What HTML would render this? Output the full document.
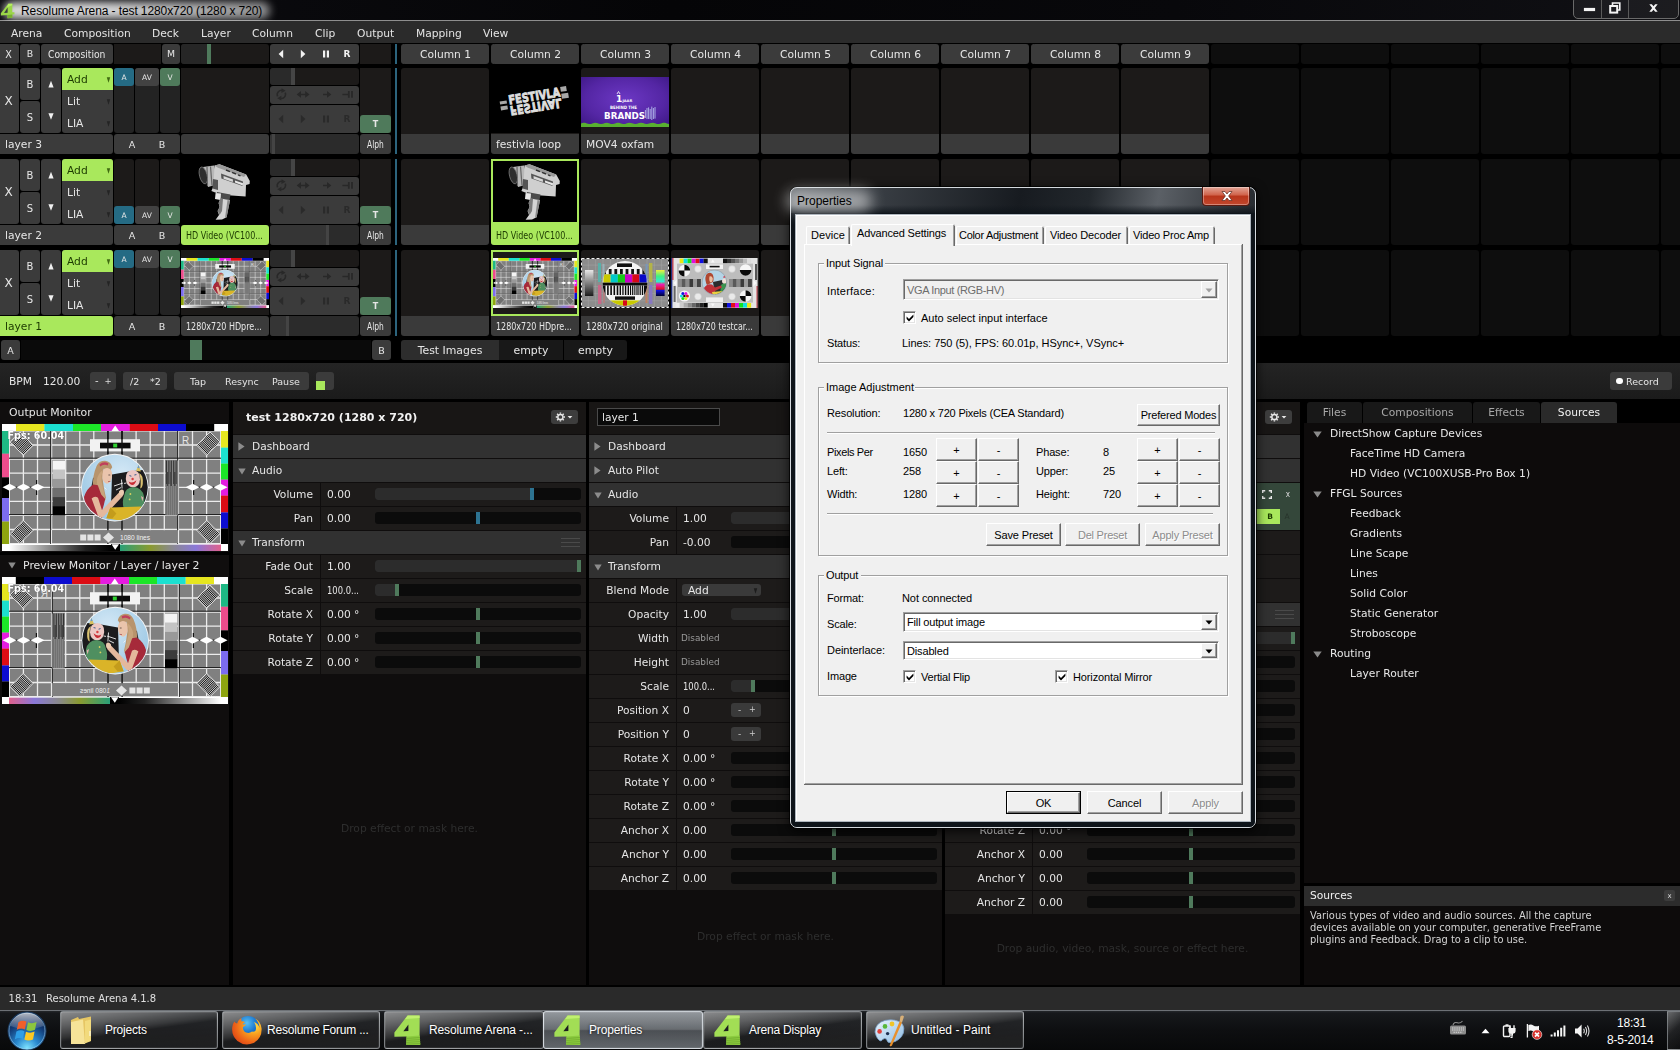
<!DOCTYPE html><html><head><meta charset="utf-8"><title>Resolume Arena - test 1280x720 (1280 x 720)</title><style>
html,body{margin:0;padding:0;}
body{width:1680px;height:1050px;overflow:hidden;background:#000;position:relative;font-family:"DejaVu Sans","Liberation Sans",sans-serif;font-size:10.7px;color:#e6e6e6;}
div,span,svg{position:absolute;box-sizing:border-box;}
.b{background:#3b3b3b;border-radius:3px;}
.t{white-space:nowrap;line-height:1;opacity:0.999;}
.t.win{opacity:1;}
.c{text-align:center;}
.cond{font-family:"DejaVu Sans Condensed","DejaVu Sans",sans-serif;}
.win{font-family:"Liberation Sans",sans-serif;color:#000;}
</style></head><body>
<div style="left:0px;top:0px;width:1680px;height:20px;background:linear-gradient(90deg,#0c0c10 0%,#050507 40%,#08080b 70%,#101014 100%);"></div>
<div style="left:0px;top:20px;width:1680px;height:1px;background:#8e8e8e;"></div>
<div style="left:4px;top:2px;width:266px;height:17px;background:linear-gradient(90deg,rgba(255,255,255,0.85) 0,rgba(255,255,255,0.85) 35%,rgba(255,255,255,0.55) 100%);border-radius:9px;filter:blur(4.5px);"></div>
<svg style="left:0px;top:3px;width:15px;height:16px" viewBox="0 0 28 30"><path d="M15.5 1.5L23 1.5L23 17.5L27 17.5L27 21L23 21.5L23 27.5L14 28.5L14 22.5L1.5 23.5L1.5 19Z" fill="#9ad548"/><path d="M15.5 1.5L23 1.5L23 4L12.6 8.6Z" fill="#b6ee62"/><path d="M14.2 8.5L14.2 18.2L7.6 18.6Z" fill="#3a3d40"/><path d="M14 22.5L23 21.6L23 27.5L14 28.5Z" fill="#78b030"/></svg>
<span class="t win" style="left:21px;top:-1.1999999999999993px;height:24px;line-height:24px;font-size:12px;color:#000;letter-spacing:-0.1px;">Resolume Arena - test 1280x720 (1280 x 720)</span>
<div style="left:1573px;top:-4px;width:106px;height:23px;background:rgba(255,255,255,0.05);border:1px solid #6a6a6a;border-radius:5px;"></div>
<div style="left:1601px;top:0px;width:1px;height:18px;background:#5a5a5a;"></div>
<div style="left:1628px;top:0px;width:1px;height:18px;background:#5a5a5a;"></div>
<div style="left:1584px;top:8px;width:11px;height:3px;background:#f4f4f4;box-shadow:0 0 1px #fff;"></div>
<svg style="left:1609px;top:2px;width:12px;height:12px" viewBox="0 0 12 12" fill="none" stroke="#f4f4f4" stroke-width="1.6"><path d="M3.5 3.2V1H10.8V8H8.6"/><rect x="1.2" y="4" width="7" height="6.6" stroke-width="2"/></svg>
<svg style="left:1647px;top:3px;width:13px;height:10px" viewBox="0 0 14 12"><path d="M2 1.5H5L7 4L9 1.5H12L8.6 6L12 10.5H9L7 8L5 10.5H2L5.4 6Z" fill="#f4f4f4"/></svg>
<div style="left:0px;top:21px;width:1680px;height:22px;background:#2b2b2b;"></div>
<span class="t " style="left:11px;top:22.900000000000002px;height:21.4px;line-height:21.4px;font-size:10.7px;color:#e4e4e4;">Arena</span>
<span class="t " style="left:64px;top:22.900000000000002px;height:21.4px;line-height:21.4px;font-size:10.7px;color:#e4e4e4;">Composition</span>
<span class="t " style="left:152px;top:22.900000000000002px;height:21.4px;line-height:21.4px;font-size:10.7px;color:#e4e4e4;">Deck</span>
<span class="t " style="left:201px;top:22.900000000000002px;height:21.4px;line-height:21.4px;font-size:10.7px;color:#e4e4e4;">Layer</span>
<span class="t " style="left:252px;top:22.900000000000002px;height:21.4px;line-height:21.4px;font-size:10.7px;color:#e4e4e4;">Column</span>
<span class="t " style="left:315px;top:22.900000000000002px;height:21.4px;line-height:21.4px;font-size:10.7px;color:#e4e4e4;">Clip</span>
<span class="t " style="left:357px;top:22.900000000000002px;height:21.4px;line-height:21.4px;font-size:10.7px;color:#e4e4e4;">Output</span>
<span class="t " style="left:416px;top:22.900000000000002px;height:21.4px;line-height:21.4px;font-size:10.7px;color:#e4e4e4;">Mapping</span>
<span class="t " style="left:483px;top:22.900000000000002px;height:21.4px;line-height:21.4px;font-size:10.7px;color:#e4e4e4;">View</span>
<div style="left:0px;top:44px;width:19px;height:20px;background:#3b3b3b;border-radius:3px;border-radius:0 3px 3px 0;"></div>
<span class="t c" style="left:0px;top:45.0px;height:19.2px;line-height:19.2px;font-size:9.6px;width:17px;color:#e6e6e6;">X</span>
<div style="left:20px;top:44px;width:20px;height:20px;background:#3b3b3b;border-radius:3px;"></div>
<span class="t  c" style="left:20px;top:45.2px;height:18.8px;line-height:18.8px;font-size:9.4px;width:20px;color:#e6e6e6;">B</span>
<div style="left:41px;top:44px;width:72px;height:20px;background:#3b3b3b;border-radius:3px;"></div>
<span class="t " style="left:48px;top:43.900000000000006px;height:21.4px;line-height:21.4px;font-size:10.7px;color:#e6e6e6;transform:scaleX(0.860);transform-origin:0 50%;">Composition</span>
<div style="left:114px;top:44px;width:47px;height:20px;background:#1c1a19;"></div>
<div style="left:162px;top:44px;width:18px;height:20px;background:#3b3b3b;border-radius:3px;"></div>
<span class="t  c" style="left:162px;top:45.3px;height:18.6px;line-height:18.6px;font-size:9.3px;width:18px;color:#e6e6e6;">M</span>
<div style="left:181px;top:44px;width:88px;height:20px;background:#1c1a19;border-radius:3px;"></div>
<div style="left:181px;top:44px;width:27px;height:20px;background:#262626;border-radius:3px 0 0 3px;"></div>
<div style="left:207px;top:44px;width:4px;height:20px;background:#4f7a5c;"></div>
<div style="left:270px;top:44px;width:89px;height:20px;background:#3b3b3b;border-radius:3px;"></div>
<svg style="left:277px;top:48.5px;width:8px;height:10px" viewBox="0 0 8 10"><path d="M6.2 0.8 L1.6 5 L6.2 9.2Z" fill="#f2f2f2"/></svg>
<svg style="left:299px;top:48.5px;width:8px;height:10px" viewBox="0 0 8 10"><path d="M1.8 0.8 L6.4 5 L1.8 9.2Z" fill="#f2f2f2"/></svg>
<svg style="left:322px;top:49.5px;width:8px;height:8px" viewBox="0 0 8 8"><rect x="1" y="0.5" width="2.2" height="7" fill="#f2f2f2"/><rect x="4.8" y="0.5" width="2.2" height="7" fill="#f2f2f2"/></svg>
<span class="t c" style="left:340px;top:45.3px;height:18px;line-height:18px;font-size:9px;width:14px;color:#f2f2f2;font-weight:bold;">R</span>
<div style="left:360px;top:44px;width:31px;height:20px;background:#1c1a19;"></div>
<div style="left:395px;top:44px;width:2px;height:316px;background:#2c647d;"></div>
<div style="left:394px;top:64px;width:4px;height:4px;background:#000;"></div>
<div style="left:394px;top:154px;width:4px;height:5px;background:#000;"></div>
<div style="left:394px;top:245px;width:4px;height:5px;background:#000;"></div>
<div style="left:394px;top:336px;width:4px;height:30px;background:#000;"></div>
<div style="left:402px;top:44px;width:87px;height:20px;background:#3b3b3b;border-radius:3px;"></div>
<span class="t  c" style="left:402px;top:43.900000000000006px;height:21.4px;line-height:21.4px;font-size:10.7px;width:87px;color:#e6e6e6;">Column 1</span>
<div style="left:401px;top:44px;width:3px;height:20px;background:#3b3b3b;border-radius:3px 0 0 3px;"></div>
<div style="left:492px;top:44px;width:87px;height:20px;background:#3b3b3b;border-radius:3px;"></div>
<span class="t  c" style="left:492px;top:43.900000000000006px;height:21.4px;line-height:21.4px;font-size:10.7px;width:87px;color:#e6e6e6;">Column 2</span>
<div style="left:491px;top:44px;width:3px;height:20px;background:#3b3b3b;border-radius:3px 0 0 3px;"></div>
<div style="left:582px;top:44px;width:87px;height:20px;background:#3b3b3b;border-radius:3px;"></div>
<span class="t  c" style="left:582px;top:43.900000000000006px;height:21.4px;line-height:21.4px;font-size:10.7px;width:87px;color:#e6e6e6;">Column 3</span>
<div style="left:581px;top:44px;width:3px;height:20px;background:#3b3b3b;border-radius:3px 0 0 3px;"></div>
<div style="left:672px;top:44px;width:87px;height:20px;background:#3b3b3b;border-radius:3px;"></div>
<span class="t  c" style="left:672px;top:43.900000000000006px;height:21.4px;line-height:21.4px;font-size:10.7px;width:87px;color:#e6e6e6;">Column 4</span>
<div style="left:671px;top:44px;width:3px;height:20px;background:#3b3b3b;border-radius:3px 0 0 3px;"></div>
<div style="left:762px;top:44px;width:87px;height:20px;background:#3b3b3b;border-radius:3px;"></div>
<span class="t  c" style="left:762px;top:43.900000000000006px;height:21.4px;line-height:21.4px;font-size:10.7px;width:87px;color:#e6e6e6;">Column 5</span>
<div style="left:761px;top:44px;width:3px;height:20px;background:#3b3b3b;border-radius:3px 0 0 3px;"></div>
<div style="left:852px;top:44px;width:87px;height:20px;background:#3b3b3b;border-radius:3px;"></div>
<span class="t  c" style="left:852px;top:43.900000000000006px;height:21.4px;line-height:21.4px;font-size:10.7px;width:87px;color:#e6e6e6;">Column 6</span>
<div style="left:851px;top:44px;width:3px;height:20px;background:#3b3b3b;border-radius:3px 0 0 3px;"></div>
<div style="left:942px;top:44px;width:87px;height:20px;background:#3b3b3b;border-radius:3px;"></div>
<span class="t  c" style="left:942px;top:43.900000000000006px;height:21.4px;line-height:21.4px;font-size:10.7px;width:87px;color:#e6e6e6;">Column 7</span>
<div style="left:941px;top:44px;width:3px;height:20px;background:#3b3b3b;border-radius:3px 0 0 3px;"></div>
<div style="left:1032px;top:44px;width:87px;height:20px;background:#3b3b3b;border-radius:3px;"></div>
<span class="t  c" style="left:1032px;top:43.900000000000006px;height:21.4px;line-height:21.4px;font-size:10.7px;width:87px;color:#e6e6e6;">Column 8</span>
<div style="left:1031px;top:44px;width:3px;height:20px;background:#3b3b3b;border-radius:3px 0 0 3px;"></div>
<div style="left:1122px;top:44px;width:87px;height:20px;background:#3b3b3b;border-radius:3px;"></div>
<span class="t  c" style="left:1122px;top:43.900000000000006px;height:21.4px;line-height:21.4px;font-size:10.7px;width:87px;color:#e6e6e6;">Column 9</span>
<div style="left:1121px;top:44px;width:3px;height:20px;background:#3b3b3b;border-radius:3px 0 0 3px;"></div>
<div style="left:1211px;top:44px;width:88px;height:20px;background:#0e0e0e;border-radius:3px;"></div>
<div style="left:1301px;top:44px;width:88px;height:20px;background:#0e0e0e;border-radius:3px;"></div>
<div style="left:1391px;top:44px;width:88px;height:20px;background:#0e0e0e;border-radius:3px;"></div>
<div style="left:1481px;top:44px;width:88px;height:20px;background:#0e0e0e;border-radius:3px;"></div>
<div style="left:1571px;top:44px;width:88px;height:20px;background:#0e0e0e;border-radius:3px;"></div>
<div style="left:1661px;top:44px;width:88px;height:20px;background:#0e0e0e;border-radius:3px;"></div>
<div style="left:0px;top:68px;width:19px;height:65px;background:#3b3b3b;border-radius:3px;border-radius:0 3px 3px 0;"></div>
<span class="t c" style="left:0px;top:89px;height:24px;line-height:24px;font-size:12px;width:17px;color:#e6e6e6;">X</span>
<div style="left:20px;top:68px;width:20px;height:32px;background:#3b3b3b;border-radius:3px;"></div>
<span class="t  c" style="left:20px;top:75.0px;height:20px;line-height:20px;font-size:10px;width:20px;color:#e6e6e6;">B</span>
<div style="left:20px;top:101px;width:20px;height:32px;background:#3b3b3b;border-radius:3px;"></div>
<span class="t  c" style="left:20px;top:108.0px;height:20px;line-height:20px;font-size:10px;width:20px;color:#e6e6e6;">S</span>
<div style="left:41px;top:68px;width:20px;height:65px;background:#3b3b3b;border-radius:3px;"></div>
<svg style="left:41px;top:68px;width:20px;height:65px" viewBox="0 0 20 65"><path d="M7.4 19.4 L12.6 19.4 L10 12.8Z M7.4 45.2 L12.6 45.2 L10 51.8Z" fill="#f0f0f0"/></svg>
<div style="left:62px;top:68px;width:51px;height:65px;background:#3b3b3b;border-radius:3px;"></div>
<div style="left:62px;top:68px;width:51px;height:22px;background:#a9e85c;border-radius:3px 3px 0 0;"></div>
<span class="t " style="left:67px;top:68.8px;height:21.4px;line-height:21.4px;font-size:10.7px;color:#1c3a00;">Add</span>
<span class="t " style="left:67px;top:90.89999999999999px;height:21.4px;line-height:21.4px;font-size:10.7px;color:#e6e6e6;">Lit</span>
<span class="t " style="left:67px;top:112.89999999999999px;height:21.4px;line-height:21.4px;font-size:10.7px;color:#e6e6e6;">LIA</span>
<svg style="left:106px;top:77px;width:5px;height:6px" viewBox="0 0 5 6"><path d="M0.8 0.3 L4.2 0.3 L2.5 5.8Z" fill="#3f6a10"/></svg>
<svg style="left:106px;top:99px;width:5px;height:6px" viewBox="0 0 5 6"><path d="M0.8 0.3 L4.2 0.3 L2.5 5.8Z" fill="#242424"/></svg>
<svg style="left:106px;top:121px;width:5px;height:6px" viewBox="0 0 5 6"><path d="M0.8 0.3 L4.2 0.3 L2.5 5.8Z" fill="#242424"/></svg>
<div style="left:114px;top:68px;width:20px;height:65px;background:#232323;border-radius:3px;"></div>
<div style="left:114px;top:68px;width:20px;height:18px;background:#256b84;border-radius:3px;"></div>
<span class="t c" style="left:114px;top:69.5px;height:15.0px;line-height:15.0px;font-size:7.5px;width:20px;color:#e8e8e8;">A</span>
<div style="left:135px;top:68px;width:24px;height:65px;background:#232323;border-radius:3px;"></div>
<div style="left:135px;top:68px;width:24px;height:18px;background:#424242;border-radius:3px;"></div>
<span class="t c" style="left:135px;top:69.5px;height:15.0px;line-height:15.0px;font-size:7.5px;width:24px;color:#e8e8e8;">AV</span>
<div style="left:160px;top:68px;width:20px;height:65px;background:#232323;border-radius:3px;"></div>
<div style="left:160px;top:68px;width:20px;height:18px;background:#4f7a5b;border-radius:3px;"></div>
<span class="t c" style="left:160px;top:69.5px;height:15.0px;line-height:15.0px;font-size:7.5px;width:20px;color:#e8e8e8;">V</span>
<div style="left:181px;top:68px;width:88px;height:65px;background:#1c1a19;"></div>
<div style="left:270px;top:68px;width:89px;height:17px;background:#1c1a19;border-radius:3px;"></div>
<div style="left:270px;top:68px;width:22px;height:17px;background:#2a2a2a;border-radius:3px 0 0 3px;"></div>
<div style="left:291px;top:68px;width:4px;height:17px;background:#454545;"></div>
<div style="left:270px;top:86px;width:89px;height:18px;background:#3b3b3b;border-radius:3px;"></div>
<svg style="left:270px;top:86px;width:89px;height:18px" viewBox="0 0 89 18"><g fill="none" stroke="#282828" stroke-width="1.5"><path d="M7.6 10.4A4.3 4.3 0 0 1 13 4.6M15.2 6.6A4.3 4.3 0 0 1 9.8 12.3"/><path d="M29.5 8.4H37M53 8.4H58M72.4 8.4H78"/><path d="M78.8 5V11.8M82 5V11.8" stroke-width="1.8"/></g><g fill="#282828"><path d="M11.6 2.2L15.6 4.8L11.4 7Z M11.2 14.6L7.2 12.2L11.4 9.8Z"/><path d="M26.6 8.4L31 5V11.8Z M39.6 8.4L35.2 5V11.8Z M61.4 8.4L57 5V11.8Z"/></g></svg>
<div style="left:270px;top:105px;width:89px;height:28px;background:#3b3b3b;border-radius:3px;"></div>
<svg style="left:277px;top:113.5px;width:8px;height:10px" viewBox="0 0 8 10"><path d="M6.2 0.8 L1.6 5 L6.2 9.2Z" fill="#2a2a2a"/></svg>
<svg style="left:299px;top:113.5px;width:8px;height:10px" viewBox="0 0 8 10"><path d="M1.8 0.8 L6.4 5 L1.8 9.2Z" fill="#2a2a2a"/></svg>
<svg style="left:322px;top:114.5px;width:8px;height:8px" viewBox="0 0 8 8"><rect x="1" y="0.5" width="2.2" height="7" fill="#2a2a2a"/><rect x="4.8" y="0.5" width="2.2" height="7" fill="#2a2a2a"/></svg>
<span class="t c" style="left:340px;top:110.3px;height:18px;line-height:18px;font-size:9px;width:14px;color:#2a2a2a;font-weight:bold;">R</span>
<div style="left:360px;top:68px;width:31px;height:65px;background:#1c1a19;"></div>
<div style="left:360px;top:115px;width:31px;height:18px;background:#4f7a5b;border-radius:3px;"></div>
<span class="t  c" style="left:360px;top:117.3px;height:16px;line-height:16px;font-size:8px;width:31px;color:#e6e6e6;font-weight:bold;">T</span>
<div style="left:0px;top:134px;width:113px;height:20px;background:#3b3b3b;border-radius:0 3px 3px 0;"></div>
<span class="t " style="left:5px;top:133.60000000000002px;height:21.4px;line-height:21.4px;font-size:10.7px;color:#e6e6e6;">layer 3</span>
<div style="left:114px;top:134px;width:66px;height:20px;background:#3b3b3b;border-radius:3px;"></div>
<span class="t c" style="left:114px;top:134.8px;height:19.0px;line-height:19.0px;font-size:9.5px;width:36px;color:#e6e6e6;">A</span>
<span class="t c" style="left:144px;top:134.8px;height:19.0px;line-height:19.0px;font-size:9.5px;width:36px;color:#e6e6e6;">B</span>
<div style="left:270px;top:134px;width:89px;height:20px;background:#2b2b2b;border-radius:3px;"></div>
<div style="left:270px;top:134px;width:2px;height:20px;background:#353535;border-radius:3px 0 0 3px;"></div>
<div style="left:272px;top:134px;width:3px;height:20px;background:#444;"></div>
<div style="left:360px;top:134px;width:31px;height:20px;background:#3b3b3b;border-radius:3px;"></div>
<span class="t " style="left:367px;top:133.60000000000002px;height:21.4px;line-height:21.4px;font-size:10.7px;color:#e6e6e6;transform:scaleX(0.704);transform-origin:0 50%;">Alph</span>
<div style="left:0px;top:159px;width:19px;height:65px;background:#3b3b3b;border-radius:3px;border-radius:0 3px 3px 0;"></div>
<span class="t c" style="left:0px;top:180px;height:24px;line-height:24px;font-size:12px;width:17px;color:#e6e6e6;">X</span>
<div style="left:20px;top:159px;width:20px;height:32px;background:#3b3b3b;border-radius:3px;"></div>
<span class="t  c" style="left:20px;top:166.0px;height:20px;line-height:20px;font-size:10px;width:20px;color:#e6e6e6;">B</span>
<div style="left:20px;top:192px;width:20px;height:32px;background:#3b3b3b;border-radius:3px;"></div>
<span class="t  c" style="left:20px;top:199.0px;height:20px;line-height:20px;font-size:10px;width:20px;color:#e6e6e6;">S</span>
<div style="left:41px;top:159px;width:20px;height:65px;background:#3b3b3b;border-radius:3px;"></div>
<svg style="left:41px;top:159px;width:20px;height:65px" viewBox="0 0 20 65"><path d="M7.4 19.4 L12.6 19.4 L10 12.8Z M7.4 45.2 L12.6 45.2 L10 51.8Z" fill="#f0f0f0"/></svg>
<div style="left:62px;top:159px;width:51px;height:65px;background:#3b3b3b;border-radius:3px;"></div>
<div style="left:62px;top:159px;width:51px;height:22px;background:#a9e85c;border-radius:3px 3px 0 0;"></div>
<span class="t " style="left:67px;top:159.8px;height:21.4px;line-height:21.4px;font-size:10.7px;color:#1c3a00;">Add</span>
<span class="t " style="left:67px;top:181.9px;height:21.4px;line-height:21.4px;font-size:10.7px;color:#e6e6e6;">Lit</span>
<span class="t " style="left:67px;top:203.9px;height:21.4px;line-height:21.4px;font-size:10.7px;color:#e6e6e6;">LIA</span>
<svg style="left:106px;top:168px;width:5px;height:6px" viewBox="0 0 5 6"><path d="M0.8 0.3 L4.2 0.3 L2.5 5.8Z" fill="#3f6a10"/></svg>
<svg style="left:106px;top:190px;width:5px;height:6px" viewBox="0 0 5 6"><path d="M0.8 0.3 L4.2 0.3 L2.5 5.8Z" fill="#242424"/></svg>
<svg style="left:106px;top:212px;width:5px;height:6px" viewBox="0 0 5 6"><path d="M0.8 0.3 L4.2 0.3 L2.5 5.8Z" fill="#242424"/></svg>
<div style="left:114px;top:159px;width:20px;height:65px;background:#1c1a19;border-radius:3px;"></div>
<div style="left:114px;top:206px;width:20px;height:18px;background:#256b84;border-radius:3px;"></div>
<span class="t c" style="left:114px;top:207.5px;height:15.0px;line-height:15.0px;font-size:7.5px;width:20px;color:#e8e8e8;">A</span>
<div style="left:135px;top:159px;width:24px;height:65px;background:#1c1a19;border-radius:3px;"></div>
<div style="left:135px;top:206px;width:24px;height:18px;background:#424242;border-radius:3px;"></div>
<span class="t c" style="left:135px;top:207.5px;height:15.0px;line-height:15.0px;font-size:7.5px;width:24px;color:#e8e8e8;">AV</span>
<div style="left:160px;top:159px;width:20px;height:65px;background:#1c1a19;border-radius:3px;"></div>
<div style="left:160px;top:206px;width:20px;height:18px;background:#4f7a5b;border-radius:3px;"></div>
<span class="t c" style="left:160px;top:207.5px;height:15.0px;line-height:15.0px;font-size:7.5px;width:20px;color:#e8e8e8;">V</span>
<div style="left:181px;top:159px;width:88px;height:65px;background:#1c1a19;"></div>
<div style="left:270px;top:159px;width:89px;height:17px;background:#1c1a19;border-radius:3px;"></div>
<div style="left:270px;top:159px;width:22px;height:17px;background:#2a2a2a;border-radius:3px 0 0 3px;"></div>
<div style="left:291px;top:159px;width:4px;height:17px;background:#454545;"></div>
<div style="left:270px;top:177px;width:89px;height:18px;background:#3b3b3b;border-radius:3px;"></div>
<svg style="left:270px;top:177px;width:89px;height:18px" viewBox="0 0 89 18"><g fill="none" stroke="#282828" stroke-width="1.5"><path d="M7.6 10.4A4.3 4.3 0 0 1 13 4.6M15.2 6.6A4.3 4.3 0 0 1 9.8 12.3"/><path d="M29.5 8.4H37M53 8.4H58M72.4 8.4H78"/><path d="M78.8 5V11.8M82 5V11.8" stroke-width="1.8"/></g><g fill="#282828"><path d="M11.6 2.2L15.6 4.8L11.4 7Z M11.2 14.6L7.2 12.2L11.4 9.8Z"/><path d="M26.6 8.4L31 5V11.8Z M39.6 8.4L35.2 5V11.8Z M61.4 8.4L57 5V11.8Z"/></g></svg>
<div style="left:270px;top:196px;width:89px;height:28px;background:#3b3b3b;border-radius:3px;"></div>
<svg style="left:277px;top:204.5px;width:8px;height:10px" viewBox="0 0 8 10"><path d="M6.2 0.8 L1.6 5 L6.2 9.2Z" fill="#2a2a2a"/></svg>
<svg style="left:299px;top:204.5px;width:8px;height:10px" viewBox="0 0 8 10"><path d="M1.8 0.8 L6.4 5 L1.8 9.2Z" fill="#2a2a2a"/></svg>
<svg style="left:322px;top:205.5px;width:8px;height:8px" viewBox="0 0 8 8"><rect x="1" y="0.5" width="2.2" height="7" fill="#2a2a2a"/><rect x="4.8" y="0.5" width="2.2" height="7" fill="#2a2a2a"/></svg>
<span class="t c" style="left:340px;top:201.3px;height:18px;line-height:18px;font-size:9px;width:14px;color:#2a2a2a;font-weight:bold;">R</span>
<div style="left:360px;top:159px;width:31px;height:65px;background:#1c1a19;"></div>
<div style="left:360px;top:206px;width:31px;height:18px;background:#4f7a5b;border-radius:3px;"></div>
<span class="t  c" style="left:360px;top:208.3px;height:16px;line-height:16px;font-size:8px;width:31px;color:#e6e6e6;font-weight:bold;">T</span>
<div style="left:0px;top:225px;width:113px;height:20px;background:#3b3b3b;border-radius:0 3px 3px 0;"></div>
<span class="t " style="left:5px;top:224.60000000000002px;height:21.4px;line-height:21.4px;font-size:10.7px;color:#e6e6e6;">layer 2</span>
<div style="left:114px;top:225px;width:66px;height:20px;background:#3b3b3b;border-radius:3px;"></div>
<span class="t c" style="left:114px;top:225.8px;height:19.0px;line-height:19.0px;font-size:9.5px;width:36px;color:#e6e6e6;">A</span>
<span class="t c" style="left:144px;top:225.8px;height:19.0px;line-height:19.0px;font-size:9.5px;width:36px;color:#e6e6e6;">B</span>
<div style="left:270px;top:225px;width:89px;height:20px;background:#2b2b2b;border-radius:3px;"></div>
<div style="left:270px;top:225px;width:56px;height:20px;background:#353535;border-radius:3px 0 0 3px;"></div>
<div style="left:326px;top:225px;width:3px;height:20px;background:#444;"></div>
<div style="left:360px;top:225px;width:31px;height:20px;background:#3b3b3b;border-radius:3px;"></div>
<span class="t " style="left:367px;top:224.60000000000002px;height:21.4px;line-height:21.4px;font-size:10.7px;color:#e6e6e6;transform:scaleX(0.704);transform-origin:0 50%;">Alph</span>
<div style="left:0px;top:250px;width:19px;height:65px;background:#3b3b3b;border-radius:3px;border-radius:0 3px 3px 0;"></div>
<span class="t c" style="left:0px;top:271px;height:24px;line-height:24px;font-size:12px;width:17px;color:#e6e6e6;">X</span>
<div style="left:20px;top:250px;width:20px;height:32px;background:#3b3b3b;border-radius:3px;"></div>
<span class="t  c" style="left:20px;top:257.0px;height:20px;line-height:20px;font-size:10px;width:20px;color:#e6e6e6;">B</span>
<div style="left:20px;top:283px;width:20px;height:32px;background:#3b3b3b;border-radius:3px;"></div>
<span class="t  c" style="left:20px;top:290.0px;height:20px;line-height:20px;font-size:10px;width:20px;color:#e6e6e6;">S</span>
<div style="left:41px;top:250px;width:20px;height:65px;background:#3b3b3b;border-radius:3px;"></div>
<svg style="left:41px;top:250px;width:20px;height:65px" viewBox="0 0 20 65"><path d="M7.4 19.4 L12.6 19.4 L10 12.8Z M7.4 45.2 L12.6 45.2 L10 51.8Z" fill="#f0f0f0"/></svg>
<div style="left:62px;top:250px;width:51px;height:65px;background:#3b3b3b;border-radius:3px;"></div>
<div style="left:62px;top:250px;width:51px;height:22px;background:#a9e85c;border-radius:3px 3px 0 0;"></div>
<span class="t " style="left:67px;top:250.8px;height:21.4px;line-height:21.4px;font-size:10.7px;color:#1c3a00;">Add</span>
<span class="t " style="left:67px;top:272.90000000000003px;height:21.4px;line-height:21.4px;font-size:10.7px;color:#e6e6e6;">Lit</span>
<span class="t " style="left:67px;top:294.90000000000003px;height:21.4px;line-height:21.4px;font-size:10.7px;color:#e6e6e6;">LIA</span>
<svg style="left:106px;top:259px;width:5px;height:6px" viewBox="0 0 5 6"><path d="M0.8 0.3 L4.2 0.3 L2.5 5.8Z" fill="#3f6a10"/></svg>
<svg style="left:106px;top:281px;width:5px;height:6px" viewBox="0 0 5 6"><path d="M0.8 0.3 L4.2 0.3 L2.5 5.8Z" fill="#242424"/></svg>
<svg style="left:106px;top:303px;width:5px;height:6px" viewBox="0 0 5 6"><path d="M0.8 0.3 L4.2 0.3 L2.5 5.8Z" fill="#242424"/></svg>
<div style="left:114px;top:250px;width:20px;height:65px;background:#232323;border-radius:3px;"></div>
<div style="left:114px;top:250px;width:20px;height:18px;background:#256b84;border-radius:3px;"></div>
<span class="t c" style="left:114px;top:251.5px;height:15.0px;line-height:15.0px;font-size:7.5px;width:20px;color:#e8e8e8;">A</span>
<div style="left:135px;top:250px;width:24px;height:65px;background:#232323;border-radius:3px;"></div>
<div style="left:135px;top:250px;width:24px;height:18px;background:#424242;border-radius:3px;"></div>
<span class="t c" style="left:135px;top:251.5px;height:15.0px;line-height:15.0px;font-size:7.5px;width:24px;color:#e8e8e8;">AV</span>
<div style="left:160px;top:250px;width:20px;height:65px;background:#232323;border-radius:3px;"></div>
<div style="left:160px;top:250px;width:20px;height:18px;background:#4f7a5b;border-radius:3px;"></div>
<span class="t c" style="left:160px;top:251.5px;height:15.0px;line-height:15.0px;font-size:7.5px;width:20px;color:#e8e8e8;">V</span>
<div style="left:181px;top:250px;width:88px;height:65px;background:#1c1a19;"></div>
<div style="left:270px;top:250px;width:89px;height:17px;background:#1c1a19;border-radius:3px;"></div>
<div style="left:270px;top:250px;width:22px;height:17px;background:#2a2a2a;border-radius:3px 0 0 3px;"></div>
<div style="left:291px;top:250px;width:4px;height:17px;background:#454545;"></div>
<div style="left:270px;top:268px;width:89px;height:18px;background:#3b3b3b;border-radius:3px;"></div>
<svg style="left:270px;top:268px;width:89px;height:18px" viewBox="0 0 89 18"><g fill="none" stroke="#282828" stroke-width="1.5"><path d="M7.6 10.4A4.3 4.3 0 0 1 13 4.6M15.2 6.6A4.3 4.3 0 0 1 9.8 12.3"/><path d="M29.5 8.4H37M53 8.4H58M72.4 8.4H78"/><path d="M78.8 5V11.8M82 5V11.8" stroke-width="1.8"/></g><g fill="#282828"><path d="M11.6 2.2L15.6 4.8L11.4 7Z M11.2 14.6L7.2 12.2L11.4 9.8Z"/><path d="M26.6 8.4L31 5V11.8Z M39.6 8.4L35.2 5V11.8Z M61.4 8.4L57 5V11.8Z"/></g></svg>
<div style="left:270px;top:287px;width:89px;height:28px;background:#3b3b3b;border-radius:3px;"></div>
<svg style="left:277px;top:295.5px;width:8px;height:10px" viewBox="0 0 8 10"><path d="M6.2 0.8 L1.6 5 L6.2 9.2Z" fill="#2a2a2a"/></svg>
<svg style="left:299px;top:295.5px;width:8px;height:10px" viewBox="0 0 8 10"><path d="M1.8 0.8 L6.4 5 L1.8 9.2Z" fill="#2a2a2a"/></svg>
<svg style="left:322px;top:296.5px;width:8px;height:8px" viewBox="0 0 8 8"><rect x="1" y="0.5" width="2.2" height="7" fill="#2a2a2a"/><rect x="4.8" y="0.5" width="2.2" height="7" fill="#2a2a2a"/></svg>
<span class="t c" style="left:340px;top:292.3px;height:18px;line-height:18px;font-size:9px;width:14px;color:#2a2a2a;font-weight:bold;">R</span>
<div style="left:360px;top:250px;width:31px;height:65px;background:#1c1a19;"></div>
<div style="left:360px;top:297px;width:31px;height:18px;background:#4f7a5b;border-radius:3px;"></div>
<span class="t  c" style="left:360px;top:299.3px;height:16px;line-height:16px;font-size:8px;width:31px;color:#e6e6e6;font-weight:bold;">T</span>
<div style="left:0px;top:316px;width:113px;height:20px;background:#a9e85c;border-radius:0 3px 3px 0;"></div>
<span class="t " style="left:5px;top:315.6px;height:21.4px;line-height:21.4px;font-size:10.7px;color:#1c3a00;">layer 1</span>
<div style="left:114px;top:316px;width:66px;height:20px;background:#3b3b3b;border-radius:3px;"></div>
<span class="t c" style="left:114px;top:316.8px;height:19.0px;line-height:19.0px;font-size:9.5px;width:36px;color:#e6e6e6;">A</span>
<span class="t c" style="left:144px;top:316.8px;height:19.0px;line-height:19.0px;font-size:9.5px;width:36px;color:#e6e6e6;">B</span>
<div style="left:270px;top:316px;width:89px;height:20px;background:#2b2b2b;border-radius:3px;"></div>
<div style="left:270px;top:316px;width:16px;height:20px;background:#353535;border-radius:3px 0 0 3px;"></div>
<div style="left:286px;top:316px;width:3px;height:20px;background:#444;"></div>
<div style="left:360px;top:316px;width:31px;height:20px;background:#3b3b3b;border-radius:3px;"></div>
<span class="t " style="left:367px;top:315.6px;height:21.4px;line-height:21.4px;font-size:10.7px;color:#e6e6e6;transform:scaleX(0.704);transform-origin:0 50%;">Alph</span>
<div style="left:401px;top:68px;width:88px;height:66px;background:#1c1a19;border-radius:3px 3px 0 0;"></div>
<div style="left:401px;top:134px;width:88px;height:20px;background:#3a3a3a;border-radius:0 0 3px 3px;"></div>
<div style="left:491px;top:68px;width:88px;height:66px;background:#1c1a19;border-radius:3px 3px 0 0;"></div>
<div style="left:491px;top:134px;width:88px;height:20px;background:#3a3a3a;border-radius:0 0 3px 3px;"></div>
<div style="left:581px;top:68px;width:88px;height:66px;background:#1c1a19;border-radius:3px 3px 0 0;"></div>
<div style="left:581px;top:134px;width:88px;height:20px;background:#3a3a3a;border-radius:0 0 3px 3px;"></div>
<div style="left:671px;top:68px;width:88px;height:66px;background:#1c1a19;border-radius:3px 3px 0 0;"></div>
<div style="left:671px;top:134px;width:88px;height:20px;background:#3a3a3a;border-radius:0 0 3px 3px;"></div>
<div style="left:761px;top:68px;width:88px;height:66px;background:#1c1a19;border-radius:3px 3px 0 0;"></div>
<div style="left:761px;top:134px;width:88px;height:20px;background:#3a3a3a;border-radius:0 0 3px 3px;"></div>
<div style="left:851px;top:68px;width:88px;height:66px;background:#1c1a19;border-radius:3px 3px 0 0;"></div>
<div style="left:851px;top:134px;width:88px;height:20px;background:#3a3a3a;border-radius:0 0 3px 3px;"></div>
<div style="left:941px;top:68px;width:88px;height:66px;background:#1c1a19;border-radius:3px 3px 0 0;"></div>
<div style="left:941px;top:134px;width:88px;height:20px;background:#3a3a3a;border-radius:0 0 3px 3px;"></div>
<div style="left:1031px;top:68px;width:88px;height:66px;background:#1c1a19;border-radius:3px 3px 0 0;"></div>
<div style="left:1031px;top:134px;width:88px;height:20px;background:#3a3a3a;border-radius:0 0 3px 3px;"></div>
<div style="left:1121px;top:68px;width:88px;height:66px;background:#1c1a19;border-radius:3px 3px 0 0;"></div>
<div style="left:1121px;top:134px;width:88px;height:20px;background:#3a3a3a;border-radius:0 0 3px 3px;"></div>
<div style="left:1211px;top:68px;width:88px;height:86px;background:#0e0e0e;border-radius:3px;"></div>
<div style="left:1301px;top:68px;width:88px;height:86px;background:#0e0e0e;border-radius:3px;"></div>
<div style="left:1391px;top:68px;width:88px;height:86px;background:#0e0e0e;border-radius:3px;"></div>
<div style="left:1481px;top:68px;width:88px;height:86px;background:#0e0e0e;border-radius:3px;"></div>
<div style="left:1571px;top:68px;width:88px;height:86px;background:#0e0e0e;border-radius:3px;"></div>
<div style="left:1661px;top:68px;width:88px;height:86px;background:#0e0e0e;border-radius:3px;"></div>
<div style="left:401px;top:159px;width:88px;height:66px;background:#1c1a19;border-radius:3px 3px 0 0;"></div>
<div style="left:401px;top:225px;width:88px;height:20px;background:#3a3a3a;border-radius:0 0 3px 3px;"></div>
<div style="left:491px;top:159px;width:88px;height:66px;background:#1c1a19;border-radius:3px 3px 0 0;"></div>
<div style="left:491px;top:225px;width:88px;height:20px;background:#3a3a3a;border-radius:0 0 3px 3px;"></div>
<div style="left:581px;top:159px;width:88px;height:66px;background:#1c1a19;border-radius:3px 3px 0 0;"></div>
<div style="left:581px;top:225px;width:88px;height:20px;background:#3a3a3a;border-radius:0 0 3px 3px;"></div>
<div style="left:671px;top:159px;width:88px;height:66px;background:#1c1a19;border-radius:3px 3px 0 0;"></div>
<div style="left:671px;top:225px;width:88px;height:20px;background:#3a3a3a;border-radius:0 0 3px 3px;"></div>
<div style="left:761px;top:159px;width:88px;height:66px;background:#1c1a19;border-radius:3px 3px 0 0;"></div>
<div style="left:761px;top:225px;width:88px;height:20px;background:#3a3a3a;border-radius:0 0 3px 3px;"></div>
<div style="left:851px;top:159px;width:88px;height:66px;background:#1c1a19;border-radius:3px 3px 0 0;"></div>
<div style="left:851px;top:225px;width:88px;height:20px;background:#3a3a3a;border-radius:0 0 3px 3px;"></div>
<div style="left:941px;top:159px;width:88px;height:66px;background:#1c1a19;border-radius:3px 3px 0 0;"></div>
<div style="left:941px;top:225px;width:88px;height:20px;background:#3a3a3a;border-radius:0 0 3px 3px;"></div>
<div style="left:1031px;top:159px;width:88px;height:66px;background:#1c1a19;border-radius:3px 3px 0 0;"></div>
<div style="left:1031px;top:225px;width:88px;height:20px;background:#3a3a3a;border-radius:0 0 3px 3px;"></div>
<div style="left:1121px;top:159px;width:88px;height:66px;background:#1c1a19;border-radius:3px 3px 0 0;"></div>
<div style="left:1121px;top:225px;width:88px;height:20px;background:#3a3a3a;border-radius:0 0 3px 3px;"></div>
<div style="left:1211px;top:159px;width:88px;height:86px;background:#0e0e0e;border-radius:3px;"></div>
<div style="left:1301px;top:159px;width:88px;height:86px;background:#0e0e0e;border-radius:3px;"></div>
<div style="left:1391px;top:159px;width:88px;height:86px;background:#0e0e0e;border-radius:3px;"></div>
<div style="left:1481px;top:159px;width:88px;height:86px;background:#0e0e0e;border-radius:3px;"></div>
<div style="left:1571px;top:159px;width:88px;height:86px;background:#0e0e0e;border-radius:3px;"></div>
<div style="left:1661px;top:159px;width:88px;height:86px;background:#0e0e0e;border-radius:3px;"></div>
<div style="left:401px;top:250px;width:88px;height:66px;background:#1c1a19;border-radius:3px 3px 0 0;"></div>
<div style="left:401px;top:316px;width:88px;height:20px;background:#3a3a3a;border-radius:0 0 3px 3px;"></div>
<div style="left:491px;top:250px;width:88px;height:66px;background:#1c1a19;border-radius:3px 3px 0 0;"></div>
<div style="left:491px;top:316px;width:88px;height:20px;background:#3a3a3a;border-radius:0 0 3px 3px;"></div>
<div style="left:581px;top:250px;width:88px;height:66px;background:#1c1a19;border-radius:3px 3px 0 0;"></div>
<div style="left:581px;top:316px;width:88px;height:20px;background:#3a3a3a;border-radius:0 0 3px 3px;"></div>
<div style="left:671px;top:250px;width:88px;height:66px;background:#1c1a19;border-radius:3px 3px 0 0;"></div>
<div style="left:671px;top:316px;width:88px;height:20px;background:#3a3a3a;border-radius:0 0 3px 3px;"></div>
<div style="left:761px;top:250px;width:88px;height:66px;background:#1c1a19;border-radius:3px 3px 0 0;"></div>
<div style="left:761px;top:316px;width:88px;height:20px;background:#3a3a3a;border-radius:0 0 3px 3px;"></div>
<div style="left:851px;top:250px;width:88px;height:66px;background:#1c1a19;border-radius:3px 3px 0 0;"></div>
<div style="left:851px;top:316px;width:88px;height:20px;background:#3a3a3a;border-radius:0 0 3px 3px;"></div>
<div style="left:941px;top:250px;width:88px;height:66px;background:#1c1a19;border-radius:3px 3px 0 0;"></div>
<div style="left:941px;top:316px;width:88px;height:20px;background:#3a3a3a;border-radius:0 0 3px 3px;"></div>
<div style="left:1031px;top:250px;width:88px;height:66px;background:#1c1a19;border-radius:3px 3px 0 0;"></div>
<div style="left:1031px;top:316px;width:88px;height:20px;background:#3a3a3a;border-radius:0 0 3px 3px;"></div>
<div style="left:1121px;top:250px;width:88px;height:66px;background:#1c1a19;border-radius:3px 3px 0 0;"></div>
<div style="left:1121px;top:316px;width:88px;height:20px;background:#3a3a3a;border-radius:0 0 3px 3px;"></div>
<div style="left:1211px;top:250px;width:88px;height:86px;background:#0e0e0e;border-radius:3px;"></div>
<div style="left:1301px;top:250px;width:88px;height:86px;background:#0e0e0e;border-radius:3px;"></div>
<div style="left:1391px;top:250px;width:88px;height:86px;background:#0e0e0e;border-radius:3px;"></div>
<div style="left:1481px;top:250px;width:88px;height:86px;background:#0e0e0e;border-radius:3px;"></div>
<div style="left:1571px;top:250px;width:88px;height:86px;background:#0e0e0e;border-radius:3px;"></div>
<div style="left:1661px;top:250px;width:88px;height:86px;background:#0e0e0e;border-radius:3px;"></div>
<div style="left:181px;top:134px;width:88px;height:20px;background:#3b3b3b;border-radius:3px;"></div>
<div style="left:181px;top:225px;width:88px;height:20px;background:#a9e85c;border-radius:3px;"></div>
<span class="t " style="left:186px;top:224.70000000000002px;height:21.4px;line-height:21.4px;font-size:10.7px;color:#1c3a00;transform:scaleX(0.750);transform-origin:0 50%;">HD Video (VC100...</span>
<div style="left:181px;top:316px;width:88px;height:20px;background:#3b3b3b;border-radius:3px;"></div>
<span class="t " style="left:186px;top:315.7px;height:21.4px;line-height:21.4px;font-size:10.7px;color:#e6e6e6;transform:scaleX(0.749);transform-origin:0 50%;">1280x720 HDpre...</span>
<svg style="left:491px;top:68px;width:88px;height:65px" viewBox="0 0 88 65"><rect width="88" height="65" fill="#000"/><g transform="translate(44 33) rotate(-9)" font-family="DejaVu Sans,sans-serif" font-weight="bold" fill="#dedede" stroke="#dedede" stroke-width="0.9" text-anchor="middle"><text x="0" y="-0.5" font-size="12.5" textLength="52" lengthAdjust="spacingAndGlyphs">FESTIVLA</text><text x="0" y="-1.5" font-size="12.5" textLength="52" lengthAdjust="spacingAndGlyphs" transform="scale(1,-1)">FESTIVAL</text><path d="M-35 -5h7v3h-7zM-35 0h7v4h-7zM27 -10h6v5h-6zM27 -3h7v5h-7z" fill="#a8a8a8" stroke="none"/></g></svg>
<svg style="left:581px;top:77px;width:88px;height:50px" viewBox="0 0 88 50"><defs><radialGradient id="brg" cx="0.5" cy="0.45" r="0.75"><stop offset="0" stop-color="#6c38c4"/><stop offset="0.6" stop-color="#5426a4"/><stop offset="1" stop-color="#3a1680"/></radialGradient></defs><rect width="88" height="50" fill="url(#brg)"/><path d="M0 50V46.4L0 46.4L2 45.8L4 45.8L6 46.5L8 47.1L10 46.9L12 46.2L14 45.7L16 46.0L18 46.7L20 47.1L22 46.7L24 46.0L26 45.7L28 46.2L30 46.9L32 47.1L34 46.5L36 45.8L38 45.8L40 46.4L42 47.0L44 47.0L46 46.3L48 45.7L50 45.9L52 46.6L54 47.1L56 46.8L58 46.1L60 45.7L62 46.1L64 46.8L66 47.1L68 46.6L70 45.9L72 45.7L74 46.3L76 47.0L78 47.0L80 46.4L82 45.8L84 45.8L86 46.5L88 47.1V50Z" fill="#58b030"/><g font-family="DejaVu Sans,sans-serif" font-weight="bold" fill="#fff"><text x="35" y="25" font-size="9">1</text><text x="41.5" y="24.5" font-size="3.6">JAAR</text><text x="29" y="32" font-size="4.6" textLength="27" lengthAdjust="spacingAndGlyphs">BEHIND THE</text><text x="23" y="41.5" font-size="9.4" textLength="41" lengthAdjust="spacingAndGlyphs">BRANDS</text></g><path d="M64.4 33V41M66 31V42M67.600 30.400V42M69.200 32V42M70.800 29.600V43M72.400 31V42M74 30V41.600" stroke="#cfe4ff" stroke-width="0.700"/><path d="M36 17l1.5-2.5l1.5 2.5" stroke="#fff" stroke-width="0.8" fill="none"/></svg>
<span class="t " style="left:496px;top:133.70000000000002px;height:21.4px;line-height:21.4px;font-size:10.7px;">festivla loop</span>
<span class="t " style="left:586px;top:133.70000000000002px;height:21.4px;line-height:21.4px;font-size:10.7px;">MOV4 oxfam</span>
<svg style="left:181px;top:159px;width:88px;height:65px" viewBox="0 0 88 65"><rect width="88" height="65" fill="#000"/><path d="M22 8L33 6.5L38 25L27 28Z" fill="#b8b8b8"/><path d="M26 8L26.5 27M29.5 7.5L31 26.5" stroke="#666" stroke-width="1.2"/><ellipse cx="22.3" cy="16.4" rx="3.8" ry="8.6" transform="rotate(-14 22.3 16.4)" fill="#2e2e2e" stroke="#777" stroke-width="0.8"/><path d="M33.5 6.6L38.5 5.2L65.2 15.6L68.8 22L68.6 25L65 26L64.6 37.6L40 35.8L30.4 32L32.5 27Z" fill="#cfcfcf"/><path d="M33.5 6.6L38.5 5.2L65.2 15.6L63 18L37 8.8Z" fill="#9a9a9a"/><path d="M40 14.5L62 22.5L61.6 27L40.4 19.6Z" fill="#555"/><path d="M42.5 17L52 20.5L51.8 23L42.6 19.8Z" fill="#d8d8d8"/><path d="M54 21.4L62 24.2L61.8 26.4L54 23.6Z" fill="#e8e8e8"/><path d="M32 20L37 21L37 31L31.5 29.5Z" fill="#555"/><path d="M45 11l4 1.6M51 13.4l4 1.6M57 15.8l2.5 1" stroke="#333" stroke-width="1.4"/><path d="M36 33L49.5 35.6L48.5 41L36 39Z" fill="#4a4a4a"/><path d="M34.6 34L40 34.6L39.5 41L34 40Z" fill="#e8e8e8"/><path d="M39.5 39.5L49 41L45.6 58.2L41 60.4L34.6 60.8L38 56L36.6 52L38.6 48L37.6 44Z" fill="#d4d4d4"/><path d="M39.5 39.5L42 40L41 52L38.6 56L36.6 52L38.6 48L37.6 44Z" fill="#7a7a7a"/><path d="M46.5 41L49 41.4L45.6 58.2L44 59Z" fill="#8a8a8a"/></svg>
<svg style="left:491px;top:159px;width:88px;height:65px" viewBox="0 0 88 65"><rect width="88" height="65" fill="#000"/><path d="M22 8L33 6.5L38 25L27 28Z" fill="#b8b8b8"/><path d="M26 8L26.5 27M29.5 7.5L31 26.5" stroke="#666" stroke-width="1.2"/><ellipse cx="22.3" cy="16.4" rx="3.8" ry="8.6" transform="rotate(-14 22.3 16.4)" fill="#2e2e2e" stroke="#777" stroke-width="0.8"/><path d="M33.5 6.6L38.5 5.2L65.2 15.6L68.8 22L68.6 25L65 26L64.6 37.6L40 35.8L30.4 32L32.5 27Z" fill="#cfcfcf"/><path d="M33.5 6.6L38.5 5.2L65.2 15.6L63 18L37 8.8Z" fill="#9a9a9a"/><path d="M40 14.5L62 22.5L61.6 27L40.4 19.6Z" fill="#555"/><path d="M42.5 17L52 20.5L51.8 23L42.6 19.8Z" fill="#d8d8d8"/><path d="M54 21.4L62 24.2L61.8 26.4L54 23.6Z" fill="#e8e8e8"/><path d="M32 20L37 21L37 31L31.5 29.5Z" fill="#555"/><path d="M45 11l4 1.6M51 13.4l4 1.6M57 15.8l2.5 1" stroke="#333" stroke-width="1.4"/><path d="M36 33L49.5 35.6L48.5 41L36 39Z" fill="#4a4a4a"/><path d="M34.6 34L40 34.6L39.5 41L34 40Z" fill="#e8e8e8"/><path d="M39.5 39.5L49 41L45.6 58.2L41 60.4L34.6 60.8L38 56L36.6 52L38.6 48L37.6 44Z" fill="#d4d4d4"/><path d="M39.5 39.5L42 40L41 52L38.6 56L36.6 52L38.6 48L37.6 44Z" fill="#7a7a7a"/><path d="M46.5 41L49 41.4L45.6 58.2L44 59Z" fill="#8a8a8a"/></svg>
<div style="left:491px;top:159px;width:88px;height:65px;border:2px solid #a9e85c;"></div>
<div style="left:491px;top:224px;width:88px;height:21px;background:#a9e85c;border-radius:0 0 3px 3px;"></div>
<span class="t " style="left:496px;top:224.70000000000002px;height:21.4px;line-height:21.4px;font-size:10.7px;color:#1c3a00;transform:scaleX(0.750);transform-origin:0 50%;">HD Video (VC100...</span>
<svg style="left:181px;top:258px;width:88px;height:50px" viewBox="0 0 226 127" preserveAspectRatio="none"><defs><linearGradient id="gw1"><stop offset="0" stop-color="#fff"/><stop offset="0.75" stop-color="#222"/><stop offset="1" stop-color="#000"/></linearGradient><linearGradient id="gc1"><stop offset="0" stop-color="#2aa078"/><stop offset="0.3" stop-color="#8a9a30"/><stop offset="0.5" stop-color="#8a8a8a"/><stop offset="0.75" stop-color="#8a78d8"/><stop offset="1" stop-color="#e0608c"/></linearGradient><pattern id="ht1" width="1.6" height="1.6" patternUnits="userSpaceOnUse"><rect width="1.6" height="1.6" fill="#e8e8e8"/><rect width="0.9" height="1.6" fill="#111"/></pattern><radialGradient id="sky1" cx="0.6" cy="0.3" r="0.7"><stop offset="0" stop-color="#d4e8f6"/><stop offset="1" stop-color="#9cc8e4"/></radialGradient><clipPath id="cp1"><circle cx="112.8" cy="63.6" r="32.9"/></clipPath></defs><g><rect width="226" height="127" fill="#808080"/><path d="M7.3 7V120M21.4 7V120M35.5 7V120M49.6 7V120M63.7 7V120M77.8 7V120M91.8 7V120M134.1 7V120M148.2 7V120M162.3 7V120M176.4 7V120M190.5 7V120M204.6 7V120M218.7 7V120M7 6.9H219M7 21.0H219M7 35.1H219M7 49.2H219M7 63.3H219M7 77.4H219M7 91.4H219M7 105.5H219M7 119.6H219" stroke="#ececec" stroke-width="1.3" fill="none"/><path d="M7 34.2H219M7 90.6H219M48.7 7V120M175.7 7V120" stroke="#161616" stroke-width="1" fill="none"/><path d="M105.9 7V46M120 7V46M105.9 82V120M120 82V120" stroke="#111" stroke-width="1.4"/><path d="M105.9 46V82M120 46V82" stroke="#e9e9e9" stroke-width="1.1"/><path d="M7 63.3H36M190 63.3H219" stroke="#111" stroke-width="1.6"/><path d="M34.6 56V71M191.6 56V71" stroke="#111" stroke-width="1.2"/><path d="M0.5 63.3L7.5 59.8L14.5 63.3L7.5 66.8Z" fill="#fff"/><path d="M14.5 63.3L21.5 59.8L28.5 63.3L21.5 66.8Z" fill="#fff"/><path d="M28.5 63.3L35.5 59.8L42.5 63.3L35.5 66.8Z" fill="#fff"/><path d="M183.5 63.3L190.5 59.8L197.5 63.3L190.5 66.8Z" fill="#fff"/><path d="M197.5 63.3L204.5 59.8L211.5 63.3L204.5 66.8Z" fill="#fff"/><path d="M211.5 63.3L218.5 59.8L225.5 63.3L218.5 66.8Z" fill="#fff"/><g transform="translate(19.6 19.6) rotate(45)"><rect x="-9.4" y="-7" width="18.8" height="14" fill="url(#ht1)" stroke="#e9e9e9" stroke-width="0.9"/></g><g transform="translate(206.4 19.6) rotate(-45)"><rect x="-9.4" y="-7" width="18.8" height="14" fill="url(#ht1)" stroke="#e9e9e9" stroke-width="0.9"/></g><g transform="translate(19.6 108) rotate(-45)"><rect x="-9.4" y="-7" width="18.8" height="14" fill="url(#ht1)" stroke="#e9e9e9" stroke-width="0.9"/></g><g transform="translate(206.4 108) rotate(45)"><rect x="-9.4" y="-7" width="18.8" height="14" fill="url(#ht1)" stroke="#e9e9e9" stroke-width="0.9"/></g><rect x="88" y="15.2" width="50" height="12.2" fill="#f2f2f2"/><rect x="98" y="18.7" width="30.5" height="5.7" fill="#0a0a0a"/><rect x="111.2" y="19.6" width="4" height="3.8" fill="#2fd030"/><path d="M105.9 7V32M120 7V32" stroke="#111" stroke-width="1.4"/><rect x="50.7" y="36.6" width="12.3" height="9.3" fill="#f4f4f4"/><rect x="50.7" y="45.7" width="12.3" height="9.3" fill="#c4c4c4"/><rect x="50.7" y="54.9" width="12.3" height="9.3" fill="#999"/><rect x="50.7" y="64.0" width="12.3" height="9.3" fill="#6e6e6e"/><rect x="50.7" y="73.1" width="12.3" height="9.3" fill="#3c3c3c"/><rect x="50.7" y="82.2" width="12.3" height="9.3" fill="#000"/><rect x="163.5" y="36.6" width="12.3" height="54.8" fill="#858585"/><path d="M164.5 36.6V60M166.9 36.6V60M169.3 36.6V60M171.7 36.6V60M174.1 36.6V60" stroke="#333" stroke-width="1.1"/><path d="M165.5 48V62M169.1 48V62M172.7 48V62" stroke="#444" stroke-width="1.8"/><path d="M164.4 62V91M166.4 62V91M168.4 62V91M170.4 62V91M172.4 62V91M174.4 62V91" stroke="#6a6a6a" stroke-width="0.8"/><rect x="50" y="106.2" width="126" height="13" fill="#808080"/><path d="M49.5 106V120M176.5 106V120" stroke="#e9e9e9" stroke-width="1.1"/><rect x="78.2" y="110.5" width="6" height="6" fill="#e4e4e4"/><rect x="85.4" y="110.5" width="6" height="6" fill="#e4e4e4"/><rect x="92.6" y="110.5" width="6" height="6" fill="#e4e4e4"/><path d="M101 113.5L106.5 108.5L112 113.5L106.5 118.5Z" fill="#e4e4e4"/><text x="118" y="116.2" font-family="Liberation Sans,sans-serif" font-size="6.6" fill="#f0f0f0">1080 lines</text><text x="180" y="20" font-family="Liberation Sans,sans-serif" font-size="10" fill="#e4e4e4">R</text><circle cx="112.8" cy="63.6" r="33.8" fill="#f6f6f6"/><g clip-path="url(#cp1)"><rect x="78" y="29" width="70" height="70" fill="url(#sky1)"/><path d="M110 50.6L127 47.6L145 45.6L147 78L132 84L109 84Z" fill="#1c1c1e"/><path d="M91 54L99 50L100 74L88 70Z" fill="#3a3432"/><path d="M112 62l9-3M119.5 55.5l0.6 9M114 66l5-2.4M122 59.4l2.4-0.4M102.5 63.4l2 2.2" stroke="#f0f0f0" stroke-width="0.9" fill="none"/><path d="M134 47l2.6-6.2l2.2 6.8z" fill="#d8c060"/><path d="M135.4 44l1.2-3l1 3.2z" fill="#6898c8"/><path d="M137 49q4.6 2 3.8 11q-0.6 4-2.6 4.600q1.400-8-1.200-15.600z" fill="#d8c070"/><path d="M123.8 55q-0.400-8.400 6.800-9q7.600 0.200 7.400 9.200q-0.400 7.800-7 8.200q-6.400-0.400-7.200-8.400z" fill="#ecc8c4"/><path d="M126.600 57.400q3.600 2.600 7.800-1.200q-1.400 5-4.400 4.800q-2.600-0.400-3.400-3.600z" fill="#c82c34"/><path d="M127.400 51.600l2 0.600M132.400 51l2-0.400" stroke="#3a5a8a" stroke-width="1"/><circle cx="130.6" cy="55" r="1.2" fill="#d84040"/><path d="M122 72q1-8.400 9.600-9q8.600 0.600 10.400 9.400q1.400 7.600-2.600 11.600l-17.400 0.600q-2.400-6-0-12.600z" fill="#4f8f60"/><circle cx="128.400" cy="70" r="0.900" fill="#d8d060"/><circle cx="127.600" cy="75.400" r="0.900" fill="#d8d060"/><path d="M139 72l2.400 1.600l-1 4z" fill="#e8b0b0"/><path d="M94.600 42q2.400-5.400 8.600-5.200q5.800 0.800 7 6.400l-2 3l-6.600-1.400l-1 10l1.400 9.600l2 9.600l-3.400 4l-4.400-6.600l-5.200-9.400q-0.400-11 3.600-20z" fill="#b8946c"/><path d="M97.400 40.400q4-3.400 9-1.200l-0.600 2.200q-4.200-1.600-7.600 1z" fill="#c0405c"/><path d="M100.800 47.600q1.200-4 5.400-3.400q4 1 3.800 7q0 3.400-1.600 6q-1.600 2.800-4.200 2.400q-3-1.200-3.800-5.800q-0.400-3.400 0.400-6.200z" fill="#eac4ac"/><path d="M106 57.600l2.400-0.200" stroke="#b05050" stroke-width="0.800"/><path d="M106.400 51l1.800 0" stroke="#50403a" stroke-width="0.800"/><path d="M101 46q-2.400 6-1.400 12l2.400 10l1.600 8l-4.400 2l-3.400-10l-1-12q1.400-7 6.200-10z" fill="#c8a47c"/><path d="M82 73q2.400-8.400 9.400-12.600l4.400 0.800l3.400 9.400l4 4.400l-1.400 6l-3 10l2 4l-10 0q-8-8-8.800-22z" fill="#a62a3a"/><path d="M89.600 74.600q3-3 6.400-0.800l4 12.400l18-18.600q2-1.600 3.400 0.400q0.800 2.400-1 4.400l-19 20.400q-3 1.600-5.400-1z" fill="#e4b89c"/><path d="M117 67.400q2-2.600 4.400-1.400q1.400 2 0 4.400q-2 2-4.400 0.400z" fill="#eccab0"/><path d="M108.400 83.400l31 -0.800l-2 8l-8 8l-25-4.400z" fill="#dab428"/><path d="M108.400 83.400l6 6l-4 5.200l-6-0.400z" fill="#c49c1c"/></g><rect x="0" y="0" width="226" height="7" fill="#fff"/><rect x="14" y="0" width="28.6" height="7" fill="#e6e620"/><rect x="42.4" y="0" width="28.8" height="7" fill="#1ce0d0"/><rect x="71" y="0" width="28.2" height="7" fill="#1ce628"/><rect x="99" y="0" width="28.9" height="7" fill="#e41ce0"/><rect x="127.7" y="0" width="28.5" height="7" fill="#dc0c14"/><rect x="156" y="0" width="28.2" height="7" fill="#0c0cd0"/><rect x="184" y="0" width="28.2" height="7" fill="#000"/><path d="M109.5 7L113.2 1.5L117 7Z" fill="#fff"/><rect x="0" y="0" width="7" height="127" fill="#fff"/><rect x="0" y="7" width="7" height="22.9" height="7" fill="#1eb884"/><rect x="0" y="29.7" width="7" height="23.8" height="7" fill="#ee4c8c"/><rect x="0" y="53.3" width="7" height="20.9" height="7" fill="#000"/><rect x="0" y="74" width="7" height="23.7" height="7" fill="#7c6cf0"/><rect x="0" y="97.5" width="7" height="23.1" height="7" fill="#8ea410"/><path d="M0.5 63.3L7 60L7 66.6Z" fill="#fff"/><rect x="219" y="0" width="7" height="127" fill="#fff"/><rect x="219" y="7" width="7" height="16.8" fill="#e6e620"/><rect x="219" y="23.6" width="7" height="16.2" fill="#1ce0d0"/><rect x="219" y="39.6" width="7" height="16.2" fill="#1ce628"/><rect x="219" y="55.6" width="7" height="16.2" fill="#e41ce0"/><rect x="219" y="71.6" width="7" height="17.0" fill="#dc0c14"/><rect x="219" y="88.4" width="7" height="16.2" fill="#0c0cd0"/><rect x="219" y="104.4" width="7" height="16.2" fill="#000"/><path d="M225.5 63.3L219 60L219 66.6Z" fill="#fff"/><rect x="0" y="120" width="226" height="7" fill="#fff"/><rect x="7" y="121" width="102" height="6" fill="url(#gw1)"/><rect x="109" y="120" width="9" height="7" fill="#000"/><rect x="118" y="120.6" width="101" height="6.4" fill="url(#gc1)"/><path d="M109.5 120.3L113.2 125.8L117 120.3Z" fill="#fff"/></g></svg>
<div style="left:491px;top:250px;width:88px;height:66px;background:#1c1a19;border:2px solid #a9e85c;"></div>
<svg style="left:493px;top:258px;width:84px;height:50px" viewBox="0 0 226 127" preserveAspectRatio="none"><defs><linearGradient id="gw2"><stop offset="0" stop-color="#fff"/><stop offset="0.75" stop-color="#222"/><stop offset="1" stop-color="#000"/></linearGradient><linearGradient id="gc2"><stop offset="0" stop-color="#2aa078"/><stop offset="0.3" stop-color="#8a9a30"/><stop offset="0.5" stop-color="#8a8a8a"/><stop offset="0.75" stop-color="#8a78d8"/><stop offset="1" stop-color="#e0608c"/></linearGradient><pattern id="ht2" width="1.6" height="1.6" patternUnits="userSpaceOnUse"><rect width="1.6" height="1.6" fill="#e8e8e8"/><rect width="0.9" height="1.6" fill="#111"/></pattern><radialGradient id="sky2" cx="0.6" cy="0.3" r="0.7"><stop offset="0" stop-color="#d4e8f6"/><stop offset="1" stop-color="#9cc8e4"/></radialGradient><clipPath id="cp2"><circle cx="112.8" cy="63.6" r="32.9"/></clipPath></defs><g><rect width="226" height="127" fill="#808080"/><path d="M7.3 7V120M21.4 7V120M35.5 7V120M49.6 7V120M63.7 7V120M77.8 7V120M91.8 7V120M134.1 7V120M148.2 7V120M162.3 7V120M176.4 7V120M190.5 7V120M204.6 7V120M218.7 7V120M7 6.9H219M7 21.0H219M7 35.1H219M7 49.2H219M7 63.3H219M7 77.4H219M7 91.4H219M7 105.5H219M7 119.6H219" stroke="#ececec" stroke-width="1.3" fill="none"/><path d="M7 34.2H219M7 90.6H219M48.7 7V120M175.7 7V120" stroke="#161616" stroke-width="1" fill="none"/><path d="M105.9 7V46M120 7V46M105.9 82V120M120 82V120" stroke="#111" stroke-width="1.4"/><path d="M105.9 46V82M120 46V82" stroke="#e9e9e9" stroke-width="1.1"/><path d="M7 63.3H36M190 63.3H219" stroke="#111" stroke-width="1.6"/><path d="M34.6 56V71M191.6 56V71" stroke="#111" stroke-width="1.2"/><path d="M0.5 63.3L7.5 59.8L14.5 63.3L7.5 66.8Z" fill="#fff"/><path d="M14.5 63.3L21.5 59.8L28.5 63.3L21.5 66.8Z" fill="#fff"/><path d="M28.5 63.3L35.5 59.8L42.5 63.3L35.5 66.8Z" fill="#fff"/><path d="M183.5 63.3L190.5 59.8L197.5 63.3L190.5 66.8Z" fill="#fff"/><path d="M197.5 63.3L204.5 59.8L211.5 63.3L204.5 66.8Z" fill="#fff"/><path d="M211.5 63.3L218.5 59.8L225.5 63.3L218.5 66.8Z" fill="#fff"/><g transform="translate(19.6 19.6) rotate(45)"><rect x="-9.4" y="-7" width="18.8" height="14" fill="url(#ht2)" stroke="#e9e9e9" stroke-width="0.9"/></g><g transform="translate(206.4 19.6) rotate(-45)"><rect x="-9.4" y="-7" width="18.8" height="14" fill="url(#ht2)" stroke="#e9e9e9" stroke-width="0.9"/></g><g transform="translate(19.6 108) rotate(-45)"><rect x="-9.4" y="-7" width="18.8" height="14" fill="url(#ht2)" stroke="#e9e9e9" stroke-width="0.9"/></g><g transform="translate(206.4 108) rotate(45)"><rect x="-9.4" y="-7" width="18.8" height="14" fill="url(#ht2)" stroke="#e9e9e9" stroke-width="0.9"/></g><rect x="88" y="15.2" width="50" height="12.2" fill="#f2f2f2"/><rect x="98" y="18.7" width="30.5" height="5.7" fill="#0a0a0a"/><rect x="111.2" y="19.6" width="4" height="3.8" fill="#2fd030"/><path d="M105.9 7V32M120 7V32" stroke="#111" stroke-width="1.4"/><rect x="50.7" y="36.6" width="12.3" height="9.3" fill="#f4f4f4"/><rect x="50.7" y="45.7" width="12.3" height="9.3" fill="#c4c4c4"/><rect x="50.7" y="54.9" width="12.3" height="9.3" fill="#999"/><rect x="50.7" y="64.0" width="12.3" height="9.3" fill="#6e6e6e"/><rect x="50.7" y="73.1" width="12.3" height="9.3" fill="#3c3c3c"/><rect x="50.7" y="82.2" width="12.3" height="9.3" fill="#000"/><rect x="163.5" y="36.6" width="12.3" height="54.8" fill="#858585"/><path d="M164.5 36.6V60M166.9 36.6V60M169.3 36.6V60M171.7 36.6V60M174.1 36.6V60" stroke="#333" stroke-width="1.1"/><path d="M165.5 48V62M169.1 48V62M172.7 48V62" stroke="#444" stroke-width="1.8"/><path d="M164.4 62V91M166.4 62V91M168.4 62V91M170.4 62V91M172.4 62V91M174.4 62V91" stroke="#6a6a6a" stroke-width="0.8"/><rect x="50" y="106.2" width="126" height="13" fill="#808080"/><path d="M49.5 106V120M176.5 106V120" stroke="#e9e9e9" stroke-width="1.1"/><rect x="78.2" y="110.5" width="6" height="6" fill="#e4e4e4"/><rect x="85.4" y="110.5" width="6" height="6" fill="#e4e4e4"/><rect x="92.6" y="110.5" width="6" height="6" fill="#e4e4e4"/><path d="M101 113.5L106.5 108.5L112 113.5L106.5 118.5Z" fill="#e4e4e4"/><text x="118" y="116.2" font-family="Liberation Sans,sans-serif" font-size="6.6" fill="#f0f0f0">1080 lines</text><text x="180" y="20" font-family="Liberation Sans,sans-serif" font-size="10" fill="#e4e4e4">R</text><circle cx="112.8" cy="63.6" r="33.8" fill="#f6f6f6"/><g clip-path="url(#cp2)"><rect x="78" y="29" width="70" height="70" fill="url(#sky2)"/><path d="M110 50.6L127 47.6L145 45.6L147 78L132 84L109 84Z" fill="#1c1c1e"/><path d="M91 54L99 50L100 74L88 70Z" fill="#3a3432"/><path d="M112 62l9-3M119.5 55.5l0.6 9M114 66l5-2.4M122 59.4l2.4-0.4M102.5 63.4l2 2.2" stroke="#f0f0f0" stroke-width="0.9" fill="none"/><path d="M134 47l2.6-6.2l2.2 6.8z" fill="#d8c060"/><path d="M135.4 44l1.2-3l1 3.2z" fill="#6898c8"/><path d="M137 49q4.6 2 3.8 11q-0.6 4-2.6 4.600q1.400-8-1.200-15.600z" fill="#d8c070"/><path d="M123.8 55q-0.400-8.400 6.800-9q7.600 0.200 7.400 9.200q-0.400 7.800-7 8.200q-6.400-0.400-7.200-8.400z" fill="#ecc8c4"/><path d="M126.600 57.400q3.600 2.600 7.800-1.200q-1.400 5-4.400 4.800q-2.600-0.400-3.400-3.600z" fill="#c82c34"/><path d="M127.400 51.600l2 0.600M132.400 51l2-0.400" stroke="#3a5a8a" stroke-width="1"/><circle cx="130.6" cy="55" r="1.2" fill="#d84040"/><path d="M122 72q1-8.400 9.600-9q8.600 0.600 10.400 9.400q1.400 7.600-2.600 11.600l-17.400 0.600q-2.400-6-0-12.600z" fill="#4f8f60"/><circle cx="128.400" cy="70" r="0.900" fill="#d8d060"/><circle cx="127.600" cy="75.400" r="0.900" fill="#d8d060"/><path d="M139 72l2.400 1.600l-1 4z" fill="#e8b0b0"/><path d="M94.600 42q2.400-5.400 8.600-5.200q5.800 0.800 7 6.400l-2 3l-6.600-1.400l-1 10l1.400 9.600l2 9.600l-3.400 4l-4.400-6.600l-5.200-9.400q-0.400-11 3.600-20z" fill="#b8946c"/><path d="M97.400 40.400q4-3.400 9-1.200l-0.600 2.200q-4.200-1.600-7.600 1z" fill="#c0405c"/><path d="M100.800 47.600q1.200-4 5.400-3.400q4 1 3.800 7q0 3.400-1.600 6q-1.600 2.800-4.200 2.400q-3-1.200-3.800-5.800q-0.400-3.400 0.400-6.200z" fill="#eac4ac"/><path d="M106 57.600l2.400-0.200" stroke="#b05050" stroke-width="0.800"/><path d="M106.400 51l1.800 0" stroke="#50403a" stroke-width="0.800"/><path d="M101 46q-2.400 6-1.400 12l2.400 10l1.600 8l-4.400 2l-3.400-10l-1-12q1.400-7 6.200-10z" fill="#c8a47c"/><path d="M82 73q2.400-8.400 9.400-12.600l4.400 0.800l3.400 9.400l4 4.400l-1.400 6l-3 10l2 4l-10 0q-8-8-8.800-22z" fill="#a62a3a"/><path d="M89.600 74.600q3-3 6.400-0.800l4 12.400l18-18.600q2-1.600 3.400 0.400q0.800 2.400-1 4.400l-19 20.400q-3 1.600-5.400-1z" fill="#e4b89c"/><path d="M117 67.400q2-2.600 4.400-1.400q1.400 2 0 4.400q-2 2-4.400 0.400z" fill="#eccab0"/><path d="M108.400 83.400l31 -0.800l-2 8l-8 8l-25-4.400z" fill="#dab428"/><path d="M108.400 83.400l6 6l-4 5.200l-6-0.400z" fill="#c49c1c"/></g><rect x="0" y="0" width="226" height="7" fill="#fff"/><rect x="14" y="0" width="28.6" height="7" fill="#e6e620"/><rect x="42.4" y="0" width="28.8" height="7" fill="#1ce0d0"/><rect x="71" y="0" width="28.2" height="7" fill="#1ce628"/><rect x="99" y="0" width="28.9" height="7" fill="#e41ce0"/><rect x="127.7" y="0" width="28.5" height="7" fill="#dc0c14"/><rect x="156" y="0" width="28.2" height="7" fill="#0c0cd0"/><rect x="184" y="0" width="28.2" height="7" fill="#000"/><path d="M109.5 7L113.2 1.5L117 7Z" fill="#fff"/><rect x="0" y="0" width="7" height="127" fill="#fff"/><rect x="0" y="7" width="7" height="22.9" height="7" fill="#1eb884"/><rect x="0" y="29.7" width="7" height="23.8" height="7" fill="#ee4c8c"/><rect x="0" y="53.3" width="7" height="20.9" height="7" fill="#000"/><rect x="0" y="74" width="7" height="23.7" height="7" fill="#7c6cf0"/><rect x="0" y="97.5" width="7" height="23.1" height="7" fill="#8ea410"/><path d="M0.5 63.3L7 60L7 66.6Z" fill="#fff"/><rect x="219" y="0" width="7" height="127" fill="#fff"/><rect x="219" y="7" width="7" height="16.8" fill="#e6e620"/><rect x="219" y="23.6" width="7" height="16.2" fill="#1ce0d0"/><rect x="219" y="39.6" width="7" height="16.2" fill="#1ce628"/><rect x="219" y="55.6" width="7" height="16.2" fill="#e41ce0"/><rect x="219" y="71.6" width="7" height="17.0" fill="#dc0c14"/><rect x="219" y="88.4" width="7" height="16.2" fill="#0c0cd0"/><rect x="219" y="104.4" width="7" height="16.2" fill="#000"/><path d="M225.5 63.3L219 60L219 66.6Z" fill="#fff"/><rect x="0" y="120" width="226" height="7" fill="#fff"/><rect x="7" y="121" width="102" height="6" fill="url(#gw2)"/><rect x="109" y="120" width="9" height="7" fill="#000"/><rect x="118" y="120.6" width="101" height="6.4" fill="url(#gc2)"/><path d="M109.5 120.3L113.2 125.8L117 120.3Z" fill="#fff"/></g></svg>
<svg style="left:581px;top:258px;width:88px;height:50px" viewBox="0 0 88 50"><defs><linearGradient id="og1" x1="0" y1="0" x2="0" y2="1"><stop offset="0" stop-color="#e8e8e8"/><stop offset="1" stop-color="#1a1a1a"/></linearGradient><linearGradient id="og2" x1="0" y1="0" x2="0" y2="1"><stop offset="0" stop-color="#f0f040"/><stop offset="0.5" stop-color="#40f080"/><stop offset="1" stop-color="#30e8e0"/></linearGradient><linearGradient id="og3" x1="0" y1="0" x2="0" y2="1"><stop offset="0" stop-color="#f020d0"/><stop offset="0.45" stop-color="#e01020"/><stop offset="0.55" stop-color="#1010e0"/><stop offset="1" stop-color="#000030"/></linearGradient><clipPath id="ocp"><circle cx="44" cy="25.4" r="22.4"/></clipPath></defs><rect width="88" height="50" fill="#8c8c8c"/><path d="M7.3 0V50M14.7 0V50M22.0 0V50M29.3 0V50M36.6 0V50M44.0 0V50M51.3 0V50M58.6 0V50M66.0 0V50M73.3 0V50M80.6 0V50M0 7.1H88M0 14.3H88M0 21.4H88M0 28.6H88M0 35.7H88M0 42.8H88" stroke="#a6a6a6" stroke-width="0.5"/><rect x="0.5" y="0.5" width="87" height="49" fill="none" stroke="#111" stroke-width="1"/><rect x="0.5" y="0.5" width="87" height="49" fill="none" stroke="#f4f4f4" stroke-width="1" stroke-dasharray="3 2"/><rect x="4" y="12" width="8.4" height="26" fill="url(#og1)"/><rect x="17" y="5" width="3" height="19" fill="#58b0a8"/><rect x="21.5" y="6" width="2" height="18" fill="#9ab0b8"/><rect x="17" y="27" width="3.4" height="19" fill="#c86888"/><rect x="22" y="27" width="2" height="18" fill="#b08080"/><rect x="68" y="5" width="3.4" height="19" fill="#b4b448"/><rect x="64.5" y="6" width="2" height="18" fill="#7898b8"/><rect x="68" y="27" width="3.4" height="19" fill="#8878c0"/><rect x="64.5" y="27" width="2" height="18" fill="#c08060"/><rect x="75" y="12" width="8.6" height="12.4" fill="url(#og2)"/><rect x="75" y="25.6" width="8.6" height="12.4" fill="url(#og3)"/><g clip-path="url(#ocp)"><rect x="20" y="2" width="48" height="48" fill="#f4f4f4"/><rect x="36" y="5.4" width="15" height="3.6" fill="#111"/><rect x="20" y="11" width="48" height="5.4" fill="#111"/><rect x="25.0" y="11" width="2.8" height="5.4" fill="#f0f0f0"/><rect x="30.6" y="11" width="2.8" height="5.4" fill="#f0f0f0"/><rect x="36.2" y="11" width="2.8" height="5.4" fill="#f0f0f0"/><rect x="41.8" y="11" width="2.8" height="5.4" fill="#f0f0f0"/><rect x="47.4" y="11" width="2.8" height="5.4" fill="#f0f0f0"/><rect x="53.0" y="11" width="2.8" height="5.4" fill="#f0f0f0"/><rect x="58.6" y="11" width="2.8" height="5.4" fill="#f0f0f0"/><rect x="22.4" y="16.4" width="7.3" height="8.2" fill="#c8c800"/><rect x="29.6" y="16.4" width="7.3" height="8.2" fill="#00c8c8"/><rect x="36.8" y="16.4" width="7.3" height="8.2" fill="#18c818"/><rect x="44.0" y="16.4" width="7.3" height="8.2" fill="#c800c8"/><rect x="51.2" y="16.4" width="7.3" height="8.2" fill="#d80818"/><rect x="58.4" y="16.4" width="7.3" height="8.2" fill="#0808c8"/><rect x="20" y="24.6" width="48" height="3" fill="#0a0a0a"/><rect x="20" y="27.6" width="48" height="9.4" fill="#0a0a0a"/><rect x="24.5" y="27.6" width="1.6" height="9.4" fill="#f0f0f0"/><rect x="27.7" y="27.6" width="1.6" height="9.4" fill="#f0f0f0"/><rect x="30.9" y="27.6" width="1.6" height="9.4" fill="#f0f0f0"/><rect x="34.1" y="27.6" width="1.6" height="9.4" fill="#f0f0f0"/><rect x="37.3" y="27.6" width="1.3" height="9.4" fill="#f0f0f0"/><rect x="40.0" y="27.6" width="1.3" height="9.4" fill="#f0f0f0"/><rect x="42.6" y="27.6" width="1.3" height="9.4" fill="#f0f0f0"/><rect x="45.3" y="27.6" width="1.3" height="9.4" fill="#f0f0f0"/><rect x="48.0" y="27.6" width="1" height="9.4" fill="#f0f0f0"/><rect x="50.1" y="27.6" width="1" height="9.4" fill="#f0f0f0"/><rect x="52.3" y="27.6" width="1" height="9.4" fill="#f0f0f0"/><rect x="54.4" y="27.6" width="1" height="9.4" fill="#f0f0f0"/><rect x="56.6" y="27.6" width="0.8" height="9.4" fill="#f0f0f0"/><rect x="58.4" y="27.6" width="0.8" height="9.4" fill="#f0f0f0"/><rect x="60.2" y="27.6" width="0.8" height="9.4" fill="#f0f0f0"/><rect x="62.0" y="27.6" width="0.8" height="9.4" fill="#f0f0f0"/><rect x="20" y="37" width="48" height="5.4" fill="#f4f4f4"/><rect x="34" y="38.4" width="20" height="3.4" fill="#111"/><rect x="20" y="42.4" width="48" height="8" fill="#c8c800"/><rect x="42" y="42.4" width="4" height="8" fill="#d80818"/></g></svg>
<svg style="left:671px;top:258px;width:88px;height:50px" viewBox="0 0 88 50"><defs><clipPath id="t2cp"><circle cx="43.4" cy="24.4" r="11.8"/></clipPath></defs><rect width="88" height="50" fill="#e4e4e4"/><rect x="6" y="5.6" width="76" height="39" fill="#bdbdbd"/><rect x="0" y="0" width="1.4" height="50" fill="#203080"/><rect x="1.4" y="0" width="1" height="22" fill="#c01020"/><rect x="85.6" y="28" width="1" height="22" fill="#c01020"/><rect x="86.6" y="0" width="1.4" height="50" fill="#222"/><rect x="8.6" y="0.6" width="4.1" height="4.6" fill="#e8e810"/><rect x="12.6" y="0.6" width="4.1" height="4.6" fill="#10e0e0"/><rect x="16.6" y="0.6" width="4.1" height="4.6" fill="#10e020"/><rect x="20.6" y="0.6" width="4.1" height="4.6" fill="#e010e0"/><rect x="24.6" y="0.6" width="4.1" height="4.6" fill="#e01018"/><rect x="28.6" y="0.6" width="4.1" height="4.6" fill="#1010e0"/><rect x="32.6" y="0.6" width="4.1" height="4.6" fill="#111"/><rect x="52.0" y="0.6" width="4.1" height="4.6" fill="#111"/><rect x="56.0" y="0.6" width="4.1" height="4.6" fill="#333"/><rect x="60.0" y="0.6" width="4.1" height="4.6" fill="#555"/><rect x="64.0" y="0.6" width="4.1" height="4.6" fill="#777"/><rect x="68.0" y="0.6" width="4.1" height="4.6" fill="#999"/><rect x="72.0" y="0.6" width="4.1" height="4.6" fill="#bbb"/><rect x="76.0" y="0.6" width="4.1" height="4.6" fill="#ddd"/><rect x="4.6" y="45" width="4.1" height="4.6" fill="#eee"/><rect x="8.6" y="45" width="4.1" height="4.6" fill="#ccc"/><rect x="12.6" y="45" width="4.1" height="4.6" fill="#aaa"/><rect x="16.6" y="45" width="4.1" height="4.6" fill="#888"/><rect x="20.6" y="45" width="4.1" height="4.6" fill="#666"/><rect x="24.6" y="45" width="4.1" height="4.6" fill="#444"/><rect x="28.6" y="45" width="4.1" height="4.6" fill="#222"/><rect x="32.6" y="45" width="4.1" height="4.6" fill="#000"/><rect x="52.0" y="45" width="4.1" height="4.6" fill="#111"/><rect x="56.0" y="45" width="4.1" height="4.6" fill="#1010e0"/><rect x="60.0" y="45" width="4.1" height="4.6" fill="#e01018"/><rect x="64.0" y="45" width="4.1" height="4.6" fill="#e010e0"/><rect x="68.0" y="45" width="4.1" height="4.6" fill="#10e020"/><rect x="72.0" y="45" width="4.1" height="4.6" fill="#10e0e0"/><rect x="76.0" y="45" width="4.1" height="4.6" fill="#e8e810"/><rect x="84" y="6" width="2" height="16" fill="#555"/><rect x="2.6" y="28" width="2" height="16" fill="#666"/><rect x="7.0" y="21" width="3.9" height="8" fill="#8a8a8a"/><rect x="58.0" y="21" width="3.9" height="8" fill="#8a8a8a"/><rect x="10.8" y="21" width="3.9" height="8" fill="#5a5a5a"/><rect x="61.8" y="21" width="3.9" height="8" fill="#5a5a5a"/><rect x="14.6" y="21" width="3.9" height="8" fill="#8a8a8a"/><rect x="65.6" y="21" width="3.9" height="8" fill="#8a8a8a"/><rect x="18.4" y="21" width="3.9" height="8" fill="#3a3a3a"/><rect x="69.4" y="21" width="3.9" height="8" fill="#3a3a3a"/><rect x="22.2" y="21" width="3.9" height="8" fill="#9a9a9a"/><rect x="73.2" y="21" width="3.9" height="8" fill="#9a9a9a"/><rect x="26.0" y="21" width="3.9" height="8" fill="#444"/><rect x="77.0" y="21" width="3.9" height="8" fill="#444"/><path d="M2.4 25L5.6 21.6V28.4ZM85.6 25L82.4 21.6V28.4Z" fill="#f8f8f8"/><circle cx="13.4" cy="12.6" r="5.8" fill="#f6f6f6"/><path d="M13.4 12.6V6.8A5.8 5.8 0 0 1 19.2 12.6ZM13.4 12.6V18.4A5.8 5.8 0 0 1 7.6000000000000005 12.6Z" fill="#0a0a0a"/><circle cx="74.6" cy="38" r="5.8" fill="#f6f6f6"/><path d="M74.6 38V32.2A5.8 5.8 0 0 1 80.39999999999999 38ZM74.6 38V43.8A5.8 5.8 0 0 1 68.8 38Z" fill="#0a0a0a"/><circle cx="74.6" cy="12" r="5.8" fill="#f6f6f6"/><path d="M68.8 12A5.8 5.8 0 0 0 80.4 12Z" fill="#0a0a0a"/><circle cx="13.4" cy="38" r="5.6" fill="#f6f6f6"/><circle cx="16.4" cy="38.0" r="1.5" fill="#e01018"/><circle cx="14.9" cy="40.6" r="1.5" fill="#e8e810"/><circle cx="11.9" cy="40.6" r="1.5" fill="#10e020"/><circle cx="10.4" cy="38.0" r="1.5" fill="#10e0e0"/><circle cx="11.9" cy="35.4" r="1.5" fill="#1010e0"/><circle cx="14.9" cy="35.4" r="1.5" fill="#e010e0"/><circle cx="13.4" cy="38" r="1.3" fill="#111"/><circle cx="27" cy="11" r="3.4" fill="#eaeaea" stroke="#c8c8c8" stroke-width="0.5"/><circle cx="61" cy="11" r="3.4" fill="#eaeaea" stroke="#c8c8c8" stroke-width="0.5"/><circle cx="27" cy="38.6" r="3.4" fill="#eaeaea" stroke="#c8c8c8" stroke-width="0.5"/><circle cx="61" cy="38.6" r="3.4" fill="#eaeaea" stroke="#c8c8c8" stroke-width="0.5"/><rect x="35" y="6.4" width="17" height="4.6" fill="#f4f4f4"/><rect x="38.6" y="7.8" width="10" height="1.6" fill="#111"/><rect x="35" y="39.4" width="17" height="4.6" fill="#f0f0f0"/><path d="M41.8 1.2L43.6 4.4H40Z M41.8 48.8L43.6 45.6H40Z" fill="#f8f8f8"/><circle cx="43.4" cy="24.4" r="12.6" fill="#9aa8b0"/><g clip-path="url(#t2cp)"><rect x="30" y="12" width="28" height="26" fill="#b4d4e6"/><path d="M42 24L56 21L57 35L44 37Z" fill="#2a2c2e"/><path d="M50 27q4-4 7 0l1 8l-9 2z" fill="#3c9450"/><circle cx="53.6" cy="23" r="2.6" fill="#f0e0d8"/><path d="M52 19.6l2-3l1.4 3.2z" fill="#d02030"/><path d="M35 17q3-4 6.4-1q2 3 0.6 8l-6 3q-2.6-5-1-10z" fill="#b04830"/><path d="M38.4 18.6q2.6-1 3.4 2q0 3.4-2 4q-2-1-1.4-6z" fill="#ecc0a4"/><path d="M33 30q3-5 8-3.4l3 3l6-2l1 2l-7 3.4l-2 5l-9-1z" fill="#c03038"/><path d="M41 34l11-1l4 3l-14 2z" fill="#e8d040"/></g></svg>
<span class="t " style="left:496px;top:315.7px;height:21.4px;line-height:21.4px;font-size:10.7px;color:#e6e6e6;transform:scaleX(0.749);transform-origin:0 50%;">1280x720 HDpre...</span>
<span class="t " style="left:586px;top:315.7px;height:21.4px;line-height:21.4px;font-size:10.7px;color:#e6e6e6;transform:scaleX(0.791);transform-origin:0 50%;">1280x720 original</span>
<span class="t " style="left:676px;top:315.7px;height:21.4px;line-height:21.4px;font-size:10.7px;color:#e6e6e6;transform:scaleX(0.740);transform-origin:0 50%;">1280x720 testcar...</span>
<div style="left:1px;top:340px;width:19px;height:20px;background:#3b3b3b;border-radius:3px;"></div>
<span class="t  c" style="left:1px;top:341.1px;height:19.0px;line-height:19.0px;font-size:9.5px;width:19px;color:#e6e6e6;">A</span>
<div style="left:21px;top:340px;width:350px;height:20px;background:#0a0a0a;"></div>
<div style="left:190px;top:340px;width:12px;height:20px;background:#4f7a5c;"></div>
<div style="left:372px;top:340px;width:19px;height:20px;background:#3b3b3b;border-radius:3px;"></div>
<span class="t  c" style="left:372px;top:341.1px;height:19.0px;line-height:19.0px;font-size:9.5px;width:19px;color:#e6e6e6;">B</span>
<div style="left:401px;top:340px;width:98px;height:20px;background:#2d2d2d;border-radius:3px;border-radius:3px 0 0 3px;"></div>
<span class="t  c" style="left:401px;top:339.70000000000005px;height:21.8px;line-height:21.8px;font-size:10.9px;width:98px;color:#e6e6e6;">Test Images</span>
<div style="left:499px;top:340px;width:64px;height:20px;background:#181818;border-radius:3px;border-radius:0;"></div>
<span class="t  c" style="left:499px;top:339.70000000000005px;height:21.8px;line-height:21.8px;font-size:10.9px;width:64px;color:#e6e6e6;">empty</span>
<div style="left:564px;top:340px;width:63px;height:20px;background:#181818;border-radius:3px;border-radius:0 3px 3px 0;"></div>
<span class="t  c" style="left:564px;top:339.70000000000005px;height:21.8px;line-height:21.8px;font-size:10.9px;width:63px;color:#e6e6e6;">empty</span>
<div style="left:0px;top:363px;width:1680px;height:36px;background:linear-gradient(#242424,#1b1b1b);"></div>
<span class="t " style="left:9px;top:370.6px;height:21.4px;line-height:21.4px;font-size:10.7px;">BPM</span>
<span class="t " style="left:43px;top:370.6px;height:21.4px;line-height:21.4px;font-size:10.7px;">120.00</span>
<div style="left:90px;top:372px;width:26px;height:18px;background:#3b3b3b;border-radius:3px;"></div>
<span class="t " style="left:95px;top:371px;height:20px;line-height:20px;font-size:10px;color:#ddd;">-</span>
<span class="t " style="left:104.5px;top:373.0px;height:17.0px;line-height:17.0px;font-size:8.5px;color:#ddd;">+</span>
<div style="left:123px;top:372px;width:44px;height:18px;background:#3b3b3b;border-radius:3px;"></div>
<span class="t " style="left:130px;top:371.8px;height:19.0px;line-height:19.0px;font-size:9.5px;color:#e6e6e6;">/2</span>
<span class="t " style="left:150px;top:371.8px;height:19.0px;line-height:19.0px;font-size:9.5px;color:#e6e6e6;">*2</span>
<div style="left:174px;top:372px;width:135px;height:18px;background:#3b3b3b;border-radius:3px;"></div>
<span class="t " style="left:190px;top:371.8px;height:19.0px;line-height:19.0px;font-size:9.5px;">Tap</span>
<span class="t " style="left:225px;top:371.8px;height:19.0px;line-height:19.0px;font-size:9.5px;">Resync</span>
<span class="t " style="left:272px;top:371.8px;height:19.0px;line-height:19.0px;font-size:9.5px;">Pause</span>
<div style="left:316px;top:372px;width:18px;height:18px;background:#3b3b3b;border-radius:3px;"></div>
<div style="left:316px;top:381px;width:9px;height:9px;background:#a9e85c;"></div>
<div style="left:1610px;top:372px;width:62px;height:18px;background:#3b3b3b;border-radius:3px;"></div>
<div style="left:1616px;top:377.5px;width:6.6px;height:6.6px;background:#fff;border-radius:50%;"></div>
<span class="t " style="left:1626px;top:371.8px;height:19.0px;line-height:19.0px;font-size:9.5px;">Record</span>
<div style="left:0px;top:402px;width:229px;height:150px;background:#100e0e;"></div>
<span class="t " style="left:9px;top:402.1px;height:21.8px;line-height:21.8px;font-size:10.9px;">Output Monitor</span>
<svg style="left:2px;top:424px;width:226px;height:127px" viewBox="0 0 226 127" preserveAspectRatio="none"><defs><linearGradient id="gw3"><stop offset="0" stop-color="#fff"/><stop offset="0.75" stop-color="#222"/><stop offset="1" stop-color="#000"/></linearGradient><linearGradient id="gc3"><stop offset="0" stop-color="#2aa078"/><stop offset="0.3" stop-color="#8a9a30"/><stop offset="0.5" stop-color="#8a8a8a"/><stop offset="0.75" stop-color="#8a78d8"/><stop offset="1" stop-color="#e0608c"/></linearGradient><pattern id="ht3" width="1.6" height="1.6" patternUnits="userSpaceOnUse"><rect width="1.6" height="1.6" fill="#e8e8e8"/><rect width="0.9" height="1.6" fill="#111"/></pattern><radialGradient id="sky3" cx="0.6" cy="0.3" r="0.7"><stop offset="0" stop-color="#d4e8f6"/><stop offset="1" stop-color="#9cc8e4"/></radialGradient><clipPath id="cp3"><circle cx="112.8" cy="63.6" r="32.9"/></clipPath></defs><g><rect width="226" height="127" fill="#808080"/><path d="M7.3 7V120M21.4 7V120M35.5 7V120M49.6 7V120M63.7 7V120M77.8 7V120M91.8 7V120M134.1 7V120M148.2 7V120M162.3 7V120M176.4 7V120M190.5 7V120M204.6 7V120M218.7 7V120M7 6.9H219M7 21.0H219M7 35.1H219M7 49.2H219M7 63.3H219M7 77.4H219M7 91.4H219M7 105.5H219M7 119.6H219" stroke="#ececec" stroke-width="1.3" fill="none"/><path d="M7 34.2H219M7 90.6H219M48.7 7V120M175.7 7V120" stroke="#161616" stroke-width="1" fill="none"/><path d="M105.9 7V46M120 7V46M105.9 82V120M120 82V120" stroke="#111" stroke-width="1.4"/><path d="M105.9 46V82M120 46V82" stroke="#e9e9e9" stroke-width="1.1"/><path d="M7 63.3H36M190 63.3H219" stroke="#111" stroke-width="1.6"/><path d="M34.6 56V71M191.6 56V71" stroke="#111" stroke-width="1.2"/><path d="M0.5 63.3L7.5 59.8L14.5 63.3L7.5 66.8Z" fill="#fff"/><path d="M14.5 63.3L21.5 59.8L28.5 63.3L21.5 66.8Z" fill="#fff"/><path d="M28.5 63.3L35.5 59.8L42.5 63.3L35.5 66.8Z" fill="#fff"/><path d="M183.5 63.3L190.5 59.8L197.5 63.3L190.5 66.8Z" fill="#fff"/><path d="M197.5 63.3L204.5 59.8L211.5 63.3L204.5 66.8Z" fill="#fff"/><path d="M211.5 63.3L218.5 59.8L225.5 63.3L218.5 66.8Z" fill="#fff"/><g transform="translate(19.6 19.6) rotate(45)"><rect x="-9.4" y="-7" width="18.8" height="14" fill="url(#ht3)" stroke="#e9e9e9" stroke-width="0.9"/></g><g transform="translate(206.4 19.6) rotate(-45)"><rect x="-9.4" y="-7" width="18.8" height="14" fill="url(#ht3)" stroke="#e9e9e9" stroke-width="0.9"/></g><g transform="translate(19.6 108) rotate(-45)"><rect x="-9.4" y="-7" width="18.8" height="14" fill="url(#ht3)" stroke="#e9e9e9" stroke-width="0.9"/></g><g transform="translate(206.4 108) rotate(45)"><rect x="-9.4" y="-7" width="18.8" height="14" fill="url(#ht3)" stroke="#e9e9e9" stroke-width="0.9"/></g><rect x="88" y="15.2" width="50" height="12.2" fill="#f2f2f2"/><rect x="98" y="18.7" width="30.5" height="5.7" fill="#0a0a0a"/><rect x="111.2" y="19.6" width="4" height="3.8" fill="#2fd030"/><path d="M105.9 7V32M120 7V32" stroke="#111" stroke-width="1.4"/><rect x="50.7" y="36.6" width="12.3" height="9.3" fill="#f4f4f4"/><rect x="50.7" y="45.7" width="12.3" height="9.3" fill="#c4c4c4"/><rect x="50.7" y="54.9" width="12.3" height="9.3" fill="#999"/><rect x="50.7" y="64.0" width="12.3" height="9.3" fill="#6e6e6e"/><rect x="50.7" y="73.1" width="12.3" height="9.3" fill="#3c3c3c"/><rect x="50.7" y="82.2" width="12.3" height="9.3" fill="#000"/><rect x="163.5" y="36.6" width="12.3" height="54.8" fill="#858585"/><path d="M164.5 36.6V60M166.9 36.6V60M169.3 36.6V60M171.7 36.6V60M174.1 36.6V60" stroke="#333" stroke-width="1.1"/><path d="M165.5 48V62M169.1 48V62M172.7 48V62" stroke="#444" stroke-width="1.8"/><path d="M164.4 62V91M166.4 62V91M168.4 62V91M170.4 62V91M172.4 62V91M174.4 62V91" stroke="#6a6a6a" stroke-width="0.8"/><rect x="50" y="106.2" width="126" height="13" fill="#808080"/><path d="M49.5 106V120M176.5 106V120" stroke="#e9e9e9" stroke-width="1.1"/><rect x="78.2" y="110.5" width="6" height="6" fill="#e4e4e4"/><rect x="85.4" y="110.5" width="6" height="6" fill="#e4e4e4"/><rect x="92.6" y="110.5" width="6" height="6" fill="#e4e4e4"/><path d="M101 113.5L106.5 108.5L112 113.5L106.5 118.5Z" fill="#e4e4e4"/><text x="118" y="116.2" font-family="Liberation Sans,sans-serif" font-size="6.6" fill="#f0f0f0">1080 lines</text><text x="180" y="20" font-family="Liberation Sans,sans-serif" font-size="10" fill="#e4e4e4">R</text><circle cx="112.8" cy="63.6" r="33.8" fill="#f6f6f6"/><g clip-path="url(#cp3)"><rect x="78" y="29" width="70" height="70" fill="url(#sky3)"/><path d="M110 50.6L127 47.6L145 45.6L147 78L132 84L109 84Z" fill="#1c1c1e"/><path d="M91 54L99 50L100 74L88 70Z" fill="#3a3432"/><path d="M112 62l9-3M119.5 55.5l0.6 9M114 66l5-2.4M122 59.4l2.4-0.4M102.5 63.4l2 2.2" stroke="#f0f0f0" stroke-width="0.9" fill="none"/><path d="M134 47l2.6-6.2l2.2 6.8z" fill="#d8c060"/><path d="M135.4 44l1.2-3l1 3.2z" fill="#6898c8"/><path d="M137 49q4.6 2 3.8 11q-0.6 4-2.6 4.600q1.400-8-1.200-15.600z" fill="#d8c070"/><path d="M123.8 55q-0.400-8.400 6.800-9q7.600 0.200 7.400 9.200q-0.400 7.800-7 8.200q-6.400-0.400-7.200-8.400z" fill="#ecc8c4"/><path d="M126.600 57.400q3.600 2.600 7.800-1.200q-1.400 5-4.400 4.800q-2.600-0.400-3.400-3.600z" fill="#c82c34"/><path d="M127.400 51.600l2 0.600M132.400 51l2-0.400" stroke="#3a5a8a" stroke-width="1"/><circle cx="130.6" cy="55" r="1.2" fill="#d84040"/><path d="M122 72q1-8.400 9.600-9q8.600 0.600 10.400 9.400q1.400 7.600-2.600 11.600l-17.400 0.600q-2.400-6-0-12.600z" fill="#4f8f60"/><circle cx="128.400" cy="70" r="0.900" fill="#d8d060"/><circle cx="127.600" cy="75.400" r="0.900" fill="#d8d060"/><path d="M139 72l2.400 1.600l-1 4z" fill="#e8b0b0"/><path d="M94.600 42q2.400-5.400 8.600-5.200q5.800 0.800 7 6.400l-2 3l-6.600-1.400l-1 10l1.400 9.600l2 9.600l-3.400 4l-4.400-6.600l-5.200-9.400q-0.400-11 3.600-20z" fill="#b8946c"/><path d="M97.400 40.400q4-3.400 9-1.200l-0.600 2.200q-4.200-1.600-7.600 1z" fill="#c0405c"/><path d="M100.800 47.600q1.200-4 5.400-3.400q4 1 3.800 7q0 3.400-1.600 6q-1.600 2.800-4.200 2.400q-3-1.200-3.800-5.800q-0.400-3.400 0.400-6.200z" fill="#eac4ac"/><path d="M106 57.600l2.400-0.200" stroke="#b05050" stroke-width="0.800"/><path d="M106.400 51l1.800 0" stroke="#50403a" stroke-width="0.800"/><path d="M101 46q-2.400 6-1.400 12l2.400 10l1.600 8l-4.400 2l-3.400-10l-1-12q1.400-7 6.200-10z" fill="#c8a47c"/><path d="M82 73q2.400-8.400 9.400-12.600l4.400 0.800l3.400 9.400l4 4.400l-1.400 6l-3 10l2 4l-10 0q-8-8-8.800-22z" fill="#a62a3a"/><path d="M89.600 74.600q3-3 6.400-0.800l4 12.400l18-18.600q2-1.600 3.400 0.400q0.800 2.400-1 4.400l-19 20.400q-3 1.600-5.400-1z" fill="#e4b89c"/><path d="M117 67.400q2-2.600 4.400-1.400q1.400 2 0 4.400q-2 2-4.400 0.400z" fill="#eccab0"/><path d="M108.400 83.400l31 -0.800l-2 8l-8 8l-25-4.400z" fill="#dab428"/><path d="M108.400 83.400l6 6l-4 5.200l-6-0.400z" fill="#c49c1c"/></g><rect x="0" y="0" width="226" height="7" fill="#fff"/><rect x="14" y="0" width="28.6" height="7" fill="#e6e620"/><rect x="42.4" y="0" width="28.8" height="7" fill="#1ce0d0"/><rect x="71" y="0" width="28.2" height="7" fill="#1ce628"/><rect x="99" y="0" width="28.9" height="7" fill="#e41ce0"/><rect x="127.7" y="0" width="28.5" height="7" fill="#dc0c14"/><rect x="156" y="0" width="28.2" height="7" fill="#0c0cd0"/><rect x="184" y="0" width="28.2" height="7" fill="#000"/><path d="M109.5 7L113.2 1.5L117 7Z" fill="#fff"/><rect x="0" y="0" width="7" height="127" fill="#fff"/><rect x="0" y="7" width="7" height="22.9" height="7" fill="#1eb884"/><rect x="0" y="29.7" width="7" height="23.8" height="7" fill="#ee4c8c"/><rect x="0" y="53.3" width="7" height="20.9" height="7" fill="#000"/><rect x="0" y="74" width="7" height="23.7" height="7" fill="#7c6cf0"/><rect x="0" y="97.5" width="7" height="23.1" height="7" fill="#8ea410"/><path d="M0.5 63.3L7 60L7 66.6Z" fill="#fff"/><rect x="219" y="0" width="7" height="127" fill="#fff"/><rect x="219" y="7" width="7" height="16.8" fill="#e6e620"/><rect x="219" y="23.6" width="7" height="16.2" fill="#1ce0d0"/><rect x="219" y="39.6" width="7" height="16.2" fill="#1ce628"/><rect x="219" y="55.6" width="7" height="16.2" fill="#e41ce0"/><rect x="219" y="71.6" width="7" height="17.0" fill="#dc0c14"/><rect x="219" y="88.4" width="7" height="16.2" fill="#0c0cd0"/><rect x="219" y="104.4" width="7" height="16.2" fill="#000"/><path d="M225.5 63.3L219 60L219 66.6Z" fill="#fff"/><rect x="0" y="120" width="226" height="7" fill="#fff"/><rect x="7" y="121" width="102" height="6" fill="url(#gw3)"/><rect x="109" y="120" width="9" height="7" fill="#000"/><rect x="118" y="120.6" width="101" height="6.4" fill="url(#gc3)"/><path d="M109.5 120.3L113.2 125.8L117 120.3Z" fill="#fff"/></g></svg>
<span class="t " style="left:7.5px;top:425.7px;height:19.2px;line-height:19.2px;font-size:9.6px;color:#fff;font-weight:bold;text-shadow:0 0 1px #555;">Fps: 60.04</span>
<div style="left:0px;top:555px;width:229px;height:430px;background:#100e0e;"></div>
<svg style="left:8px;top:562px;width:8px;height:7px" viewBox="0 0 8 7"><path d="M0.3 0.6L7.7 0.6L4 6.6Z" fill="#8a8a8a"/></svg>
<span class="t " style="left:23px;top:555.1px;height:21.8px;line-height:21.8px;font-size:10.9px;">Preview Monitor / Layer / layer 2</span>
<svg style="left:2px;top:577px;width:226px;height:127px" viewBox="0 0 226 127" preserveAspectRatio="none"><defs><linearGradient id="gw4"><stop offset="0" stop-color="#fff"/><stop offset="0.75" stop-color="#222"/><stop offset="1" stop-color="#000"/></linearGradient><linearGradient id="gc4"><stop offset="0" stop-color="#2aa078"/><stop offset="0.3" stop-color="#8a9a30"/><stop offset="0.5" stop-color="#8a8a8a"/><stop offset="0.75" stop-color="#8a78d8"/><stop offset="1" stop-color="#e0608c"/></linearGradient><pattern id="ht4" width="1.6" height="1.6" patternUnits="userSpaceOnUse"><rect width="1.6" height="1.6" fill="#e8e8e8"/><rect width="0.9" height="1.6" fill="#111"/></pattern><radialGradient id="sky4" cx="0.6" cy="0.3" r="0.7"><stop offset="0" stop-color="#d4e8f6"/><stop offset="1" stop-color="#9cc8e4"/></radialGradient><clipPath id="cp4"><circle cx="112.8" cy="63.6" r="32.9"/></clipPath></defs><g transform="translate(226,0) scale(-1,1)"><rect width="226" height="127" fill="#808080"/><path d="M7.3 7V120M21.4 7V120M35.5 7V120M49.6 7V120M63.7 7V120M77.8 7V120M91.8 7V120M134.1 7V120M148.2 7V120M162.3 7V120M176.4 7V120M190.5 7V120M204.6 7V120M218.7 7V120M7 6.9H219M7 21.0H219M7 35.1H219M7 49.2H219M7 63.3H219M7 77.4H219M7 91.4H219M7 105.5H219M7 119.6H219" stroke="#ececec" stroke-width="1.3" fill="none"/><path d="M7 34.2H219M7 90.6H219M48.7 7V120M175.7 7V120" stroke="#161616" stroke-width="1" fill="none"/><path d="M105.9 7V46M120 7V46M105.9 82V120M120 82V120" stroke="#111" stroke-width="1.4"/><path d="M105.9 46V82M120 46V82" stroke="#e9e9e9" stroke-width="1.1"/><path d="M7 63.3H36M190 63.3H219" stroke="#111" stroke-width="1.6"/><path d="M34.6 56V71M191.6 56V71" stroke="#111" stroke-width="1.2"/><path d="M0.5 63.3L7.5 59.8L14.5 63.3L7.5 66.8Z" fill="#fff"/><path d="M14.5 63.3L21.5 59.8L28.5 63.3L21.5 66.8Z" fill="#fff"/><path d="M28.5 63.3L35.5 59.8L42.5 63.3L35.5 66.8Z" fill="#fff"/><path d="M183.5 63.3L190.5 59.8L197.5 63.3L190.5 66.8Z" fill="#fff"/><path d="M197.5 63.3L204.5 59.8L211.5 63.3L204.5 66.8Z" fill="#fff"/><path d="M211.5 63.3L218.5 59.8L225.5 63.3L218.5 66.8Z" fill="#fff"/><g transform="translate(19.6 19.6) rotate(45)"><rect x="-9.4" y="-7" width="18.8" height="14" fill="url(#ht4)" stroke="#e9e9e9" stroke-width="0.9"/></g><g transform="translate(206.4 19.6) rotate(-45)"><rect x="-9.4" y="-7" width="18.8" height="14" fill="url(#ht4)" stroke="#e9e9e9" stroke-width="0.9"/></g><g transform="translate(19.6 108) rotate(-45)"><rect x="-9.4" y="-7" width="18.8" height="14" fill="url(#ht4)" stroke="#e9e9e9" stroke-width="0.9"/></g><g transform="translate(206.4 108) rotate(45)"><rect x="-9.4" y="-7" width="18.8" height="14" fill="url(#ht4)" stroke="#e9e9e9" stroke-width="0.9"/></g><rect x="88" y="15.2" width="50" height="12.2" fill="#f2f2f2"/><rect x="98" y="18.7" width="30.5" height="5.7" fill="#0a0a0a"/><rect x="111.2" y="19.6" width="4" height="3.8" fill="#2fd030"/><path d="M105.9 7V32M120 7V32" stroke="#111" stroke-width="1.4"/><rect x="50.7" y="36.6" width="12.3" height="9.3" fill="#f4f4f4"/><rect x="50.7" y="45.7" width="12.3" height="9.3" fill="#c4c4c4"/><rect x="50.7" y="54.9" width="12.3" height="9.3" fill="#999"/><rect x="50.7" y="64.0" width="12.3" height="9.3" fill="#6e6e6e"/><rect x="50.7" y="73.1" width="12.3" height="9.3" fill="#3c3c3c"/><rect x="50.7" y="82.2" width="12.3" height="9.3" fill="#000"/><rect x="163.5" y="36.6" width="12.3" height="54.8" fill="#858585"/><path d="M164.5 36.6V60M166.9 36.6V60M169.3 36.6V60M171.7 36.6V60M174.1 36.6V60" stroke="#333" stroke-width="1.1"/><path d="M165.5 48V62M169.1 48V62M172.7 48V62" stroke="#444" stroke-width="1.8"/><path d="M164.4 62V91M166.4 62V91M168.4 62V91M170.4 62V91M172.4 62V91M174.4 62V91" stroke="#6a6a6a" stroke-width="0.8"/><rect x="50" y="106.2" width="126" height="13" fill="#808080"/><path d="M49.5 106V120M176.5 106V120" stroke="#e9e9e9" stroke-width="1.1"/><rect x="78.2" y="110.5" width="6" height="6" fill="#e4e4e4"/><rect x="85.4" y="110.5" width="6" height="6" fill="#e4e4e4"/><rect x="92.6" y="110.5" width="6" height="6" fill="#e4e4e4"/><path d="M101 113.5L106.5 108.5L112 113.5L106.5 118.5Z" fill="#e4e4e4"/><text x="118" y="116.2" font-family="Liberation Sans,sans-serif" font-size="6.6" fill="#f0f0f0">1080 lines</text><text x="180" y="20" font-family="Liberation Sans,sans-serif" font-size="10" fill="#e4e4e4">R</text><circle cx="112.8" cy="63.6" r="33.8" fill="#f6f6f6"/><g clip-path="url(#cp4)"><rect x="78" y="29" width="70" height="70" fill="url(#sky4)"/><path d="M110 50.6L127 47.6L145 45.6L147 78L132 84L109 84Z" fill="#1c1c1e"/><path d="M91 54L99 50L100 74L88 70Z" fill="#3a3432"/><path d="M112 62l9-3M119.5 55.5l0.6 9M114 66l5-2.4M122 59.4l2.4-0.4M102.5 63.4l2 2.2" stroke="#f0f0f0" stroke-width="0.9" fill="none"/><path d="M134 47l2.6-6.2l2.2 6.8z" fill="#d8c060"/><path d="M135.4 44l1.2-3l1 3.2z" fill="#6898c8"/><path d="M137 49q4.6 2 3.8 11q-0.6 4-2.6 4.600q1.400-8-1.200-15.600z" fill="#d8c070"/><path d="M123.8 55q-0.400-8.400 6.800-9q7.600 0.200 7.400 9.200q-0.400 7.800-7 8.200q-6.400-0.400-7.200-8.400z" fill="#ecc8c4"/><path d="M126.600 57.400q3.600 2.600 7.800-1.200q-1.400 5-4.400 4.800q-2.600-0.400-3.400-3.600z" fill="#c82c34"/><path d="M127.400 51.600l2 0.600M132.400 51l2-0.400" stroke="#3a5a8a" stroke-width="1"/><circle cx="130.6" cy="55" r="1.2" fill="#d84040"/><path d="M122 72q1-8.400 9.600-9q8.600 0.600 10.400 9.400q1.400 7.600-2.600 11.600l-17.400 0.600q-2.400-6-0-12.600z" fill="#4f8f60"/><circle cx="128.400" cy="70" r="0.900" fill="#d8d060"/><circle cx="127.600" cy="75.400" r="0.900" fill="#d8d060"/><path d="M139 72l2.400 1.600l-1 4z" fill="#e8b0b0"/><path d="M94.600 42q2.400-5.400 8.600-5.200q5.800 0.800 7 6.400l-2 3l-6.600-1.400l-1 10l1.400 9.600l2 9.600l-3.400 4l-4.400-6.600l-5.200-9.400q-0.400-11 3.600-20z" fill="#b8946c"/><path d="M97.400 40.400q4-3.400 9-1.200l-0.600 2.200q-4.200-1.600-7.600 1z" fill="#c0405c"/><path d="M100.800 47.600q1.200-4 5.400-3.400q4 1 3.800 7q0 3.400-1.600 6q-1.600 2.800-4.200 2.400q-3-1.200-3.800-5.800q-0.400-3.400 0.400-6.200z" fill="#eac4ac"/><path d="M106 57.600l2.400-0.200" stroke="#b05050" stroke-width="0.800"/><path d="M106.400 51l1.800 0" stroke="#50403a" stroke-width="0.800"/><path d="M101 46q-2.400 6-1.400 12l2.400 10l1.600 8l-4.400 2l-3.400-10l-1-12q1.400-7 6.200-10z" fill="#c8a47c"/><path d="M82 73q2.400-8.400 9.400-12.600l4.400 0.800l3.400 9.400l4 4.400l-1.400 6l-3 10l2 4l-10 0q-8-8-8.800-22z" fill="#a62a3a"/><path d="M89.600 74.600q3-3 6.400-0.800l4 12.400l18-18.600q2-1.600 3.400 0.400q0.800 2.400-1 4.400l-19 20.400q-3 1.600-5.400-1z" fill="#e4b89c"/><path d="M117 67.400q2-2.600 4.400-1.400q1.400 2 0 4.400q-2 2-4.400 0.400z" fill="#eccab0"/><path d="M108.400 83.400l31 -0.800l-2 8l-8 8l-25-4.400z" fill="#dab428"/><path d="M108.400 83.400l6 6l-4 5.200l-6-0.400z" fill="#c49c1c"/></g><rect x="0" y="0" width="226" height="7" fill="#fff"/><rect x="14" y="0" width="28.6" height="7" fill="#e6e620"/><rect x="42.4" y="0" width="28.8" height="7" fill="#1ce0d0"/><rect x="71" y="0" width="28.2" height="7" fill="#1ce628"/><rect x="99" y="0" width="28.9" height="7" fill="#e41ce0"/><rect x="127.7" y="0" width="28.5" height="7" fill="#dc0c14"/><rect x="156" y="0" width="28.2" height="7" fill="#0c0cd0"/><rect x="184" y="0" width="28.2" height="7" fill="#000"/><path d="M109.5 7L113.2 1.5L117 7Z" fill="#fff"/><rect x="0" y="0" width="7" height="127" fill="#fff"/><rect x="0" y="7" width="7" height="22.9" height="7" fill="#1eb884"/><rect x="0" y="29.7" width="7" height="23.8" height="7" fill="#ee4c8c"/><rect x="0" y="53.3" width="7" height="20.9" height="7" fill="#000"/><rect x="0" y="74" width="7" height="23.7" height="7" fill="#7c6cf0"/><rect x="0" y="97.5" width="7" height="23.1" height="7" fill="#8ea410"/><path d="M0.5 63.3L7 60L7 66.6Z" fill="#fff"/><rect x="219" y="0" width="7" height="127" fill="#fff"/><rect x="219" y="7" width="7" height="16.8" fill="#e6e620"/><rect x="219" y="23.6" width="7" height="16.2" fill="#1ce0d0"/><rect x="219" y="39.6" width="7" height="16.2" fill="#1ce628"/><rect x="219" y="55.6" width="7" height="16.2" fill="#e41ce0"/><rect x="219" y="71.6" width="7" height="17.0" fill="#dc0c14"/><rect x="219" y="88.4" width="7" height="16.2" fill="#0c0cd0"/><rect x="219" y="104.4" width="7" height="16.2" fill="#000"/><path d="M225.5 63.3L219 60L219 66.6Z" fill="#fff"/><rect x="0" y="120" width="226" height="7" fill="#fff"/><rect x="7" y="121" width="102" height="6" fill="url(#gw4)"/><rect x="109" y="120" width="9" height="7" fill="#000"/><rect x="118" y="120.6" width="101" height="6.4" fill="url(#gc4)"/><path d="M109.5 120.3L113.2 125.8L117 120.3Z" fill="#fff"/></g></svg>
<span class="t " style="left:7.5px;top:578.6999999999999px;height:19.2px;line-height:19.2px;font-size:9.6px;color:#fff;font-weight:bold;text-shadow:0 0 1px #555;">Fps: 60.04</span>
<div style="left:233px;top:402px;width:353px;height:583px;background:#0f0d0d;"></div>
<div style="left:233px;top:402px;width:353px;height:32px;background:#181615;"></div>
<span class="t " style="left:246px;top:407.2px;height:22px;line-height:22px;font-size:11px;color:#f2f2f2;font-weight:bold;">test 1280x720 (1280 x 720)</span>
<div style="left:551px;top:410px;width:27px;height:14px;background:#3d3d3d;border-radius:3px;"></div>
<svg style="left:555px;top:412px;width:20px;height:10px" viewBox="0 0 20 10"><g fill="none" stroke="#e8e8e8"><circle cx="5.4" cy="5" r="2.6" stroke-width="1.5"/><path d="M5.4 0.4V1.8M5.4 8.2V9.6M0.8 5H2.2M8.6 5H10M2.1 1.7L3.1 2.7M7.7 7.3L8.7 8.3M2.1 8.3L3.1 7.3M7.7 2.7L8.7 1.7" stroke-width="1.5"/></g><path d="M12.6 4L17.4 4L15 6.6Z" fill="#e8e8e8"/></svg>
<div style="left:233px;top:435px;width:353px;height:23px;background:#313131;"></div>
<svg style="left:238px;top:441.5px;width:7px;height:9px" viewBox="0 0 7 9"><path d="M0.4 0.2L6.6 4.5L0.4 8.8Z" fill="#8c8c8c"/></svg>
<span class="t " style="left:252px;top:435.85px;height:21.3px;line-height:21.3px;font-size:10.65px;">Dashboard</span>
<div style="left:233px;top:459px;width:353px;height:23px;background:#313131;"></div>
<svg style="left:237.5px;top:467.5px;width:8px;height:7px" viewBox="0 0 8 7"><path d="M0.3 0.4L7.7 0.4L4 6.4Z" fill="#8c8c8c"/></svg>
<span class="t " style="left:252px;top:459.85px;height:21.3px;line-height:21.3px;font-size:10.65px;">Audio</span>
<div style="left:233px;top:483px;width:87px;height:23px;background:#1d1b1a;"></div>
<div style="left:321px;top:483px;width:265px;height:23px;background:#1d1b1a;"></div>
<span class="t " style="left:233px;top:483.85px;height:21.3px;line-height:21.3px;font-size:10.65px;width:80px;text-align:right;">Volume</span>
<span class="t " style="left:327px;top:483.85px;height:21.3px;line-height:21.3px;font-size:10.65px;">0.00</span>
<div style="left:375px;top:488px;width:206px;height:12px;background:#0b0b0b;border-radius:3px;"></div>
<div style="left:375px;top:488px;width:155.52999999999997px;height:12px;background:#2c2c2c;border-radius:3px 0 0 3px;"></div>
<div style="left:530px;top:488px;width:4px;height:12px;background:#2d7391;"></div>
<div style="left:233px;top:507px;width:87px;height:23px;background:#1d1b1a;"></div>
<div style="left:321px;top:507px;width:265px;height:23px;background:#1d1b1a;"></div>
<span class="t " style="left:233px;top:507.85px;height:21.3px;line-height:21.3px;font-size:10.65px;width:80px;text-align:right;">Pan</span>
<span class="t " style="left:327px;top:507.85px;height:21.3px;line-height:21.3px;font-size:10.65px;">0.00</span>
<div style="left:375px;top:512px;width:206px;height:12px;background:#0b0b0b;border-radius:3px;"></div>
<div style="left:476px;top:512px;width:4px;height:12px;background:#2d7391;"></div>
<div style="left:233px;top:531px;width:353px;height:23px;background:#313131;"></div>
<svg style="left:237.5px;top:539.5px;width:8px;height:7px" viewBox="0 0 8 7"><path d="M0.3 0.4L7.7 0.4L4 6.4Z" fill="#8c8c8c"/></svg>
<span class="t " style="left:252px;top:531.85px;height:21.3px;line-height:21.3px;font-size:10.65px;">Transform</span>
<svg style="left:561px;top:538px;width:19px;height:9px" viewBox="0 0 19 9"><path d="M0 0.5H19M0 4.5H19M0 8.5H19" stroke="#4a4a4a" stroke-width="1"/></svg>
<div style="left:233px;top:555px;width:87px;height:23px;background:#1d1b1a;"></div>
<div style="left:321px;top:555px;width:265px;height:23px;background:#1d1b1a;"></div>
<span class="t " style="left:233px;top:555.85px;height:21.3px;line-height:21.3px;font-size:10.65px;width:80px;text-align:right;">Fade Out</span>
<span class="t " style="left:327px;top:555.85px;height:21.3px;line-height:21.3px;font-size:10.65px;">1.00</span>
<div style="left:375px;top:560px;width:206px;height:12px;background:#0b0b0b;border-radius:3px;"></div>
<div style="left:375px;top:560px;width:203.0px;height:12px;background:#2c2c2c;border-radius:3px 0 0 3px;"></div>
<div style="left:577px;top:560px;width:4px;height:12px;background:#4f7a5c;"></div>
<div style="left:233px;top:579px;width:87px;height:23px;background:#1d1b1a;"></div>
<div style="left:321px;top:579px;width:265px;height:23px;background:#1d1b1a;"></div>
<span class="t " style="left:233px;top:579.85px;height:21.3px;line-height:21.3px;font-size:10.65px;width:80px;text-align:right;">Scale</span>
<span class="t " style="left:327px;top:579.8px;height:21.4px;line-height:21.4px;font-size:10.7px;color:#e6e6e6;transform:scaleX(0.784);transform-origin:0 50%;">100.0...</span>
<div style="left:375px;top:584px;width:206px;height:12px;background:#0b0b0b;border-radius:3px;"></div>
<div style="left:375px;top:584px;width:20.795999999999992px;height:12px;background:#2c2c2c;border-radius:3px 0 0 3px;"></div>
<div style="left:395px;top:584px;width:4px;height:12px;background:#4f7a5c;"></div>
<div style="left:233px;top:603px;width:87px;height:23px;background:#1d1b1a;"></div>
<div style="left:321px;top:603px;width:265px;height:23px;background:#1d1b1a;"></div>
<span class="t " style="left:233px;top:603.85px;height:21.3px;line-height:21.3px;font-size:10.65px;width:80px;text-align:right;">Rotate X</span>
<span class="t " style="left:327px;top:603.85px;height:21.3px;line-height:21.3px;font-size:10.65px;">0.00 °</span>
<div style="left:375px;top:608px;width:206px;height:12px;background:#0b0b0b;border-radius:3px;"></div>
<div style="left:476px;top:608px;width:4px;height:12px;background:#4f7a5c;"></div>
<div style="left:233px;top:627px;width:87px;height:23px;background:#1d1b1a;"></div>
<div style="left:321px;top:627px;width:265px;height:23px;background:#1d1b1a;"></div>
<span class="t " style="left:233px;top:627.85px;height:21.3px;line-height:21.3px;font-size:10.65px;width:80px;text-align:right;">Rotate Y</span>
<span class="t " style="left:327px;top:627.85px;height:21.3px;line-height:21.3px;font-size:10.65px;">0.00 °</span>
<div style="left:375px;top:632px;width:206px;height:12px;background:#0b0b0b;border-radius:3px;"></div>
<div style="left:476px;top:632px;width:4px;height:12px;background:#4f7a5c;"></div>
<div style="left:233px;top:651px;width:87px;height:23px;background:#1d1b1a;"></div>
<div style="left:321px;top:651px;width:265px;height:23px;background:#1d1b1a;"></div>
<span class="t " style="left:233px;top:651.85px;height:21.3px;line-height:21.3px;font-size:10.65px;width:80px;text-align:right;">Rotate Z</span>
<span class="t " style="left:327px;top:651.85px;height:21.3px;line-height:21.3px;font-size:10.65px;">0.00 °</span>
<div style="left:375px;top:656px;width:206px;height:12px;background:#0b0b0b;border-radius:3px;"></div>
<div style="left:476px;top:656px;width:4px;height:12px;background:#4f7a5c;"></div>
<span class="t c" style="left:233px;top:818.3px;height:21.4px;line-height:21.4px;font-size:10.7px;width:353px;color:#2e2e2e;">Drop effect or mask here.</span>
<div style="left:589px;top:402px;width:353px;height:583px;background:#0f0d0d;"></div>
<div style="left:589px;top:402px;width:353px;height:32px;background:#181615;"></div>
<div style="left:597px;top:408px;width:123px;height:18px;background:#0a0a0a;border:1px solid #4a4a4a;"></div>
<span class="t " style="left:602px;top:407.35px;height:21.3px;line-height:21.3px;font-size:10.65px;">layer 1</span>
<div style="left:907px;top:410px;width:27px;height:14px;background:#3d3d3d;border-radius:3px;"></div>
<svg style="left:911px;top:412px;width:20px;height:10px" viewBox="0 0 20 10"><g fill="none" stroke="#e8e8e8"><circle cx="5.4" cy="5" r="2.6" stroke-width="1.5"/><path d="M5.4 0.4V1.8M5.4 8.2V9.6M0.8 5H2.2M8.6 5H10M2.1 1.7L3.1 2.7M7.7 7.3L8.7 8.3M2.1 8.3L3.1 7.3M7.7 2.7L8.7 1.7" stroke-width="1.5"/></g><path d="M12.6 4L17.4 4L15 6.6Z" fill="#e8e8e8"/></svg>
<div style="left:589px;top:435px;width:353px;height:23px;background:#313131;"></div>
<svg style="left:594px;top:441.5px;width:7px;height:9px" viewBox="0 0 7 9"><path d="M0.4 0.2L6.6 4.5L0.4 8.8Z" fill="#8c8c8c"/></svg>
<span class="t " style="left:608px;top:435.85px;height:21.3px;line-height:21.3px;font-size:10.65px;">Dashboard</span>
<div style="left:589px;top:459px;width:353px;height:23px;background:#313131;"></div>
<svg style="left:594px;top:465.5px;width:7px;height:9px" viewBox="0 0 7 9"><path d="M0.4 0.2L6.6 4.5L0.4 8.8Z" fill="#8c8c8c"/></svg>
<span class="t " style="left:608px;top:459.85px;height:21.3px;line-height:21.3px;font-size:10.65px;">Auto Pilot</span>
<div style="left:589px;top:483px;width:353px;height:23px;background:#313131;"></div>
<svg style="left:593.5px;top:491.5px;width:8px;height:7px" viewBox="0 0 8 7"><path d="M0.3 0.4L7.7 0.4L4 6.4Z" fill="#8c8c8c"/></svg>
<span class="t " style="left:608px;top:483.85px;height:21.3px;line-height:21.3px;font-size:10.65px;">Audio</span>
<div style="left:589px;top:507px;width:87px;height:23px;background:#1d1b1a;"></div>
<div style="left:677px;top:507px;width:265px;height:23px;background:#1d1b1a;"></div>
<span class="t " style="left:589px;top:507.85px;height:21.3px;line-height:21.3px;font-size:10.65px;width:80px;text-align:right;">Volume</span>
<span class="t " style="left:683px;top:507.85px;height:21.3px;line-height:21.3px;font-size:10.65px;">1.00</span>
<div style="left:731px;top:512px;width:206px;height:12px;background:#0b0b0b;border-radius:3px;"></div>
<div style="left:731px;top:512px;width:203.0px;height:12px;background:#2c2c2c;border-radius:3px 0 0 3px;"></div>
<div style="left:933px;top:512px;width:4px;height:12px;background:#2d7391;"></div>
<div style="left:589px;top:531px;width:87px;height:23px;background:#1d1b1a;"></div>
<div style="left:677px;top:531px;width:265px;height:23px;background:#1d1b1a;"></div>
<span class="t " style="left:589px;top:531.85px;height:21.3px;line-height:21.3px;font-size:10.65px;width:80px;text-align:right;">Pan</span>
<span class="t " style="left:683px;top:531.85px;height:21.3px;line-height:21.3px;font-size:10.65px;">-0.00</span>
<div style="left:731px;top:536px;width:206px;height:12px;background:#0b0b0b;border-radius:3px;"></div>
<div style="left:832px;top:536px;width:4px;height:12px;background:#2d7391;"></div>
<div style="left:589px;top:555px;width:353px;height:23px;background:#313131;"></div>
<svg style="left:593.5px;top:563.5px;width:8px;height:7px" viewBox="0 0 8 7"><path d="M0.3 0.4L7.7 0.4L4 6.4Z" fill="#8c8c8c"/></svg>
<span class="t " style="left:608px;top:555.85px;height:21.3px;line-height:21.3px;font-size:10.65px;">Transform</span>
<svg style="left:917px;top:562px;width:19px;height:9px" viewBox="0 0 19 9"><path d="M0 0.5H19M0 4.5H19M0 8.5H19" stroke="#4a4a4a" stroke-width="1"/></svg>
<div style="left:589px;top:579px;width:87px;height:23px;background:#1d1b1a;"></div>
<div style="left:677px;top:579px;width:265px;height:23px;background:#1d1b1a;"></div>
<span class="t " style="left:589px;top:579.85px;height:21.3px;line-height:21.3px;font-size:10.65px;width:80px;text-align:right;">Blend Mode</span>
<span class="t " style="left:683px;top:579.85px;height:21.3px;line-height:21.3px;font-size:10.65px;">Add</span>
<div style="left:682px;top:584px;width:79px;height:12px;background:#3a3a3a;border-radius:3px;"></div>
<span class="t " style="left:688px;top:580.0999999999999px;height:21.4px;line-height:21.4px;font-size:10.7px;">Add</span>
<svg style="left:753px;top:588px;width:5px;height:6px" viewBox="0 0 5 6"><path d="M0.8 0.3 L4.2 0.3 L2.5 5.8Z" fill="#1c1c1c"/></svg>
<div style="left:589px;top:603px;width:87px;height:23px;background:#1d1b1a;"></div>
<div style="left:677px;top:603px;width:265px;height:23px;background:#1d1b1a;"></div>
<span class="t " style="left:589px;top:603.85px;height:21.3px;line-height:21.3px;font-size:10.65px;width:80px;text-align:right;">Opacity</span>
<span class="t " style="left:683px;top:603.85px;height:21.3px;line-height:21.3px;font-size:10.65px;">1.00</span>
<div style="left:731px;top:608px;width:206px;height:12px;background:#0b0b0b;border-radius:3px;"></div>
<div style="left:731px;top:608px;width:203.0px;height:12px;background:#2c2c2c;border-radius:3px 0 0 3px;"></div>
<div style="left:933px;top:608px;width:4px;height:12px;background:#4f7a5c;"></div>
<div style="left:589px;top:627px;width:87px;height:23px;background:#1d1b1a;"></div>
<div style="left:677px;top:627px;width:265px;height:23px;background:#1d1b1a;"></div>
<span class="t " style="left:589px;top:627.85px;height:21.3px;line-height:21.3px;font-size:10.65px;width:80px;text-align:right;">Width</span>
<span class="t " style="left:681px;top:629.9px;height:17.8px;line-height:17.8px;font-size:8.9px;color:#9a9a9a;">Disabled</span>
<div style="left:589px;top:651px;width:87px;height:23px;background:#1d1b1a;"></div>
<div style="left:677px;top:651px;width:265px;height:23px;background:#1d1b1a;"></div>
<span class="t " style="left:589px;top:651.85px;height:21.3px;line-height:21.3px;font-size:10.65px;width:80px;text-align:right;">Height</span>
<span class="t " style="left:681px;top:653.9px;height:17.8px;line-height:17.8px;font-size:8.9px;color:#9a9a9a;">Disabled</span>
<div style="left:589px;top:675px;width:87px;height:23px;background:#1d1b1a;"></div>
<div style="left:677px;top:675px;width:265px;height:23px;background:#1d1b1a;"></div>
<span class="t " style="left:589px;top:675.85px;height:21.3px;line-height:21.3px;font-size:10.65px;width:80px;text-align:right;">Scale</span>
<span class="t " style="left:683px;top:675.8px;height:21.4px;line-height:21.4px;font-size:10.7px;color:#e6e6e6;transform:scaleX(0.784);transform-origin:0 50%;">100.0...</span>
<div style="left:731px;top:680px;width:206px;height:12px;background:#0b0b0b;border-radius:3px;"></div>
<div style="left:731px;top:680px;width:20.79600000000005px;height:12px;background:#2c2c2c;border-radius:3px 0 0 3px;"></div>
<div style="left:751px;top:680px;width:4px;height:12px;background:#4f7a5c;"></div>
<div style="left:589px;top:699px;width:87px;height:23px;background:#1d1b1a;"></div>
<div style="left:677px;top:699px;width:265px;height:23px;background:#1d1b1a;"></div>
<span class="t " style="left:589px;top:699.85px;height:21.3px;line-height:21.3px;font-size:10.65px;width:80px;text-align:right;">Position X</span>
<span class="t " style="left:683px;top:699.85px;height:21.3px;line-height:21.3px;font-size:10.65px;">0</span>
<div style="left:731px;top:703px;width:30px;height:14px;background:#3a3a3a;border-radius:3px;"></div>
<span class="t " style="left:738px;top:700.8px;height:18px;line-height:18px;font-size:9px;color:#ccc;">-</span>
<span class="t " style="left:749px;top:702.3px;height:16px;line-height:16px;font-size:8px;color:#ccc;">+</span>
<div style="left:589px;top:723px;width:87px;height:23px;background:#1d1b1a;"></div>
<div style="left:677px;top:723px;width:265px;height:23px;background:#1d1b1a;"></div>
<span class="t " style="left:589px;top:723.85px;height:21.3px;line-height:21.3px;font-size:10.65px;width:80px;text-align:right;">Position Y</span>
<span class="t " style="left:683px;top:723.85px;height:21.3px;line-height:21.3px;font-size:10.65px;">0</span>
<div style="left:731px;top:727px;width:30px;height:14px;background:#3a3a3a;border-radius:3px;"></div>
<span class="t " style="left:738px;top:724.8px;height:18px;line-height:18px;font-size:9px;color:#ccc;">-</span>
<span class="t " style="left:749px;top:726.3px;height:16px;line-height:16px;font-size:8px;color:#ccc;">+</span>
<div style="left:589px;top:747px;width:87px;height:23px;background:#1d1b1a;"></div>
<div style="left:677px;top:747px;width:265px;height:23px;background:#1d1b1a;"></div>
<span class="t " style="left:589px;top:747.85px;height:21.3px;line-height:21.3px;font-size:10.65px;width:80px;text-align:right;">Rotate X</span>
<span class="t " style="left:683px;top:747.85px;height:21.3px;line-height:21.3px;font-size:10.65px;">0.00 °</span>
<div style="left:731px;top:752px;width:206px;height:12px;background:#0b0b0b;border-radius:3px;"></div>
<div style="left:832px;top:752px;width:4px;height:12px;background:#4f7a5c;"></div>
<div style="left:589px;top:771px;width:87px;height:23px;background:#1d1b1a;"></div>
<div style="left:677px;top:771px;width:265px;height:23px;background:#1d1b1a;"></div>
<span class="t " style="left:589px;top:771.85px;height:21.3px;line-height:21.3px;font-size:10.65px;width:80px;text-align:right;">Rotate Y</span>
<span class="t " style="left:683px;top:771.85px;height:21.3px;line-height:21.3px;font-size:10.65px;">0.00 °</span>
<div style="left:731px;top:776px;width:206px;height:12px;background:#0b0b0b;border-radius:3px;"></div>
<div style="left:832px;top:776px;width:4px;height:12px;background:#4f7a5c;"></div>
<div style="left:589px;top:795px;width:87px;height:23px;background:#1d1b1a;"></div>
<div style="left:677px;top:795px;width:265px;height:23px;background:#1d1b1a;"></div>
<span class="t " style="left:589px;top:795.85px;height:21.3px;line-height:21.3px;font-size:10.65px;width:80px;text-align:right;">Rotate Z</span>
<span class="t " style="left:683px;top:795.85px;height:21.3px;line-height:21.3px;font-size:10.65px;">0.00 °</span>
<div style="left:731px;top:800px;width:206px;height:12px;background:#0b0b0b;border-radius:3px;"></div>
<div style="left:832px;top:800px;width:4px;height:12px;background:#4f7a5c;"></div>
<div style="left:589px;top:819px;width:87px;height:23px;background:#1d1b1a;"></div>
<div style="left:677px;top:819px;width:265px;height:23px;background:#1d1b1a;"></div>
<span class="t " style="left:589px;top:819.85px;height:21.3px;line-height:21.3px;font-size:10.65px;width:80px;text-align:right;">Anchor X</span>
<span class="t " style="left:683px;top:819.85px;height:21.3px;line-height:21.3px;font-size:10.65px;">0.00</span>
<div style="left:731px;top:824px;width:206px;height:12px;background:#0b0b0b;border-radius:3px;"></div>
<div style="left:832px;top:824px;width:4px;height:12px;background:#4f7a5c;"></div>
<div style="left:589px;top:843px;width:87px;height:23px;background:#1d1b1a;"></div>
<div style="left:677px;top:843px;width:265px;height:23px;background:#1d1b1a;"></div>
<span class="t " style="left:589px;top:843.85px;height:21.3px;line-height:21.3px;font-size:10.65px;width:80px;text-align:right;">Anchor Y</span>
<span class="t " style="left:683px;top:843.85px;height:21.3px;line-height:21.3px;font-size:10.65px;">0.00</span>
<div style="left:731px;top:848px;width:206px;height:12px;background:#0b0b0b;border-radius:3px;"></div>
<div style="left:832px;top:848px;width:4px;height:12px;background:#4f7a5c;"></div>
<div style="left:589px;top:867px;width:87px;height:23px;background:#1d1b1a;"></div>
<div style="left:677px;top:867px;width:265px;height:23px;background:#1d1b1a;"></div>
<span class="t " style="left:589px;top:867.85px;height:21.3px;line-height:21.3px;font-size:10.65px;width:80px;text-align:right;">Anchor Z</span>
<span class="t " style="left:683px;top:867.85px;height:21.3px;line-height:21.3px;font-size:10.65px;">0.00</span>
<div style="left:731px;top:872px;width:206px;height:12px;background:#0b0b0b;border-radius:3px;"></div>
<div style="left:832px;top:872px;width:4px;height:12px;background:#4f7a5c;"></div>
<span class="t c" style="left:589px;top:926.3px;height:21.4px;line-height:21.4px;font-size:10.7px;width:353px;color:#2e2e2e;">Drop effect or mask here.</span>
<div style="left:945px;top:402px;width:355px;height:583px;background:#0f0d0d;"></div>
<div style="left:945px;top:402px;width:355px;height:32px;background:#181615;"></div>
<div style="left:1265px;top:410px;width:27px;height:14px;background:#3d3d3d;border-radius:3px;"></div>
<svg style="left:1269px;top:412px;width:20px;height:10px" viewBox="0 0 20 10"><g fill="none" stroke="#e8e8e8"><circle cx="5.4" cy="5" r="2.6" stroke-width="1.5"/><path d="M5.4 0.4V1.8M5.4 8.2V9.6M0.8 5H2.2M8.6 5H10M2.1 1.7L3.1 2.7M7.7 7.3L8.7 8.3M2.1 8.3L3.1 7.3M7.7 2.7L8.7 1.7" stroke-width="1.5"/></g><path d="M12.6 4L17.4 4L15 6.6Z" fill="#e8e8e8"/></svg>
<div style="left:945px;top:435px;width:355px;height:23px;background:#313131;"></div>
<svg style="left:950px;top:441.5px;width:7px;height:9px" viewBox="0 0 7 9"><path d="M0.4 0.2L6.6 4.5L0.4 8.8Z" fill="#8c8c8c"/></svg>
<span class="t " style="left:964px;top:435.85px;height:21.3px;line-height:21.3px;font-size:10.65px;">Dashboard</span>
<div style="left:945px;top:459px;width:355px;height:23px;background:#313131;"></div>
<svg style="left:950px;top:465.5px;width:7px;height:9px" viewBox="0 0 7 9"><path d="M0.4 0.2L6.6 4.5L0.4 8.8Z" fill="#8c8c8c"/></svg>
<span class="t " style="left:964px;top:459.85px;height:21.3px;line-height:21.3px;font-size:10.65px;">Auto Pilot</span>
<div style="left:945px;top:483px;width:355px;height:23px;background:#313131;"></div>
<svg style="left:949.5px;top:491.5px;width:8px;height:7px" viewBox="0 0 8 7"><path d="M0.3 0.4L7.7 0.4L4 6.4Z" fill="#8c8c8c"/></svg>
<span class="t " style="left:964px;top:483.85px;height:21.3px;line-height:21.3px;font-size:10.65px;"></span>
<div style="left:945px;top:507px;width:355px;height:23px;background:#313131;"></div>
<svg style="left:949.5px;top:515.5px;width:8px;height:7px" viewBox="0 0 8 7"><path d="M0.3 0.4L7.7 0.4L4 6.4Z" fill="#8c8c8c"/></svg>
<span class="t " style="left:964px;top:507.85px;height:21.3px;line-height:21.3px;font-size:10.65px;"></span>
<div style="left:945px;top:531px;width:87px;height:23px;background:#1d1b1a;"></div>
<div style="left:1033px;top:531px;width:267px;height:23px;background:#1d1b1a;"></div>
<span class="t " style="left:945px;top:531.85px;height:21.3px;line-height:21.3px;font-size:10.65px;width:80px;text-align:right;"></span>
<span class="t " style="left:1039px;top:531.85px;height:21.3px;line-height:21.3px;font-size:10.65px;"></span>
<div style="left:945px;top:555px;width:87px;height:23px;background:#1d1b1a;"></div>
<div style="left:1033px;top:555px;width:267px;height:23px;background:#1d1b1a;"></div>
<span class="t " style="left:945px;top:555.85px;height:21.3px;line-height:21.3px;font-size:10.65px;width:80px;text-align:right;"></span>
<span class="t " style="left:1039px;top:555.85px;height:21.3px;line-height:21.3px;font-size:10.65px;"></span>
<div style="left:945px;top:579px;width:87px;height:23px;background:#1d1b1a;"></div>
<div style="left:1033px;top:579px;width:267px;height:23px;background:#1d1b1a;"></div>
<span class="t " style="left:945px;top:579.85px;height:21.3px;line-height:21.3px;font-size:10.65px;width:80px;text-align:right;"></span>
<span class="t " style="left:1039px;top:579.85px;height:21.3px;line-height:21.3px;font-size:10.65px;"></span>
<div style="left:945px;top:603px;width:355px;height:23px;background:#313131;"></div>
<svg style="left:949.5px;top:611.5px;width:8px;height:7px" viewBox="0 0 8 7"><path d="M0.3 0.4L7.7 0.4L4 6.4Z" fill="#8c8c8c"/></svg>
<span class="t " style="left:964px;top:603.85px;height:21.3px;line-height:21.3px;font-size:10.65px;">Transform</span>
<svg style="left:1275px;top:610px;width:19px;height:9px" viewBox="0 0 19 9"><path d="M0 0.5H19M0 4.5H19M0 8.5H19" stroke="#4a4a4a" stroke-width="1"/></svg>
<div style="left:945px;top:627px;width:87px;height:23px;background:#1d1b1a;"></div>
<div style="left:1033px;top:627px;width:267px;height:23px;background:#1d1b1a;"></div>
<span class="t " style="left:945px;top:627.85px;height:21.3px;line-height:21.3px;font-size:10.65px;width:80px;text-align:right;">Opacity</span>
<span class="t " style="left:1039px;top:627.85px;height:21.3px;line-height:21.3px;font-size:10.65px;">1.00</span>
<div style="left:1087px;top:632px;width:208px;height:12px;background:#0b0b0b;border-radius:3px;"></div>
<div style="left:1087px;top:632px;width:205.0px;height:12px;background:#2c2c2c;border-radius:3px 0 0 3px;"></div>
<div style="left:1291px;top:632px;width:4px;height:12px;background:#4f7a5c;"></div>
<div style="left:945px;top:651px;width:87px;height:23px;background:#1d1b1a;"></div>
<div style="left:1033px;top:651px;width:267px;height:23px;background:#1d1b1a;"></div>
<span class="t " style="left:945px;top:651.85px;height:21.3px;line-height:21.3px;font-size:10.65px;width:80px;text-align:right;">Width</span>
<span class="t " style="left:1039px;top:651.85px;height:21.3px;line-height:21.3px;font-size:10.65px;"></span>
<div style="left:1087px;top:656px;width:208px;height:12px;background:#0b0b0b;border-radius:3px;"></div>
<div style="left:1189px;top:656px;width:4px;height:12px;background:#4f7a5c;"></div>
<div style="left:945px;top:675px;width:87px;height:23px;background:#1d1b1a;"></div>
<div style="left:1033px;top:675px;width:267px;height:23px;background:#1d1b1a;"></div>
<span class="t " style="left:945px;top:675.85px;height:21.3px;line-height:21.3px;font-size:10.65px;width:80px;text-align:right;">Height</span>
<span class="t " style="left:1039px;top:675.85px;height:21.3px;line-height:21.3px;font-size:10.65px;"></span>
<div style="left:1087px;top:680px;width:208px;height:12px;background:#0b0b0b;border-radius:3px;"></div>
<div style="left:1189px;top:680px;width:4px;height:12px;background:#4f7a5c;"></div>
<div style="left:945px;top:699px;width:87px;height:23px;background:#1d1b1a;"></div>
<div style="left:1033px;top:699px;width:267px;height:23px;background:#1d1b1a;"></div>
<span class="t " style="left:945px;top:699.85px;height:21.3px;line-height:21.3px;font-size:10.65px;width:80px;text-align:right;">Scale</span>
<span class="t " style="left:1039px;top:699.85px;height:21.3px;line-height:21.3px;font-size:10.65px;">100.0...</span>
<div style="left:1087px;top:704px;width:208px;height:12px;background:#0b0b0b;border-radius:3px;"></div>
<div style="left:1087px;top:704px;width:20.991999999999962px;height:12px;background:#2c2c2c;border-radius:3px 0 0 3px;"></div>
<div style="left:1107px;top:704px;width:4px;height:12px;background:#4f7a5c;"></div>
<div style="left:945px;top:723px;width:87px;height:23px;background:#1d1b1a;"></div>
<div style="left:1033px;top:723px;width:267px;height:23px;background:#1d1b1a;"></div>
<span class="t " style="left:945px;top:723.85px;height:21.3px;line-height:21.3px;font-size:10.65px;width:80px;text-align:right;">Position X</span>
<span class="t " style="left:1039px;top:723.85px;height:21.3px;line-height:21.3px;font-size:10.65px;">0</span>
<div style="left:1087px;top:728px;width:208px;height:12px;background:#0b0b0b;border-radius:3px;"></div>
<div style="left:1189px;top:728px;width:4px;height:12px;background:#4f7a5c;"></div>
<div style="left:945px;top:747px;width:87px;height:23px;background:#1d1b1a;"></div>
<div style="left:1033px;top:747px;width:267px;height:23px;background:#1d1b1a;"></div>
<span class="t " style="left:945px;top:747.85px;height:21.3px;line-height:21.3px;font-size:10.65px;width:80px;text-align:right;">Position Y</span>
<span class="t " style="left:1039px;top:747.85px;height:21.3px;line-height:21.3px;font-size:10.65px;">0</span>
<div style="left:1087px;top:752px;width:208px;height:12px;background:#0b0b0b;border-radius:3px;"></div>
<div style="left:1189px;top:752px;width:4px;height:12px;background:#4f7a5c;"></div>
<div style="left:945px;top:771px;width:87px;height:23px;background:#1d1b1a;"></div>
<div style="left:1033px;top:771px;width:267px;height:23px;background:#1d1b1a;"></div>
<span class="t " style="left:945px;top:771.85px;height:21.3px;line-height:21.3px;font-size:10.65px;width:80px;text-align:right;">Rotate X</span>
<span class="t " style="left:1039px;top:771.85px;height:21.3px;line-height:21.3px;font-size:10.65px;">0.00 °</span>
<div style="left:1087px;top:776px;width:208px;height:12px;background:#0b0b0b;border-radius:3px;"></div>
<div style="left:1189px;top:776px;width:4px;height:12px;background:#4f7a5c;"></div>
<div style="left:945px;top:795px;width:87px;height:23px;background:#1d1b1a;"></div>
<div style="left:1033px;top:795px;width:267px;height:23px;background:#1d1b1a;"></div>
<span class="t " style="left:945px;top:795.85px;height:21.3px;line-height:21.3px;font-size:10.65px;width:80px;text-align:right;">Rotate Y</span>
<span class="t " style="left:1039px;top:795.85px;height:21.3px;line-height:21.3px;font-size:10.65px;">0.00 °</span>
<div style="left:1087px;top:800px;width:208px;height:12px;background:#0b0b0b;border-radius:3px;"></div>
<div style="left:1189px;top:800px;width:4px;height:12px;background:#4f7a5c;"></div>
<div style="left:945px;top:819px;width:87px;height:23px;background:#1d1b1a;"></div>
<div style="left:1033px;top:819px;width:267px;height:23px;background:#1d1b1a;"></div>
<span class="t " style="left:945px;top:819.85px;height:21.3px;line-height:21.3px;font-size:10.65px;width:80px;text-align:right;">Rotate Z</span>
<span class="t " style="left:1039px;top:819.85px;height:21.3px;line-height:21.3px;font-size:10.65px;">0.00 °</span>
<div style="left:1087px;top:824px;width:208px;height:12px;background:#0b0b0b;border-radius:3px;"></div>
<div style="left:1189px;top:824px;width:4px;height:12px;background:#4f7a5c;"></div>
<div style="left:945px;top:843px;width:87px;height:23px;background:#1d1b1a;"></div>
<div style="left:1033px;top:843px;width:267px;height:23px;background:#1d1b1a;"></div>
<span class="t " style="left:945px;top:843.85px;height:21.3px;line-height:21.3px;font-size:10.65px;width:80px;text-align:right;">Anchor X</span>
<span class="t " style="left:1039px;top:843.85px;height:21.3px;line-height:21.3px;font-size:10.65px;">0.00</span>
<div style="left:1087px;top:848px;width:208px;height:12px;background:#0b0b0b;border-radius:3px;"></div>
<div style="left:1189px;top:848px;width:4px;height:12px;background:#4f7a5c;"></div>
<div style="left:945px;top:867px;width:87px;height:23px;background:#1d1b1a;"></div>
<div style="left:1033px;top:867px;width:267px;height:23px;background:#1d1b1a;"></div>
<span class="t " style="left:945px;top:867.85px;height:21.3px;line-height:21.3px;font-size:10.65px;width:80px;text-align:right;">Anchor Y</span>
<span class="t " style="left:1039px;top:867.85px;height:21.3px;line-height:21.3px;font-size:10.65px;">0.00</span>
<div style="left:1087px;top:872px;width:208px;height:12px;background:#0b0b0b;border-radius:3px;"></div>
<div style="left:1189px;top:872px;width:4px;height:12px;background:#4f7a5c;"></div>
<div style="left:945px;top:891px;width:87px;height:23px;background:#1d1b1a;"></div>
<div style="left:1033px;top:891px;width:267px;height:23px;background:#1d1b1a;"></div>
<span class="t " style="left:945px;top:891.85px;height:21.3px;line-height:21.3px;font-size:10.65px;width:80px;text-align:right;">Anchor Z</span>
<span class="t " style="left:1039px;top:891.85px;height:21.3px;line-height:21.3px;font-size:10.65px;">0.00</span>
<div style="left:1087px;top:896px;width:208px;height:12px;background:#0b0b0b;border-radius:3px;"></div>
<div style="left:1189px;top:896px;width:4px;height:12px;background:#4f7a5c;"></div>
<span class="t c" style="left:945px;top:938.3px;height:21.4px;line-height:21.4px;font-size:10.7px;width:355px;color:#2e2e2e;">Drop audio, video, mask, source or effect here.</span>
<div style="left:945px;top:483px;width:355px;height:47px;background:#34473a;"></div>
<svg style="left:1262px;top:490px;width:10px;height:9px" viewBox="0 0 10 9" fill="none" stroke="#e8e8e8" stroke-width="1.4"><path d="M0.7 3V0.7H3.2M6.8 0.7H9.3V3M9.3 6V8.3H6.8M3.2 8.3H0.7V6"/></svg>
<span class="t cond c" style="left:1283px;top:486.5px;height:16px;line-height:16px;font-size:8px;width:10px;color:#ddd;">x</span>
<div style="left:1250px;top:509px;width:30px;height:15px;background:#a9e85c;"></div>
<span class="t c" style="left:1260px;top:509.29999999999995px;height:15.0px;line-height:15.0px;font-size:7.5px;width:20px;color:#1c3a00;font-weight:bold;">B</span>
<span class="t c" style="left:1281px;top:509.29999999999995px;height:15.0px;line-height:15.0px;font-size:7.5px;width:12px;color:#26332a;">A</span>
<div style="left:1304px;top:423px;width:376px;height:460px;background:#0d0b0b;"></div>
<div style="left:1307px;top:402px;width:55px;height:21px;background:#181818;border-radius:3px 3px 0 0;"></div>
<span class="t c" style="left:1307px;top:402.3px;height:21.4px;line-height:21.4px;font-size:10.7px;width:55px;color:#a8a8a8;">Files</span>
<div style="left:1363px;top:402px;width:109px;height:21px;background:#181818;border-radius:3px 3px 0 0;"></div>
<span class="t c" style="left:1363px;top:402.3px;height:21.4px;line-height:21.4px;font-size:10.7px;width:109px;color:#a8a8a8;">Compositions</span>
<div style="left:1473px;top:402px;width:67px;height:21px;background:#181818;border-radius:3px 3px 0 0;"></div>
<span class="t c" style="left:1473px;top:402.3px;height:21.4px;line-height:21.4px;font-size:10.7px;width:67px;color:#a8a8a8;">Effects</span>
<div style="left:1541px;top:402px;width:76px;height:21px;background:#2a2a2a;border-radius:3px 3px 0 0;"></div>
<span class="t c" style="left:1541px;top:402.3px;height:21.4px;line-height:21.4px;font-size:10.7px;width:76px;color:#f0f0f0;">Sources</span>
<svg style="left:1313px;top:431.0px;width:9px;height:7px" viewBox="0 0 9 7"><path d="M0.3 0.4L8.7 0.4L4.5 6.6Z" fill="#8a8a8a"/></svg>
<span class="t " style="left:1330px;top:422.8px;height:21.4px;line-height:21.4px;font-size:10.7px;color:#e8e8e8;">DirectShow Capture Devices</span>
<span class="t " style="left:1350px;top:442.8px;height:21.4px;line-height:21.4px;font-size:10.7px;color:#e8e8e8;">FaceTime HD Camera</span>
<span class="t " style="left:1350px;top:462.8px;height:21.4px;line-height:21.4px;font-size:10.7px;color:#e8e8e8;">HD Video (VC100XUSB-Pro Box 1)</span>
<svg style="left:1313px;top:491.0px;width:9px;height:7px" viewBox="0 0 9 7"><path d="M0.3 0.4L8.7 0.4L4.5 6.6Z" fill="#8a8a8a"/></svg>
<span class="t " style="left:1330px;top:482.8px;height:21.4px;line-height:21.4px;font-size:10.7px;color:#e8e8e8;">FFGL Sources</span>
<span class="t " style="left:1350px;top:502.8px;height:21.4px;line-height:21.4px;font-size:10.7px;color:#e8e8e8;">Feedback</span>
<span class="t " style="left:1350px;top:522.8px;height:21.4px;line-height:21.4px;font-size:10.7px;color:#e8e8e8;">Gradients</span>
<span class="t " style="left:1350px;top:542.8px;height:21.4px;line-height:21.4px;font-size:10.7px;color:#e8e8e8;">Line Scape</span>
<span class="t " style="left:1350px;top:562.8px;height:21.4px;line-height:21.4px;font-size:10.7px;color:#e8e8e8;">Lines</span>
<span class="t " style="left:1350px;top:582.8px;height:21.4px;line-height:21.4px;font-size:10.7px;color:#e8e8e8;">Solid Color</span>
<span class="t " style="left:1350px;top:602.8px;height:21.4px;line-height:21.4px;font-size:10.7px;color:#e8e8e8;">Static Generator</span>
<span class="t " style="left:1350px;top:622.8px;height:21.4px;line-height:21.4px;font-size:10.7px;color:#e8e8e8;">Stroboscope</span>
<svg style="left:1313px;top:651.0px;width:9px;height:7px" viewBox="0 0 9 7"><path d="M0.3 0.4L8.7 0.4L4.5 6.6Z" fill="#8a8a8a"/></svg>
<span class="t " style="left:1330px;top:642.8px;height:21.4px;line-height:21.4px;font-size:10.7px;color:#e8e8e8;">Routing</span>
<span class="t " style="left:1350px;top:662.8px;height:21.4px;line-height:21.4px;font-size:10.7px;color:#e8e8e8;">Layer Router</span>
<div style="left:1304px;top:886px;width:376px;height:99px;background:#0d0b0b;"></div>
<div style="left:1304px;top:886px;width:376px;height:20px;background:#2c2c2c;"></div>
<span class="t " style="left:1310px;top:885.3px;height:21.4px;line-height:21.4px;font-size:10.7px;color:#f0f0f0;">Sources</span>
<div style="left:1664px;top:890px;width:11px;height:11px;background:#3c3c3c;border-radius:2px;"></div>
<span class="t c" style="left:1664px;top:888.5px;height:14px;line-height:14px;font-size:7px;width:11px;color:#ddd;">x</span>
<span class="t " style="left:1310px;top:905.6px;height:19.8px;line-height:19.8px;font-size:9.9px;color:#d4d4d4;">Various types of video and audio sources. All the capture</span>
<span class="t " style="left:1310px;top:917.6px;height:19.8px;line-height:19.8px;font-size:9.9px;color:#d4d4d4;">devices available on your computer, generative FreeFrame</span>
<span class="t " style="left:1310px;top:929.6px;height:19.8px;line-height:19.8px;font-size:9.9px;color:#d4d4d4;">plugins and Feedback. Drag to a clip to use.</span>
<div style="left:0px;top:987px;width:1680px;height:23px;background:#2a2a2a;"></div>
<span class="t " style="left:8.6px;top:988.6px;height:20px;line-height:20px;font-size:10px;color:#e0e0e0;">18:31</span>
<span class="t " style="left:46px;top:988.6px;height:20px;line-height:20px;font-size:10px;color:#e0e0e0;">Resolume Arena 4.1.8</span>
<div style="left:790px;top:187px;width:466px;height:641px;background:linear-gradient(100deg,#666b70 0%,#3a3f45 14%,#171b20 40%,#22272c 52%,#5b6066 64%,#2a2e33 80%,#16191d 100%);border-radius:7px;box-shadow:0 0 0 1px rgba(0,0,0,0.75),0 3px 12px rgba(0,0,0,0.85);border:1px solid #d4d9de;"></div>
<div style="left:791px;top:213px;width:464px;height:614px;background:#0e141a;border-radius:0 0 6px 6px;"></div>
<div style="left:791px;top:205px;width:464px;height:10px;background:linear-gradient(180deg,rgba(14,20,26,0),#0e141a);"></div>
<div style="left:786px;top:190px;width:86px;height:22px;background:rgba(255,255,255,0.5);border-radius:11px;filter:blur(7px);"></div>
<span class="t win" style="left:797px;top:188.8px;height:24px;line-height:24px;font-size:12px;color:#000;">Properties</span>
<div style="left:1202px;top:187px;width:48px;height:19px;background:linear-gradient(180deg,#e2a597 0%,#d0624a 45%,#b8351b 50%,#c2472d 100%);border-radius:0 0 4px 4px;border:1px solid #5a1a10;border-top:none;box-shadow:inset 0 0 0 1px rgba(255,255,255,0.35);"></div>
<svg style="left:1220px;top:190px;width:14px;height:12px" viewBox="0 0 14 12"><path d="M2 1.5H5L7 4L9 1.5H12L8.6 6L12 10.5H9L7 8L5 10.5H2L5.4 6Z" fill="#fff" stroke="#5a2a20" stroke-width="0.7"/></svg>
<div style="left:795px;top:214px;width:456px;height:608px;background:#f0f0f0;border:1px solid #aeb6be;"></div>
<div style="left:796px;top:215px;width:454px;height:606px;border:1px solid #fff;border-right:none;border-bottom:none;"></div>
<div style="left:804px;top:244px;width:439px;height:541px;background:#f0f0f0;border-left:1px solid #fff;border-top:1px solid #fff;border-right:2px solid #a0a0a0;border-bottom:2px solid #a0a0a0;"></div>
<div style="left:1242px;top:244px;width:1px;height:541px;background:#696969;"></div>
<div style="left:804px;top:784px;width:439px;height:1px;background:#696969;"></div>
<div style="left:806px;top:226px;width:44px;height:18px;background:#f0f0f0;border-left:1px solid #fff;border-top:1px solid #fff;border-right:2px solid #a0a0a0;border-radius:2px 2px 0 0;"></div>
<div style="left:849px;top:228px;width:1px;height:16px;background:#696969;"></div>
<span class="t win" style="left:811px;top:224.3px;height:22px;line-height:22px;font-size:11px;color:#000;letter-spacing:0.06px;">Device</span>
<div style="left:956px;top:226px;width:88px;height:18px;background:#f0f0f0;border-left:1px solid #fff;border-top:1px solid #fff;border-right:2px solid #a0a0a0;border-radius:2px 2px 0 0;"></div>
<div style="left:1043px;top:228px;width:1px;height:16px;background:#696969;"></div>
<span class="t win" style="left:959px;top:224.3px;height:22px;line-height:22px;font-size:11px;color:#000;letter-spacing:-0.30px;">Color Adjustment</span>
<div style="left:1045px;top:226px;width:83px;height:18px;background:#f0f0f0;border-left:1px solid #fff;border-top:1px solid #fff;border-right:2px solid #a0a0a0;border-radius:2px 2px 0 0;"></div>
<div style="left:1127px;top:228px;width:1px;height:16px;background:#696969;"></div>
<span class="t win" style="left:1050px;top:224.3px;height:22px;line-height:22px;font-size:11px;color:#000;letter-spacing:-0.12px;">Video Decoder</span>
<div style="left:1129px;top:226px;width:86px;height:18px;background:#f0f0f0;border-left:1px solid #fff;border-top:1px solid #fff;border-right:2px solid #a0a0a0;border-radius:2px 2px 0 0;"></div>
<div style="left:1214px;top:228px;width:1px;height:16px;background:#696969;"></div>
<span class="t win" style="left:1133px;top:224.3px;height:22px;line-height:22px;font-size:11px;color:#000;letter-spacing:-0.19px;">Video Proc Amp</span>
<div style="left:851px;top:224px;width:104px;height:22px;background:#f0f0f0;border-left:1px solid #fff;border-top:1px solid #fff;border-right:2px solid #a0a0a0;border-radius:2px 2px 0 0;"></div>
<div style="left:954px;top:226px;width:1px;height:20px;background:#696969;"></div>
<span class="t win" style="left:857px;top:222px;height:22px;line-height:22px;font-size:11px;color:#000;letter-spacing:-0.16px;">Advanced Settings</span>
<div style="left:818px;top:263px;width:410px;height:100px;border:1px solid #a0a0a0;box-shadow:1px 1px 0 #fff, inset 1px 1px 0 #fff;"></div>
<div style="left:824px;top:257px;width:61.29942187500001px;height:12px;background:#f0f0f0;"></div>
<span class="t win" style="left:826px;top:251.60000000000002px;height:22px;line-height:22px;font-size:11px;color:#000;letter-spacing:-0.09px;">Input Signal</span>
<span class="t win" style="left:827px;top:279.5px;height:22px;line-height:22px;font-size:11px;color:#000;letter-spacing:0.21px;">Interface:</span>
<div style="left:903px;top:279px;width:316px;height:21px;background:#f0f0f0;border-left:1px solid #a0a0a0;border-top:1px solid #a0a0a0;border-right:1px solid #fff;border-bottom:1px solid #fff;box-shadow:inset 1px 1px 0 #696969, inset -1px -1px 0 #e3e3e3;"></div>
<span class="t win" style="left:907px;top:278.8px;height:22px;line-height:22px;font-size:11px;color:#6d6d6d;letter-spacing:-0.35px;">VGA Input (RGB-HV)</span>
<div style="left:1201px;top:281px;width:16px;height:17px;background:#f0f0f0;border-left:1px solid #fff;border-top:1px solid #fff;border-right:1px solid #696969;border-bottom:1px solid #696969;box-shadow:inset -1px -1px 0 #a0a0a0;"></div>
<svg style="left:1205px;top:287.5px;width:8px;height:5px" viewBox="0 0 8 5"><path d="M0.5 0.5H7.5L4 4.5Z" fill="#a0a0a0"/></svg>
<div style="left:903px;top:311px;width:13px;height:13px;background:#fff;border-left:1px solid #a0a0a0;border-top:1px solid #a0a0a0;border-right:1px solid #fff;border-bottom:1px solid #fff;box-shadow:inset 1px 1px 0 #696969, inset -1px -1px 0 #e3e3e3;"></div>
<svg style="left:906px;top:314px;width:8px;height:8px" viewBox="0 0 8 8"><path d="M0.6 2.6L3 5L7.4 0.6V3L3 7.4L0.6 5Z" fill="#000"/></svg>
<span class="t win" style="left:921px;top:307px;height:22px;line-height:22px;font-size:11px;color:#000;letter-spacing:-0.00px;">Auto select input interface</span>
<span class="t win" style="left:827px;top:332.3px;height:22px;line-height:22px;font-size:11px;color:#000;letter-spacing:-0.15px;">Status:</span>
<span class="t win" style="left:902px;top:332.3px;height:22px;line-height:22px;font-size:11px;color:#000;letter-spacing:-0.04px;">Lines: 750 (5), FPS: 60.01p, HSync+, VSync+</span>
<div style="left:818px;top:387px;width:410px;height:169px;border:1px solid #a0a0a0;box-shadow:1px 1px 0 #fff, inset 1px 1px 0 #fff;"></div>
<div style="left:824px;top:381px;width:90.64881249999999px;height:12px;background:#f0f0f0;"></div>
<span class="t win" style="left:826px;top:375.6px;height:22px;line-height:22px;font-size:11px;color:#000;letter-spacing:-0.00px;">Image Adjustment</span>
<span class="t win" style="left:827px;top:402.3px;height:22px;line-height:22px;font-size:11px;color:#000;letter-spacing:-0.14px;">Resolution:</span>
<span class="t win" style="left:903px;top:402.3px;height:22px;line-height:22px;font-size:11px;color:#000;letter-spacing:-0.19px;">1280 x 720 Pixels (CEA Standard)</span>
<div style="left:1137px;top:404px;width:83px;height:22px;background:#f0f0f0;border-left:1px solid #fff;border-top:1px solid #fff;border-right:1px solid #696969;border-bottom:1px solid #696969;box-shadow:inset -1px -1px 0 #a0a0a0;"></div>
<span class="t win" style="left:1137px;top:404.3px;height:22px;line-height:22px;font-size:11px;width:83px;text-align:center;color:#000;letter-spacing:-0.19px;">Prefered Modes</span>
<div style="left:827px;top:432px;width:388px;height:1px;background:#a0a0a0;"></div>
<div style="left:827px;top:433px;width:388px;height:1px;background:#fff;"></div>
<span class="t win" style="left:827px;top:441.3px;height:22px;line-height:22px;font-size:11px;color:#000;letter-spacing:-0.37px;">Pixels Per</span>
<span class="t win" style="left:903px;top:441.3px;height:22px;line-height:22px;font-size:11px;color:#000;letter-spacing:-0.15px;">1650</span>
<span class="t win" style="left:1036px;top:441.3px;height:22px;line-height:22px;font-size:11px;color:#000;letter-spacing:-0.15px;">Phase:</span>
<span class="t win" style="left:1103px;top:441.3px;height:22px;line-height:22px;font-size:11px;color:#000;letter-spacing:-0.15px;">8</span>
<div style="left:936px;top:438px;width:41px;height:23px;background:#f0f0f0;border-left:1px solid #fff;border-top:1px solid #fff;border-right:1px solid #696969;border-bottom:1px solid #696969;box-shadow:inset -1px -1px 0 #a0a0a0;"></div>
<span class="t win" style="left:936px;top:438.8px;height:22px;line-height:22px;font-size:11px;width:41px;text-align:center;color:#000;letter-spacing:-0.15px;">+</span>
<div style="left:978px;top:438px;width:41px;height:23px;background:#f0f0f0;border-left:1px solid #fff;border-top:1px solid #fff;border-right:1px solid #696969;border-bottom:1px solid #696969;box-shadow:inset -1px -1px 0 #a0a0a0;"></div>
<span class="t win" style="left:978px;top:438.8px;height:22px;line-height:22px;font-size:11px;width:41px;text-align:center;color:#000;letter-spacing:-0.15px;">-</span>
<div style="left:1137px;top:438px;width:41px;height:23px;background:#f0f0f0;border-left:1px solid #fff;border-top:1px solid #fff;border-right:1px solid #696969;border-bottom:1px solid #696969;box-shadow:inset -1px -1px 0 #a0a0a0;"></div>
<span class="t win" style="left:1137px;top:438.8px;height:22px;line-height:22px;font-size:11px;width:41px;text-align:center;color:#000;letter-spacing:-0.15px;">+</span>
<div style="left:1179px;top:438px;width:41px;height:23px;background:#f0f0f0;border-left:1px solid #fff;border-top:1px solid #fff;border-right:1px solid #696969;border-bottom:1px solid #696969;box-shadow:inset -1px -1px 0 #a0a0a0;"></div>
<span class="t win" style="left:1179px;top:438.8px;height:22px;line-height:22px;font-size:11px;width:41px;text-align:center;color:#000;letter-spacing:-0.15px;">-</span>
<span class="t win" style="left:827px;top:460.3px;height:22px;line-height:22px;font-size:11px;color:#000;letter-spacing:-0.15px;">Left:</span>
<span class="t win" style="left:903px;top:460.3px;height:22px;line-height:22px;font-size:11px;color:#000;letter-spacing:-0.15px;">258</span>
<span class="t win" style="left:1036px;top:460.3px;height:22px;line-height:22px;font-size:11px;color:#000;letter-spacing:-0.15px;">Upper:</span>
<span class="t win" style="left:1103px;top:460.3px;height:22px;line-height:22px;font-size:11px;color:#000;letter-spacing:-0.15px;">25</span>
<div style="left:936px;top:461px;width:41px;height:23px;background:#f0f0f0;border-left:1px solid #fff;border-top:1px solid #fff;border-right:1px solid #696969;border-bottom:1px solid #696969;box-shadow:inset -1px -1px 0 #a0a0a0;"></div>
<span class="t win" style="left:936px;top:461.8px;height:22px;line-height:22px;font-size:11px;width:41px;text-align:center;color:#000;letter-spacing:-0.15px;">+</span>
<div style="left:978px;top:461px;width:41px;height:23px;background:#f0f0f0;border-left:1px solid #fff;border-top:1px solid #fff;border-right:1px solid #696969;border-bottom:1px solid #696969;box-shadow:inset -1px -1px 0 #a0a0a0;"></div>
<span class="t win" style="left:978px;top:461.8px;height:22px;line-height:22px;font-size:11px;width:41px;text-align:center;color:#000;letter-spacing:-0.15px;">-</span>
<div style="left:1137px;top:461px;width:41px;height:23px;background:#f0f0f0;border-left:1px solid #fff;border-top:1px solid #fff;border-right:1px solid #696969;border-bottom:1px solid #696969;box-shadow:inset -1px -1px 0 #a0a0a0;"></div>
<span class="t win" style="left:1137px;top:461.8px;height:22px;line-height:22px;font-size:11px;width:41px;text-align:center;color:#000;letter-spacing:-0.15px;">+</span>
<div style="left:1179px;top:461px;width:41px;height:23px;background:#f0f0f0;border-left:1px solid #fff;border-top:1px solid #fff;border-right:1px solid #696969;border-bottom:1px solid #696969;box-shadow:inset -1px -1px 0 #a0a0a0;"></div>
<span class="t win" style="left:1179px;top:461.8px;height:22px;line-height:22px;font-size:11px;width:41px;text-align:center;color:#000;letter-spacing:-0.15px;">-</span>
<span class="t win" style="left:827px;top:483.3px;height:22px;line-height:22px;font-size:11px;color:#000;letter-spacing:-0.15px;">Width:</span>
<span class="t win" style="left:903px;top:483.3px;height:22px;line-height:22px;font-size:11px;color:#000;letter-spacing:-0.15px;">1280</span>
<span class="t win" style="left:1036px;top:483.3px;height:22px;line-height:22px;font-size:11px;color:#000;letter-spacing:-0.15px;">Height:</span>
<span class="t win" style="left:1103px;top:483.3px;height:22px;line-height:22px;font-size:11px;color:#000;letter-spacing:-0.15px;">720</span>
<div style="left:936px;top:484px;width:41px;height:23px;background:#f0f0f0;border-left:1px solid #fff;border-top:1px solid #fff;border-right:1px solid #696969;border-bottom:1px solid #696969;box-shadow:inset -1px -1px 0 #a0a0a0;"></div>
<span class="t win" style="left:936px;top:484.8px;height:22px;line-height:22px;font-size:11px;width:41px;text-align:center;color:#000;letter-spacing:-0.15px;">+</span>
<div style="left:978px;top:484px;width:41px;height:23px;background:#f0f0f0;border-left:1px solid #fff;border-top:1px solid #fff;border-right:1px solid #696969;border-bottom:1px solid #696969;box-shadow:inset -1px -1px 0 #a0a0a0;"></div>
<span class="t win" style="left:978px;top:484.8px;height:22px;line-height:22px;font-size:11px;width:41px;text-align:center;color:#000;letter-spacing:-0.15px;">-</span>
<div style="left:1137px;top:484px;width:41px;height:23px;background:#f0f0f0;border-left:1px solid #fff;border-top:1px solid #fff;border-right:1px solid #696969;border-bottom:1px solid #696969;box-shadow:inset -1px -1px 0 #a0a0a0;"></div>
<span class="t win" style="left:1137px;top:484.8px;height:22px;line-height:22px;font-size:11px;width:41px;text-align:center;color:#000;letter-spacing:-0.15px;">+</span>
<div style="left:1179px;top:484px;width:41px;height:23px;background:#f0f0f0;border-left:1px solid #fff;border-top:1px solid #fff;border-right:1px solid #696969;border-bottom:1px solid #696969;box-shadow:inset -1px -1px 0 #a0a0a0;"></div>
<span class="t win" style="left:1179px;top:484.8px;height:22px;line-height:22px;font-size:11px;width:41px;text-align:center;color:#000;letter-spacing:-0.15px;">-</span>
<div style="left:827px;top:513px;width:386px;height:1px;background:#a0a0a0;"></div>
<div style="left:827px;top:514px;width:386px;height:1px;background:#fff;"></div>
<div style="left:986px;top:523px;width:75px;height:23px;background:#f0f0f0;border-left:1px solid #fff;border-top:1px solid #fff;border-right:1px solid #696969;border-bottom:1px solid #696969;box-shadow:inset -1px -1px 0 #a0a0a0;"></div>
<span class="t win" style="left:986px;top:523.8px;height:22px;line-height:22px;font-size:11px;width:75px;text-align:center;color:#000;letter-spacing:-0.13px;">Save Preset</span>
<div style="left:1065px;top:523px;width:75px;height:23px;background:#f0f0f0;border-left:1px solid #fff;border-top:1px solid #fff;border-right:1px solid #696969;border-bottom:1px solid #696969;box-shadow:inset -1px -1px 0 #a0a0a0;"></div>
<span class="t win" style="left:1065px;top:523.8px;height:22px;line-height:22px;font-size:11px;width:75px;text-align:center;color:#8c8c8c;letter-spacing:-0.24px;text-shadow:1px 1px 0 #fff;">Del Preset</span>
<div style="left:1145px;top:523px;width:75px;height:23px;background:#f0f0f0;border-left:1px solid #fff;border-top:1px solid #fff;border-right:1px solid #696969;border-bottom:1px solid #696969;box-shadow:inset -1px -1px 0 #a0a0a0;"></div>
<span class="t win" style="left:1145px;top:523.8px;height:22px;line-height:22px;font-size:11px;width:75px;text-align:center;color:#8c8c8c;letter-spacing:-0.16px;text-shadow:1px 1px 0 #fff;">Apply Preset</span>
<div style="left:818px;top:575px;width:410px;height:121px;border:1px solid #a0a0a0;box-shadow:1px 1px 0 #fff, inset 1px 1px 0 #fff;"></div>
<div style="left:824px;top:569px;width:37.121484375px;height:12px;background:#f0f0f0;"></div>
<span class="t win" style="left:826px;top:563.6px;height:22px;line-height:22px;font-size:11px;color:#000;letter-spacing:-0.15px;">Output</span>
<span class="t win" style="left:827px;top:587.3px;height:22px;line-height:22px;font-size:11px;color:#000;letter-spacing:-0.15px;">Format:</span>
<span class="t win" style="left:902px;top:587.3px;height:22px;line-height:22px;font-size:11px;color:#000;letter-spacing:-0.07px;">Not connected</span>
<span class="t win" style="left:827px;top:613px;height:22px;line-height:22px;font-size:11px;color:#000;letter-spacing:-0.15px;">Scale:</span>
<div style="left:903px;top:612px;width:316px;height:20px;background:#fff;border-left:1px solid #a0a0a0;border-top:1px solid #a0a0a0;border-right:1px solid #fff;border-bottom:1px solid #fff;box-shadow:inset 1px 1px 0 #696969, inset -1px -1px 0 #e3e3e3;"></div>
<span class="t win" style="left:907px;top:611.3px;height:22px;line-height:22px;font-size:11px;color:#000;letter-spacing:-0.16px;">Fill output image</span>
<div style="left:1201px;top:614px;width:16px;height:16px;background:#f0f0f0;border-left:1px solid #fff;border-top:1px solid #fff;border-right:1px solid #696969;border-bottom:1px solid #696969;box-shadow:inset -1px -1px 0 #a0a0a0;"></div>
<svg style="left:1205px;top:620.0px;width:8px;height:5px" viewBox="0 0 8 5"><path d="M0.5 0.5H7.5L4 4.5Z" fill="#000"/></svg>
<span class="t win" style="left:827px;top:639.3px;height:22px;line-height:22px;font-size:11px;color:#000;letter-spacing:-0.06px;">Deinterlace:</span>
<div style="left:903px;top:641px;width:316px;height:19px;background:#fff;border-left:1px solid #a0a0a0;border-top:1px solid #a0a0a0;border-right:1px solid #fff;border-bottom:1px solid #fff;box-shadow:inset 1px 1px 0 #696969, inset -1px -1px 0 #e3e3e3;"></div>
<span class="t win" style="left:907px;top:639.8px;height:22px;line-height:22px;font-size:11px;color:#000;letter-spacing:-0.15px;">Disabled</span>
<div style="left:1201px;top:643px;width:16px;height:15px;background:#f0f0f0;border-left:1px solid #fff;border-top:1px solid #fff;border-right:1px solid #696969;border-bottom:1px solid #696969;box-shadow:inset -1px -1px 0 #a0a0a0;"></div>
<svg style="left:1205px;top:648.5px;width:8px;height:5px" viewBox="0 0 8 5"><path d="M0.5 0.5H7.5L4 4.5Z" fill="#000"/></svg>
<span class="t win" style="left:827px;top:665.3px;height:22px;line-height:22px;font-size:11px;color:#000;letter-spacing:-0.15px;">Image</span>
<div style="left:903px;top:670px;width:13px;height:13px;background:#fff;border-left:1px solid #a0a0a0;border-top:1px solid #a0a0a0;border-right:1px solid #fff;border-bottom:1px solid #fff;box-shadow:inset 1px 1px 0 #696969, inset -1px -1px 0 #e3e3e3;"></div>
<svg style="left:906px;top:673px;width:8px;height:8px" viewBox="0 0 8 8"><path d="M0.6 2.6L3 5L7.4 0.6V3L3 7.4L0.6 5Z" fill="#000"/></svg>
<span class="t win" style="left:921px;top:666px;height:22px;line-height:22px;font-size:11px;color:#000;letter-spacing:-0.20px;">Vertial Flip</span>
<div style="left:1055px;top:670px;width:13px;height:13px;background:#fff;border-left:1px solid #a0a0a0;border-top:1px solid #a0a0a0;border-right:1px solid #fff;border-bottom:1px solid #fff;box-shadow:inset 1px 1px 0 #696969, inset -1px -1px 0 #e3e3e3;"></div>
<svg style="left:1058px;top:673px;width:8px;height:8px" viewBox="0 0 8 8"><path d="M0.6 2.6L3 5L7.4 0.6V3L3 7.4L0.6 5Z" fill="#000"/></svg>
<span class="t win" style="left:1073px;top:666px;height:22px;line-height:22px;font-size:11px;color:#000;letter-spacing:-0.13px;">Horizontal Mirror</span>
<div style="left:1006px;top:791px;width:75px;height:23px;background:#000;"></div>
<div style="left:1007px;top:792px;width:73px;height:21px;background:#f0f0f0;border-left:1px solid #fff;border-top:1px solid #fff;border-right:1px solid #696969;border-bottom:1px solid #696969;box-shadow:inset -1px -1px 0 #a0a0a0;"></div>
<span class="t win" style="left:1007px;top:791.8px;height:22px;line-height:22px;font-size:11px;width:73px;text-align:center;color:#000;letter-spacing:-0.15px;">OK</span>
<div style="left:1087px;top:791px;width:75px;height:23px;background:#f0f0f0;border-left:1px solid #fff;border-top:1px solid #fff;border-right:1px solid #696969;border-bottom:1px solid #696969;box-shadow:inset -1px -1px 0 #a0a0a0;"></div>
<span class="t win" style="left:1087px;top:791.8px;height:22px;line-height:22px;font-size:11px;width:75px;text-align:center;color:#000;letter-spacing:-0.15px;">Cancel</span>
<div style="left:1168px;top:791px;width:75px;height:23px;background:#f0f0f0;border-left:1px solid #fff;border-top:1px solid #fff;border-right:1px solid #696969;border-bottom:1px solid #696969;box-shadow:inset -1px -1px 0 #a0a0a0;"></div>
<span class="t win" style="left:1168px;top:791.8px;height:22px;line-height:22px;font-size:11px;width:75px;text-align:center;color:#8c8c8c;letter-spacing:-0.15px;text-shadow:1px 1px 0 #fff;">Apply</span>
<div style="left:0px;top:1010px;width:1680px;height:40px;background:linear-gradient(180deg,#2b2e32 0,#16181b 8%,#0e0f11 50%,#08090a 100%);"></div>
<div style="left:0px;top:1010px;width:1680px;height:1px;background:#6d7176;"></div>
<div style="left:60px;top:1011px;width:158px;height:38px;background:linear-gradient(172deg,rgba(255,255,255,0.5) 0,rgba(255,255,255,0.32) 25%,rgba(255,255,255,0.16) 44%,rgba(255,255,255,0.07) 52%,rgba(255,255,255,0.09) 100%);border:1px solid rgba(200,205,210,0.55);border-radius:3px;box-shadow:inset 0 0 0 1px rgba(255,255,255,0.08);"></div>
<span class="t win" style="left:105px;top:1018.3px;height:24px;line-height:24px;font-size:12px;color:#fff;letter-spacing:-0.21px;text-shadow:0 0 3px rgba(0,0,0,0.9);">Projects</span>
<div style="left:222px;top:1011px;width:158px;height:38px;background:linear-gradient(172deg,rgba(255,255,255,0.5) 0,rgba(255,255,255,0.32) 25%,rgba(255,255,255,0.16) 44%,rgba(255,255,255,0.07) 52%,rgba(255,255,255,0.09) 100%);border:1px solid rgba(200,205,210,0.55);border-radius:3px;box-shadow:inset 0 0 0 1px rgba(255,255,255,0.08);"></div>
<span class="t win" style="left:267px;top:1018.3px;height:24px;line-height:24px;font-size:12px;color:#fff;letter-spacing:-0.21px;text-shadow:0 0 3px rgba(0,0,0,0.9);">Resolume Forum ...</span>
<div style="left:384px;top:1011px;width:160px;height:38px;background:linear-gradient(172deg,rgba(255,255,255,0.5) 0,rgba(255,255,255,0.32) 25%,rgba(255,255,255,0.16) 44%,rgba(255,255,255,0.07) 52%,rgba(255,255,255,0.09) 100%);border:1px solid rgba(200,205,210,0.55);border-radius:3px;box-shadow:inset 0 0 0 1px rgba(255,255,255,0.08);"></div>
<span class="t win" style="left:429px;top:1018.3px;height:24px;line-height:24px;font-size:12px;color:#fff;letter-spacing:-0.13px;text-shadow:0 0 3px rgba(0,0,0,0.9);">Resolume Arena -...</span>
<div style="left:543px;top:1011px;width:160px;height:38px;background:linear-gradient(180deg,rgba(200,206,212,0.7) 0,rgba(160,166,172,0.62) 48%,rgba(115,120,126,0.62) 52%,rgba(140,146,152,0.68) 100%);border:1px solid rgba(235,240,245,0.75);border-radius:3px;box-shadow:inset 0 0 0 1px rgba(255,255,255,0.08);"></div>
<span class="t win" style="left:589px;top:1018.3px;height:24px;line-height:24px;font-size:12px;color:#fff;letter-spacing:-0.17px;text-shadow:0 0 3px rgba(0,0,0,0.9);">Properties</span>
<div style="left:703px;top:1011px;width:159px;height:38px;background:linear-gradient(172deg,rgba(255,255,255,0.5) 0,rgba(255,255,255,0.32) 25%,rgba(255,255,255,0.16) 44%,rgba(255,255,255,0.07) 52%,rgba(255,255,255,0.09) 100%);border:1px solid rgba(200,205,210,0.55);border-radius:3px;box-shadow:inset 0 0 0 1px rgba(255,255,255,0.08);"></div>
<span class="t win" style="left:749px;top:1018.3px;height:24px;line-height:24px;font-size:12px;color:#fff;letter-spacing:-0.21px;text-shadow:0 0 3px rgba(0,0,0,0.9);">Arena Display</span>
<div style="left:866px;top:1011px;width:158px;height:38px;background:linear-gradient(172deg,rgba(255,255,255,0.5) 0,rgba(255,255,255,0.32) 25%,rgba(255,255,255,0.16) 44%,rgba(255,255,255,0.07) 52%,rgba(255,255,255,0.09) 100%);border:1px solid rgba(200,205,210,0.55);border-radius:3px;box-shadow:inset 0 0 0 1px rgba(255,255,255,0.08);"></div>
<span class="t win" style="left:911px;top:1018.3px;height:24px;line-height:24px;font-size:12px;color:#fff;letter-spacing:0.05px;text-shadow:0 0 3px rgba(0,0,0,0.9);">Untitled - Paint</span>
<svg style="left:394px;top:1015px;width:27px;height:30px" viewBox="0 0 27 30"><path d="M13.6 0.4L25.6 0.4L25.6 30L12.4 30L12.6 21.4L0.4 21.8L0.4 17.4Z" fill="#a2de55"/><path d="M13.6 0.4L25.6 0.4L25.6 3L11.2 4Z" fill="#c0f070"/><path d="M14.4 9.4L14.4 16L9.4 16.3Z" fill="#1c1e20"/><path d="M12.6 21.4L25.6 20.6L26.4 30L12.2 30Z" fill="#8ccc40"/><path d="M12.4 23.4L26 22.6M12.3 25.4L26.2 24.6M12.2 27.4L26.3 26.6M12.2 29.2L26.4 28.6" stroke="#6aa428" stroke-width="0.7"/></svg>
<svg style="left:554px;top:1015px;width:27px;height:30px" viewBox="0 0 27 30"><path d="M13.6 0.4L25.6 0.4L25.6 30L12.4 30L12.6 21.4L0.4 21.8L0.4 17.4Z" fill="#a2de55"/><path d="M13.6 0.4L25.6 0.4L25.6 3L11.2 4Z" fill="#c0f070"/><path d="M14.4 9.4L14.4 16L9.4 16.3Z" fill="#1c1e20"/><path d="M12.6 21.4L25.6 20.6L26.4 30L12.2 30Z" fill="#8ccc40"/><path d="M12.4 23.4L26 22.6M12.3 25.4L26.2 24.6M12.2 27.4L26.3 26.6M12.2 29.2L26.4 28.6" stroke="#6aa428" stroke-width="0.7"/></svg>
<svg style="left:714px;top:1015px;width:27px;height:30px" viewBox="0 0 27 30"><path d="M13.6 0.4L25.6 0.4L25.6 30L12.4 30L12.6 21.4L0.4 21.8L0.4 17.4Z" fill="#a2de55"/><path d="M13.6 0.4L25.6 0.4L25.6 3L11.2 4Z" fill="#c0f070"/><path d="M14.4 9.4L14.4 16L9.4 16.3Z" fill="#1c1e20"/><path d="M12.6 21.4L25.6 20.6L26.4 30L12.2 30Z" fill="#8ccc40"/><path d="M12.4 23.4L26 22.6M12.3 25.4L26.2 24.6M12.2 27.4L26.3 26.6M12.2 29.2L26.4 28.6" stroke="#6aa428" stroke-width="0.7"/></svg>
<svg style="left:7px;top:1011px;width:40px;height:40px" viewBox="0 0 40 40"><defs><radialGradient id="orb" cx="0.5" cy="0.95" r="0.85"><stop offset="0" stop-color="#7fe4ff"/><stop offset="0.35" stop-color="#2a8ad0"/><stop offset="0.75" stop-color="#123c78"/><stop offset="1" stop-color="#0a2048"/></radialGradient><linearGradient id="orbh" x1="0" y1="0" x2="0" y2="1"><stop offset="0" stop-color="#fff" stop-opacity="0.7"/><stop offset="1" stop-color="#fff" stop-opacity="0.08"/></linearGradient></defs><circle cx="20" cy="20" r="19" fill="url(#orb)" stroke="#1a3a60" stroke-width="1"/><circle cx="20" cy="20" r="18" fill="none" stroke="#9fd4f0" stroke-opacity="0.55" stroke-width="1"/><path d="M3.4 15A17 17 0 0 1 36.6 15Q20 22 3.4 15Z" fill="url(#orbh)"/><path d="M11.4 11.2Q15.4 8.6 19.4 10.6L17.8 18.4Q14 16.4 9.8 18.8Z" fill="#f0602a"/><path d="M21 11.2Q25 13.2 29.6 11L28 18.8Q23.8 21 19.4 19Z" fill="#8cc63e"/><path d="M9.4 20.6Q13.6 18.2 17.4 20.2L15.8 28Q12 26 7.8 28.4Z" fill="#2e9ee6"/><path d="M19 20.8Q23.4 22.8 27.6 20.6L26 28.4Q21.6 30.6 17.4 28.6Z" fill="#fac824"/></svg>
<svg style="left:69px;top:1014px;width:26px;height:32px" viewBox="0 0 26 32"><path d="M2 6L9 3L10 5L22 2.5L22 27L2 30Z" fill="#e6c664"/><path d="M2 8L14 5.5L16 30L2 30Z" fill="#f6e398"/><path d="M16 7L22 5.5L22 27L16 29.5Z" fill="#f2da7c"/><rect x="20" y="17" width="2" height="5" fill="#f8ecb8"/></svg>
<svg style="left:231px;top:1014px;width:32px;height:32px" viewBox="0 0 32 32"><defs><radialGradient id="ffg" cx="0.75" cy="0.3" r="0.9"><stop offset="0" stop-color="#ffe14a"/><stop offset="0.35" stop-color="#f8a020"/><stop offset="0.7" stop-color="#ee6418"/><stop offset="1" stop-color="#d83c14"/></radialGradient><radialGradient id="ffb" cx="0.45" cy="0.3" r="0.8"><stop offset="0" stop-color="#58c0f4"/><stop offset="0.5" stop-color="#1c78d0"/><stop offset="1" stop-color="#143c98"/></radialGradient></defs><circle cx="17" cy="13.5" r="11.5" fill="url(#ffb)"/><path d="M3.4 7.6Q4.4 9.4 6.2 9.6Q7 5.6 10.6 4Q9.8 6 10.8 7.4Q12.6 7.2 14 8.2Q12.4 8.8 11.6 10.4Q13.6 10.8 15 10Q14.6 12.2 12 13Q11.6 17 15 18.6Q18.4 19.8 21 17.6Q23.4 18 24.6 16.4Q26 12.6 23 8Q27.4 9.6 28.6 14Q28 8 24 4.6Q29.6 7 30.6 14.6Q31 24.4 22.6 29Q13.6 32.6 6.4 27Q0.4 21.4 1.2 13.4Q1.6 9.8 3.4 7.6Z" fill="url(#ffg)"/></svg>
<svg style="left:872px;top:1012px;width:36px;height:36px" viewBox="0 0 36 36"><defs><linearGradient id="pal" x1="0" y1="0" x2="1" y2="1"><stop offset="0" stop-color="#eaf4fc"/><stop offset="0.6" stop-color="#b4d4ee"/><stop offset="1" stop-color="#8cb8e0"/></linearGradient></defs><path d="M3 20Q3.400 11 13 8.400Q24 6.400 30 11.600Q33 15.600 31.400 21Q28.400 29 19 30.600Q15.400 31 15 28.400Q15 26.400 12.400 26.600Q10.400 27.400 9 29Q5 28.400 3 20Z" fill="url(#pal)" stroke="#7aa0c8" stroke-width="0.800"/><circle cx="7.600" cy="19.400" r="2.300" fill="#e0403a"/><circle cx="13" cy="14.400" r="2.300" fill="#58b838"/><circle cx="20" cy="12" r="2.400" fill="#f0c428"/><circle cx="15.600" cy="21.600" r="1.700" fill="#1c3050"/><path d="M17.600 33.400L27.600 9.400L30 10.400L20 33.600Q18.400 35 17.600 33.400Z" fill="#e8902c"/><path d="M27.600 9.400L28.400 4.400Q30.400 2.400 32 4.400L30 10.400Z" fill="#d8b078"/></svg>
<svg style="left:1449px;top:1019px;width:18px;height:17px" viewBox="0 0 18 17" fill="none"><rect x="1" y="6.5" width="16" height="9" rx="1.5" fill="#8c8c8c"/><path d="M3 9H15M3 11H15M4.5 13.2H13.5" stroke="#d8d8d8" stroke-width="1.1" stroke-dasharray="1.4 0.8"/><path d="M4 6Q5 2.5 8.5 3.8Q11 4.8 13.5 2" stroke="#8c8c8c" stroke-width="1.1"/></svg>
<svg style="left:1481px;top:1028px;width:9px;height:6px" viewBox="0 0 9 6"><path d="M0.5 5.2L4.5 0.8L8.5 5.2Z" fill="#fff"/></svg>
<svg style="left:1502px;top:1023px;width:16px;height:16px" viewBox="0 0 16 16" fill="none"><rect x="1.5" y="3" width="6.5" height="10.5" rx="1" stroke="#f4f4f4" stroke-width="1.4"/><rect x="3.5" y="1.3" width="3" height="1.6" fill="#f4f4f4"/><path d="M8 2.2V5M12 2.2V5" stroke="#f4f4f4" stroke-width="1.4"/><path d="M6.4 5H13.6V8.2Q13.6 10.6 11 10.8V12.4H9.2V10.8Q6.4 10.6 6.4 8.2Z" fill="#f4f4f4"/><path d="M10 12V14.5H8.5" stroke="#f4f4f4" stroke-width="1.2"/></svg>
<svg style="left:1526px;top:1023px;width:18px;height:17px" viewBox="0 0 18 17" fill="none"><path d="M1.4 1V14.5" stroke="#f4f4f4" stroke-width="1.3"/><path d="M2.4 2Q5 0.6 7.4 2.4Q10 4 13 2.8V8.8Q10 10 7.4 8.4Q5 6.8 2.4 8Z" fill="#f4f4f4"/><circle cx="11" cy="11.6" r="4.8" fill="#d8302a" stroke="#fff" stroke-width="0.6"/><path d="M9 9.6L13 13.6M13 9.6L9 13.6" stroke="#fff" stroke-width="1.6"/></svg>
<svg style="left:1550px;top:1025px;width:16px;height:12px" viewBox="0 0 16 12"><path d="M0.6 9.4H2.6V11.4H0.6ZM3.8 7.4H5.8V11.4H3.8ZM7 5.2H9V11.4H7ZM10.2 2.8H12.2V11.4H10.2ZM13.4 0.4H15.4V11.4H13.4Z" fill="#f4f4f4"/></svg>
<svg style="left:1574px;top:1023px;width:17px;height:16px" viewBox="0 0 17 16" fill="none"><path d="M1 5.6H3.6L7.6 1.6V14.4L3.6 10.4H1Z" fill="#f4f4f4"/><path d="M9.6 5.8Q11 8 9.6 10.2M11.4 4Q13.8 8 11.4 12M13.4 2.4Q16.6 8 13.4 13.6" stroke="#dcdcdc" stroke-width="1.1"/></svg>
<span class="t win" style="left:1617px;top:1011px;height:24px;line-height:24px;font-size:12px;color:#fff;letter-spacing:-0.2px;">18:31</span>
<span class="t win" style="left:1607px;top:1028px;height:24px;line-height:24px;font-size:12px;color:#fff;letter-spacing:-0.2px;">8-5-2014</span>
<div style="left:1667px;top:1011px;width:13px;height:39px;background:linear-gradient(135deg,rgba(255,255,255,0.35),rgba(255,255,255,0.08) 50%,rgba(255,255,255,0.02));border:1px solid rgba(200,205,210,0.5);border-right:none;"></div>
</body></html>
